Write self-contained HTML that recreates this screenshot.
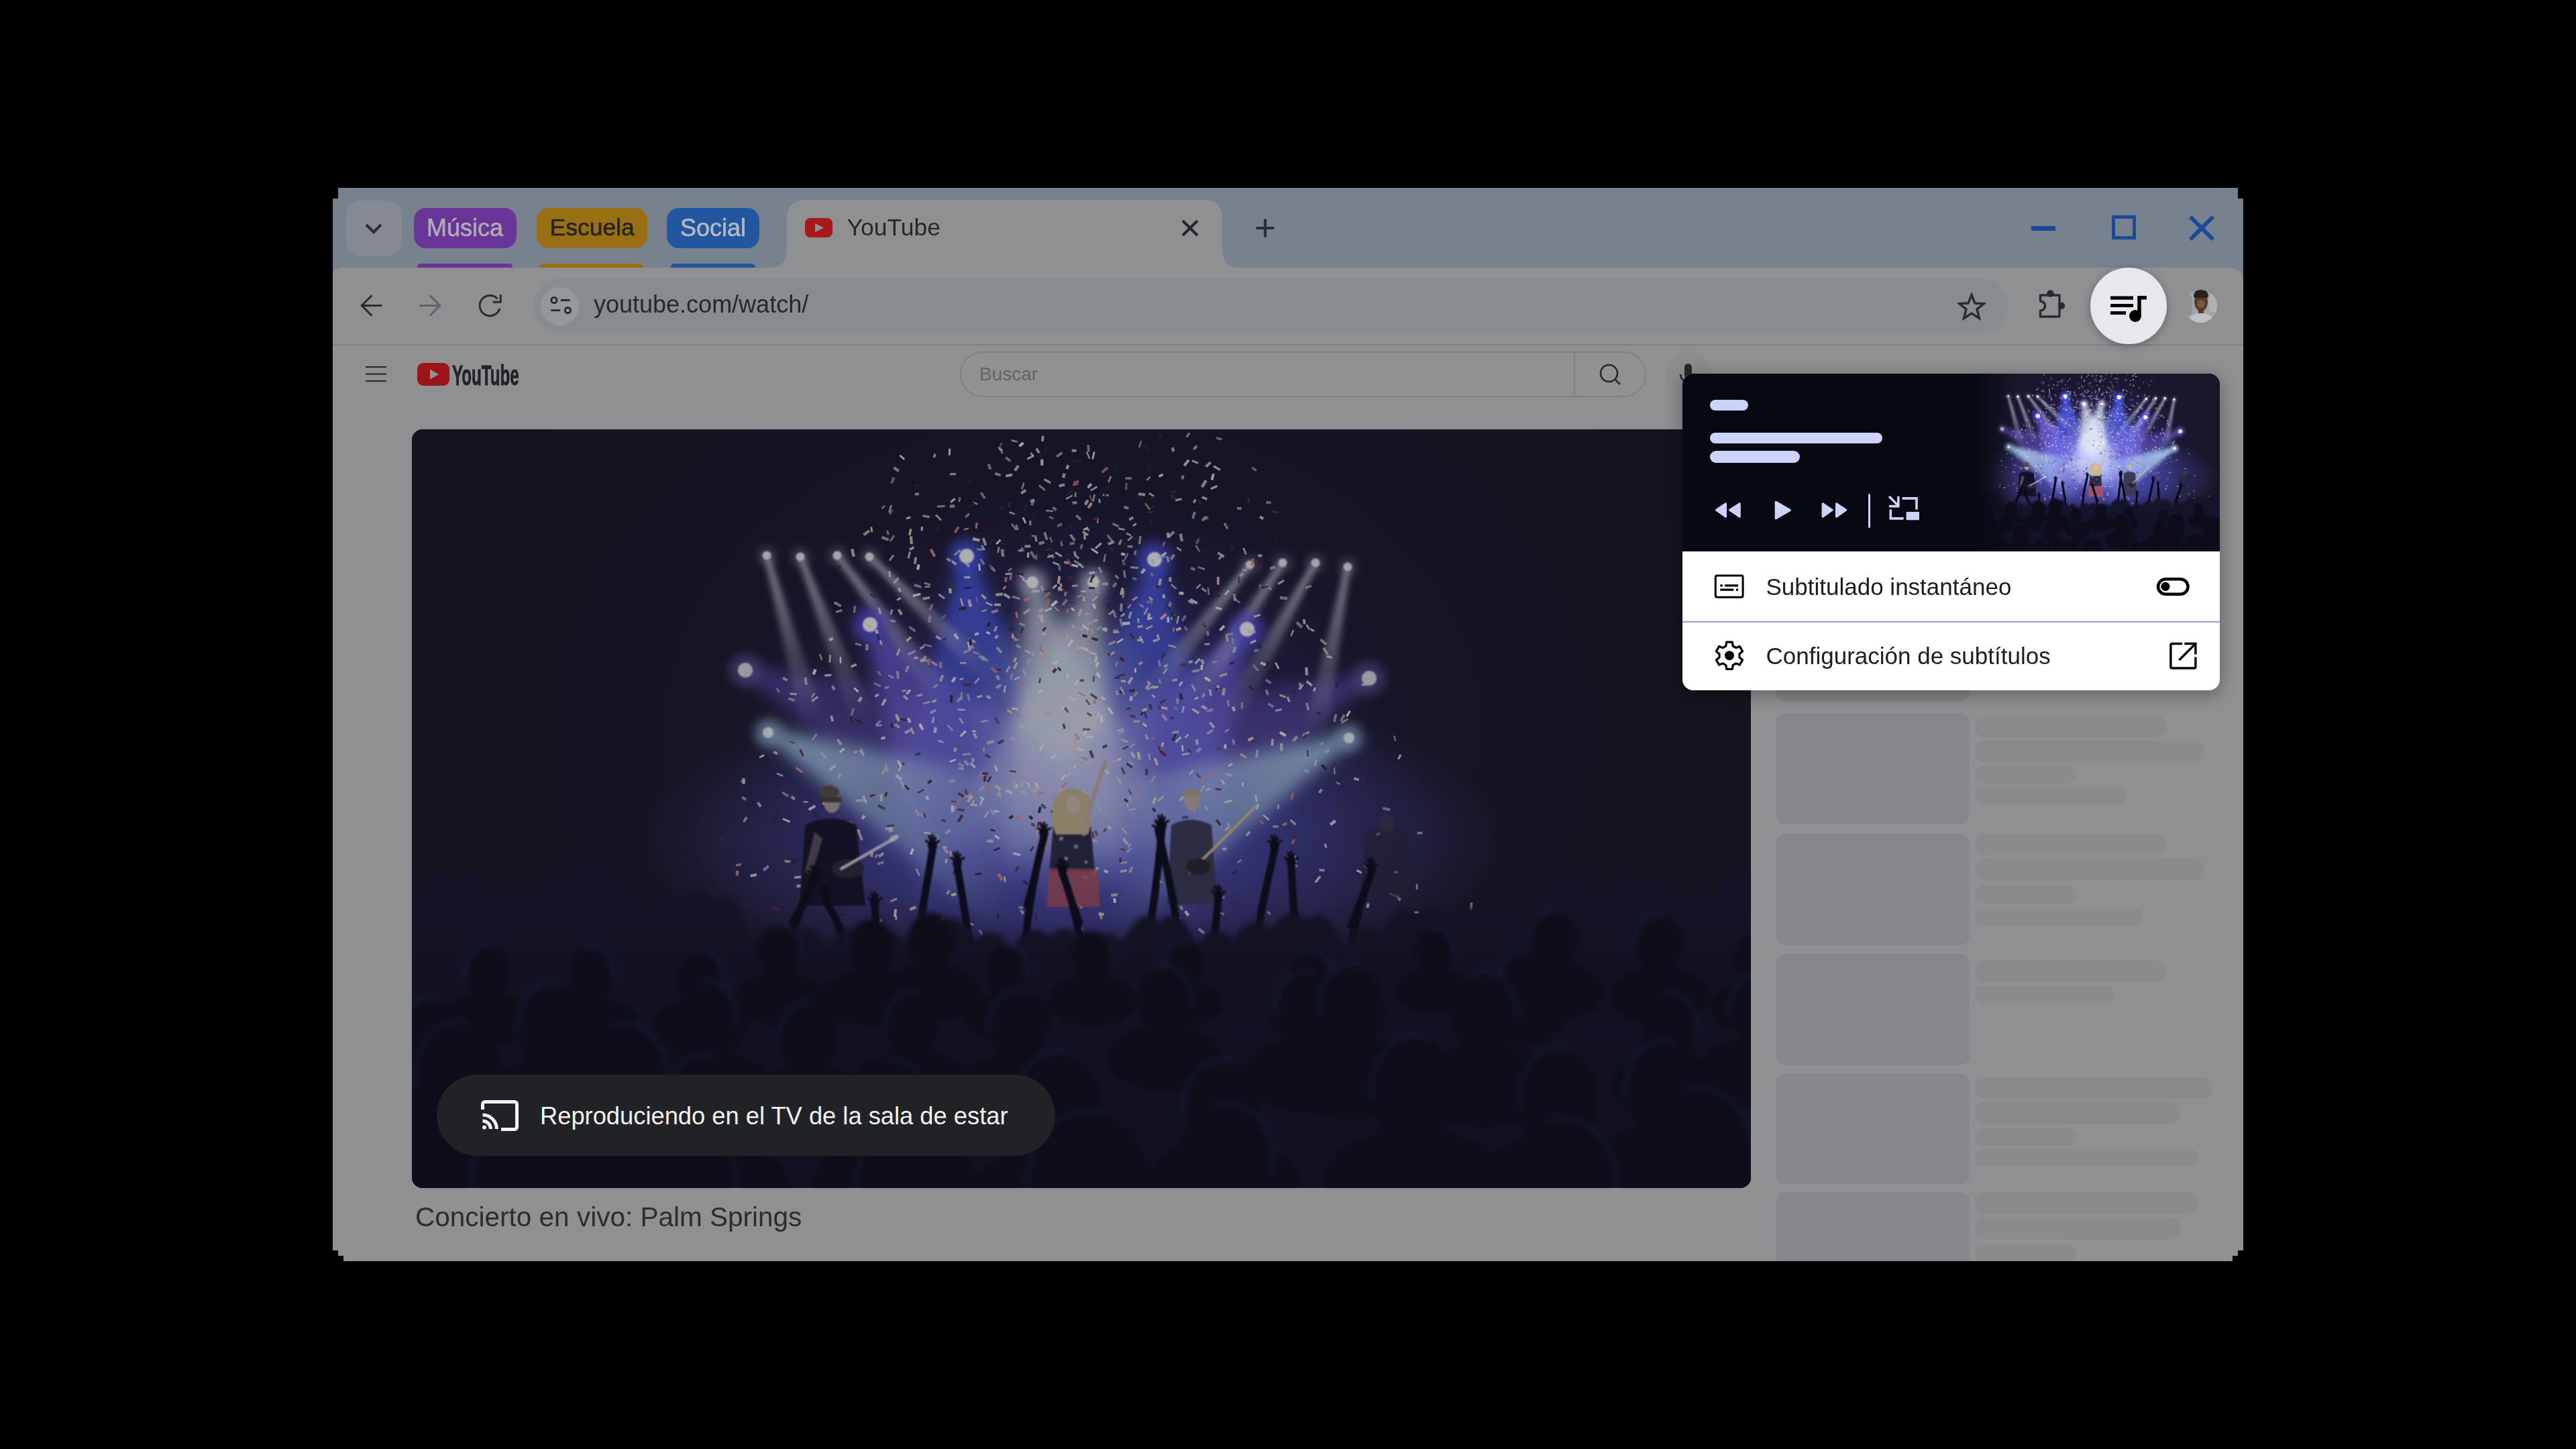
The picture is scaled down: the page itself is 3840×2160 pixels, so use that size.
<!DOCTYPE html>
<html><head><meta charset="utf-8">
<style>
html,body{margin:0;padding:0;}
body{width:3840px;height:2160px;background:#000;position:relative;overflow:hidden;font-family:"Liberation Sans",sans-serif;}
.a{position:absolute;}
.t{position:absolute;white-space:nowrap;line-height:1;}
#win{position:absolute;left:496px;top:280px;width:2848px;height:1600px;background:#8f9092;overflow:hidden;
clip-path:polygon(8px 0,2840px 0,2840px 16px,2848px 16px,2848px 1584px,2840px 1584px,2840px 1592px,2832px 1592px,2832px 1600px,16px 1600px,16px 1592px,8px 1592px,8px 1584px,0 1584px,0 16px,8px 16px);}
#win .a, #win .t{}
svg{display:block;}
</style></head><body>
<div id="win">
  <!-- tab strip -->
  <div class="a" style="left:0;top:0;width:2848px;height:170px;background:#78828e;"></div>
  <!-- dropdown btn -->
  <div class="a" style="left:20px;top:19px;width:83px;height:83px;border-radius:22px;background:#858991;"></div>
  <svg class="a" style="left:48px;top:52px" width="26" height="18" viewBox="0 0 26 18"><path d="M2 3 L13 14 L24 3" fill="none" stroke="#2b2d32" stroke-width="4.2"/></svg>
  <!-- groups -->
  <div class="a" style="left:121px;top:30px;width:153px;height:60px;border-radius:18px;background:#6a3598;"></div>
  <div class="t" style="left:140px;top:41.5px;font-size:36px;color:#adadb1;-webkit-text-stroke:0.6px #adadb1;">Música</div>
  <div class="a" style="left:126px;top:113px;width:142px;height:8px;border-radius:5px 5px 0 0;background:#6a3598;"></div>
  <div class="a" style="left:304px;top:30px;width:165px;height:60px;border-radius:18px;background:#986f12;"></div>
  <div class="t" style="left:323.5px;top:41.5px;font-size:35.5px;color:#25231f;-webkit-text-stroke:0.6px #25231f;">Escuela</div>
  <div class="a" style="left:309px;top:113px;width:154px;height:8px;border-radius:5px 5px 0 0;background:#986f12;"></div>
  <div class="a" style="left:498px;top:30px;width:138px;height:60px;border-radius:18px;background:#2356a0;"></div>
  <div class="t" style="left:518px;top:41.5px;font-size:36px;color:#b3b9c4;-webkit-text-stroke:0.6px #b3b9c4;">Social</div>
  <div class="a" style="left:504px;top:113px;width:126px;height:8px;border-radius:5px 5px 0 0;background:#2356a0;"></div>
  <!-- active tab -->
  <svg class="a" style="left:649px;top:18px" width="705" height="102" viewBox="0 0 705 102">
    <path d="M0 102 Q28 102 28 74 L28 28 Q28 0 56 0 L649 0 Q677 0 677 28 L677 74 Q677 102 705 102 Z" fill="#8e9091"/>
  </svg>
  <svg class="a" style="left:704px;top:45px" width="41" height="29" viewBox="0 0 41 29"><rect x="0" y="0" width="41" height="29" rx="8" fill="#a8191c"/><path d="M15 8 L28 14.5 L15 21 Z" fill="#8e9091"/></svg>
  <div class="t" style="left:766.5px;top:42px;font-size:35.5px;color:#27282a;">YouTube</div>
  <svg class="a" style="left:1264px;top:46px" width="28" height="28" viewBox="0 0 28 28"><path d="M3 3 L25 25 M25 3 L3 25" stroke="#26272a" stroke-width="4.2"/></svg>
  <svg class="a" style="left:1375px;top:45px" width="30" height="30" viewBox="0 0 30 30"><path d="M15 1.5 V28.5 M1.5 15 H28.5" stroke="#2a2d33" stroke-width="4.2"/></svg>
  <!-- window controls -->
  <div class="a" style="left:2532px;top:57px;width:36px;height:6.5px;background:#1c4a98;"></div>
  <div class="a" style="left:2652px;top:41px;width:26px;height:26px;border:5.5px solid #1c4a98;"></div>
  <svg class="a" style="left:2766px;top:40px" width="40" height="40" viewBox="0 0 40 40"><path d="M3 3 L37 37 M37 3 L3 37" stroke="#1c4a98" stroke-width="6"/></svg>

  <!-- toolbar -->
  <div class="a" style="left:0;top:119px;width:2848px;height:120px;background:#8e9091;border-radius:12px 20px 0 0;"></div>
  <div class="a" style="left:0;top:233px;width:2848px;height:2px;background:#7e8082;"></div>
  <!-- back fwd reload -->
  <svg class="a" style="left:40px;top:159px" width="36" height="34" viewBox="0 0 36 34"><path d="M33.2 16.4 H3.5 M18.5 1.2 L3.2 16.4 L18.5 31.8" fill="none" stroke="#2b2c2f" stroke-width="3"/></svg>
  <svg class="a" style="left:127px;top:159px" width="36" height="34" viewBox="0 0 36 34"><path d="M2.3 16.4 H32 M17.6 1.2 L32.8 16.4 L17.6 31.8" fill="none" stroke="#606266" stroke-width="3"/></svg>
  <svg class="a" style="left:215px;top:157px" width="40" height="40" viewBox="0 0 40 40"><path d="M33.9 23 A15.2 15.2 0 1 1 30.6 8.4" fill="none" stroke="#2b2c2f" stroke-width="3"/><path d="M35.3 1.9 V13.2 H23.8" fill="none" stroke="#2b2c2f" stroke-width="3"/></svg>
  <!-- omnibox -->
  <div class="a" style="left:299px;top:135px;width:2199px;height:82px;border-radius:41px;background:#888b90;"></div>
  <div class="a" style="left:310px;top:147.5px;width:57px;height:57px;border-radius:50%;background:#94979b;"></div>
  <svg class="a" style="left:322px;top:160px" width="36" height="32" viewBox="0 0 36 32"><circle cx="7.9" cy="7.5" r="4.1" fill="none" stroke="#27292c" stroke-width="2.9"/><path d="M17.9 7.5 H31.6 M3.4 22.6 H17.2" stroke="#27292c" stroke-width="2.9"/><circle cx="28.4" cy="22.6" r="4.1" fill="none" stroke="#27292c" stroke-width="2.9"/></svg>
  <div class="t" style="left:389px;top:156px;font-size:36px;color:#26282b;">youtube.com/watch/</div>
  <!-- star -->
  <svg class="a" style="left:2422px;top:156px" width="42" height="42" viewBox="0 0 42 42"><path d="M21 3.5 L26 16 L39.5 16.5 L29 25 L32.5 38.5 L21 31 L9.5 38.5 L13 25 L2.5 16.5 L16 16 Z" fill="none" stroke="#2a2c2f" stroke-width="3.4" stroke-linejoin="miter"/></svg>
  <!-- puzzle -->
  <svg class="a" style="left:2534px;top:148px" width="52" height="52" viewBox="0 0 52 52"><path d="M11.5 12 H40 V44 H11.5 V35 A7 7 0 0 0 11.5 21 Z" fill="none" stroke="#2a2c2f" stroke-width="3.4" stroke-linejoin="round"/><circle cx="26.5" cy="9.5" r="5.2" fill="#2a2c2f"/><circle cx="43" cy="27.7" r="5.2" fill="#2a2c2f"/></svg>
  <!-- avatar -->
  <div class="a" style="left:2759.5px;top:151.5px;width:49px;height:49px;border-radius:50%;background:#a3a4a5;overflow:hidden;">
    <div class="a" style="left:-2px;top:8px;width:14px;height:30px;border-radius:6px;background:#8e8f90;"></div>
    <div class="a" style="left:37px;top:6px;width:14px;height:28px;border-radius:6px;background:#b0b1b2;"></div>
    <div class="a" style="left:21px;top:28px;width:8px;height:9px;background:#5a3a2a;"></div>
    <div class="a" style="left:8px;top:35px;width:34px;height:22px;border-radius:45% 45% 0 0;background:#bfc0c1;"></div>
    <div class="a" style="left:15px;top:4px;width:20px;height:28px;border-radius:50%;background:#5a3c2c;"></div>
    <div class="a" style="left:19px;top:15px;width:12px;height:12px;border-radius:50%;background:#7a5644;"></div>
    <div class="a" style="left:14px;top:0px;width:22px;height:12px;border-radius:11px 11px 4px 4px;background:#262220;"></div>
  </div>

  <!-- youtube header -->
  <svg class="a" style="left:48px;top:265px" width="34" height="26" viewBox="0 0 34 26"><path d="M1 2 H32 M1 12.5 H32 M1 23 H32" stroke="#222326" stroke-width="2.2"/></svg>
  <svg class="a" style="left:126px;top:261px" width="154" height="36" viewBox="0 0 154 36"><rect x="0" y="0" width="48" height="34" rx="9" fill="#9c1519"/><path d="M19 9.5 L32 17 L19 24.5 Z" fill="#919191"/></svg>
  <div class="t" style="left:178px;top:259px;font-size:42px;font-weight:bold;color:#222326;transform:scaleX(0.575);transform-origin:0 0;-webkit-text-stroke:0.9px #222326;">YouTube</div>
  <!-- search -->
  <div class="a" style="left:935px;top:244px;width:1019px;height:64px;border-radius:34px;border:2px solid #808183;background:#919191;"></div>
  <div class="a" style="left:1850px;top:246px;width:2px;height:64px;background:#808183;"></div>
  <div class="t" style="left:964px;top:263.5px;font-size:28px;color:#626467;">Buscar</div>
  <svg class="a" style="left:1887px;top:261px" width="34" height="34" viewBox="0 0 34 34"><circle cx="15.5" cy="15.5" r="12.5" fill="none" stroke="#27282a" stroke-width="2.6"/><path d="M24.5 24.5 L32 32" stroke="#27282a" stroke-width="2.6"/></svg>
  <div class="a" style="left:1986px;top:243px;width:68px;height:68px;border-radius:50%;background:#8b8c8d;"></div>
  <svg class="a" style="left:2004px;top:260px" width="34" height="40" viewBox="0 0 34 40"><rect x="11" y="2" width="11" height="22" rx="5.5" fill="#27282a"/><path d="M5 18 A11.5 11.5 0 0 0 28 18 M16.5 30 V37" fill="none" stroke="#27282a" stroke-width="2.6"/></svg>

  <div class="a" style="left:118px;top:360px;width:1996px;height:1131px;border-radius:16px;overflow:hidden;background:#0e0c22;">
<svg width="1996" height="1131" viewBox="0 0 1996 1131"><defs>
<filter id="blurW" color-interpolation-filters="sRGB" x="-30%" y="-30%" width="160%" height="160%"><feGaussianBlur stdDeviation="12"/></filter>
<filter id="blurT" color-interpolation-filters="sRGB" x="-30%" y="-30%" width="160%" height="160%"><feGaussianBlur stdDeviation="5"/></filter>
<filter id="blur8" color-interpolation-filters="sRGB" x="-100%" y="-100%" width="300%" height="300%"><feGaussianBlur stdDeviation="8"/></filter>
<filter id="blur1" color-interpolation-filters="sRGB" x="-50%" y="-50%" width="200%" height="200%"><feGaussianBlur stdDeviation="1.2"/></filter>
<filter id="blur2" color-interpolation-filters="sRGB" x="-20%" y="-20%" width="140%" height="140%"><feGaussianBlur stdDeviation="2"/></filter>
<filter id="blur4" color-interpolation-filters="sRGB" x="-10%" y="-10%" width="120%" height="120%"><feGaussianBlur stdDeviation="4"/></filter>
<radialGradient id="rg1" cx="0" cy="0" r="1" gradientUnits="userSpaceOnUse" gradientTransform="translate(985 450) scale(1000 760)"><stop offset="0" stop-color="#241e52"/><stop offset="0.5" stop-color="#1a162e"/><stop offset="1" stop-color="#181622"/></radialGradient>
<linearGradient id="lgc" x1="0" y1="640" x2="0" y2="940" gradientUnits="userSpaceOnUse"><stop offset="0" stop-color="#18152e"/><stop offset="1" stop-color="#131228"/></linearGradient><linearGradient id="lg1" x1="0" y1="0" x2="0" y2="1"><stop offset="0" stop-color="#0a0a1c" stop-opacity="0"/><stop offset="0.35" stop-color="#12102a" stop-opacity="0.4"/><stop offset="1" stop-color="#100e22" stop-opacity="0.6"/></linearGradient>
<radialGradient id="eg1"><stop offset="0" stop-color="#4a50d8" stop-opacity="0.95"/><stop offset="0.5" stop-color="#4a50d8" stop-opacity="0.52"/><stop offset="1" stop-color="#4a50d8" stop-opacity="0"/></radialGradient><radialGradient id="eg2"><stop offset="0" stop-color="#4038b8" stop-opacity="0.35"/><stop offset="0.5" stop-color="#4038b8" stop-opacity="0.19"/><stop offset="1" stop-color="#4038b8" stop-opacity="0"/></radialGradient><radialGradient id="eg3"><stop offset="0" stop-color="#d0dcf8" stop-opacity="0.55"/><stop offset="0.5" stop-color="#d0dcf8" stop-opacity="0.30"/><stop offset="1" stop-color="#d0dcf8" stop-opacity="0"/></radialGradient><linearGradient id="bg4" gradientUnits="userSpaceOnUse" x1="827" y1="189" x2="859.1" y2="647.9"><stop offset="0" stop-color="#3048f0" stop-opacity="0.95"/><stop offset="0.5" stop-color="#3048f0" stop-opacity="0.57"/><stop offset="1" stop-color="#3048f0" stop-opacity="0"/></linearGradient><linearGradient id="bg5" gradientUnits="userSpaceOnUse" x1="1107" y1="194" x2="1074.9" y2="652.9"><stop offset="0" stop-color="#3048f0" stop-opacity="0.95"/><stop offset="0.5" stop-color="#3048f0" stop-opacity="0.57"/><stop offset="1" stop-color="#3048f0" stop-opacity="0"/></linearGradient><linearGradient id="bg6" gradientUnits="userSpaceOnUse" x1="925" y1="228" x2="1016.5" y2="658.4"><stop offset="0" stop-color="#d8e8ff" stop-opacity="0.8"/><stop offset="0.55" stop-color="#d8e8ff" stop-opacity="0.56"/><stop offset="1" stop-color="#d8e8ff" stop-opacity="0"/></linearGradient><linearGradient id="bg7" gradientUnits="userSpaceOnUse" x1="1016" y1="228" x2="924.5" y2="658.4"><stop offset="0" stop-color="#d8e8ff" stop-opacity="0.8"/><stop offset="0.55" stop-color="#d8e8ff" stop-opacity="0.56"/><stop offset="1" stop-color="#d8e8ff" stop-opacity="0"/></linearGradient><linearGradient id="bg8" gradientUnits="userSpaceOnUse" x1="683" y1="291" x2="916.2" y2="664.1"><stop offset="0" stop-color="#5c54f0" stop-opacity="0.85"/><stop offset="0.5" stop-color="#5c54f0" stop-opacity="0.47"/><stop offset="1" stop-color="#5c54f0" stop-opacity="0"/></linearGradient><linearGradient id="bg9" gradientUnits="userSpaceOnUse" x1="1245" y1="298" x2="1011.8" y2="671.1"><stop offset="0" stop-color="#5c54f0" stop-opacity="0.85"/><stop offset="0.5" stop-color="#5c54f0" stop-opacity="0.47"/><stop offset="1" stop-color="#5c54f0" stop-opacity="0"/></linearGradient><linearGradient id="bg10" gradientUnits="userSpaceOnUse" x1="497" y1="359" x2="844.1" y2="513.6"><stop offset="0" stop-color="#5a44c8" stop-opacity="0.7"/><stop offset="0.5" stop-color="#5a44c8" stop-opacity="0.35"/><stop offset="1" stop-color="#5a44c8" stop-opacity="0"/></linearGradient><linearGradient id="bg11" gradientUnits="userSpaceOnUse" x1="1427" y1="371" x2="1079.9" y2="525.6"><stop offset="0" stop-color="#5a44c8" stop-opacity="0.7"/><stop offset="0.5" stop-color="#5a44c8" stop-opacity="0.35"/><stop offset="1" stop-color="#5a44c8" stop-opacity="0"/></linearGradient><linearGradient id="bg12" gradientUnits="userSpaceOnUse" x1="531" y1="452" x2="926.5" y2="644.9"><stop offset="0" stop-color="#a8d8ff" stop-opacity="0.95"/><stop offset="0.45" stop-color="#a8d8ff" stop-opacity="0.57"/><stop offset="1" stop-color="#a8d8ff" stop-opacity="0"/></linearGradient><linearGradient id="bg13" gradientUnits="userSpaceOnUse" x1="1397" y1="460" x2="1001.5" y2="652.9"><stop offset="0" stop-color="#a8d8ff" stop-opacity="0.95"/><stop offset="0.45" stop-color="#a8d8ff" stop-opacity="0.57"/><stop offset="1" stop-color="#a8d8ff" stop-opacity="0"/></linearGradient><linearGradient id="bg14" gradientUnits="userSpaceOnUse" x1="529" y1="188" x2="598.5" y2="438.5"><stop offset="0" stop-color="#d8dcf0" stop-opacity="0.8"/><stop offset="0.5" stop-color="#d8dcf0" stop-opacity="0.40"/><stop offset="1" stop-color="#d8dcf0" stop-opacity="0"/></linearGradient><linearGradient id="bg15" gradientUnits="userSpaceOnUse" x1="579" y1="190" x2="672.2" y2="432.7"><stop offset="0" stop-color="#d8dcf0" stop-opacity="0.8"/><stop offset="0.5" stop-color="#d8dcf0" stop-opacity="0.40"/><stop offset="1" stop-color="#d8dcf0" stop-opacity="0"/></linearGradient><linearGradient id="bg16" gradientUnits="userSpaceOnUse" x1="634" y1="188" x2="790.5" y2="395.6"><stop offset="0" stop-color="#d8dcf0" stop-opacity="0.8"/><stop offset="0.5" stop-color="#d8dcf0" stop-opacity="0.40"/><stop offset="1" stop-color="#d8dcf0" stop-opacity="0"/></linearGradient><linearGradient id="bg17" gradientUnits="userSpaceOnUse" x1="682" y1="190" x2="867.4" y2="372.2"><stop offset="0" stop-color="#d8dcf0" stop-opacity="0.8"/><stop offset="0.5" stop-color="#d8dcf0" stop-opacity="0.40"/><stop offset="1" stop-color="#d8dcf0" stop-opacity="0"/></linearGradient><linearGradient id="bg18" gradientUnits="userSpaceOnUse" x1="1249" y1="202" x2="1088.9" y2="406.9"><stop offset="0" stop-color="#d8dcf0" stop-opacity="0.8"/><stop offset="0.5" stop-color="#d8dcf0" stop-opacity="0.40"/><stop offset="1" stop-color="#d8dcf0" stop-opacity="0"/></linearGradient><linearGradient id="bg19" gradientUnits="userSpaceOnUse" x1="1298" y1="199" x2="1156.4" y2="417.1"><stop offset="0" stop-color="#d8dcf0" stop-opacity="0.8"/><stop offset="0.5" stop-color="#d8dcf0" stop-opacity="0.40"/><stop offset="1" stop-color="#d8dcf0" stop-opacity="0"/></linearGradient><linearGradient id="bg20" gradientUnits="userSpaceOnUse" x1="1347" y1="199" x2="1220.9" y2="426.4"><stop offset="0" stop-color="#d8dcf0" stop-opacity="0.8"/><stop offset="0.5" stop-color="#d8dcf0" stop-opacity="0.40"/><stop offset="1" stop-color="#d8dcf0" stop-opacity="0"/></linearGradient><linearGradient id="bg21" gradientUnits="userSpaceOnUse" x1="1395" y1="205" x2="1345.4" y2="460.2"><stop offset="0" stop-color="#d8dcf0" stop-opacity="0.8"/><stop offset="0.5" stop-color="#d8dcf0" stop-opacity="0.40"/><stop offset="1" stop-color="#d8dcf0" stop-opacity="0"/></linearGradient>
</defs><g id="scene">
<rect x="0" y="0" width="1996" height="1131" fill="url(#rg1)"/>
<g style="mix-blend-mode:screen"><ellipse cx="985" cy="610" rx="640" ry="240" fill="url(#eg1)"/><ellipse cx="985" cy="450" rx="460" ry="330" fill="url(#eg2)"/><ellipse cx="975" cy="470" rx="150" ry="240" fill="url(#eg3)"/></g>
<g filter="url(#blurW)" style="mix-blend-mode:screen"><path d="M834 188.5 L1021.1 608.7 L693.2 631.7 L820 189.5 Z" fill="url(#bg4)"/><path d="M1114 194.5 L1240.8 636.7 L912.9 613.7 L1100 193.5 Z" fill="url(#bg5)"/><path d="M931.8 226.5 L1145.2 611.4 L879.8 667.8 L918.2 229.5 Z" fill="url(#bg6)"/><path d="M1022.8 229.5 L1061.2 667.8 L795.8 611.4 L1009.2 226.5 Z" fill="url(#bg7)"/><path d="M688.9 287.3 L1040.3 552.1 L761 726.6 L677.1 294.7 Z" fill="url(#bg8)"/><path d="M1250.9 301.7 L1167 733.6 L887.7 559.1 L1239.1 294.3 Z" fill="url(#bg9)"/><path d="M499.4 353.5 L875.7 406.4 L785.7 608.7 L494.6 364.5 Z" fill="url(#bg10)"/><path d="M1429.4 376.5 L1138.3 620.7 L1048.3 418.4 L1424.6 365.5 Z" fill="url(#bg11)"/><path d="M533.6 446.6 L964 538.1 L865.4 740.2 L528.4 457.4 Z" fill="url(#bg12)"/><path d="M1399.6 465.4 L1062.6 748.2 L964 546.1 L1394.4 454.6 Z" fill="url(#bg13)"/></g>
<g filter="url(#blurT)" style="mix-blend-mode:screen"><path d="M532.9 186.9 L615.4 433.5 L581.4 442.9 L525.1 189.1 Z" fill="url(#bg14)"/><path d="M582.7 188.6 L688.5 426.1 L655.6 438.7 L575.3 191.4 Z" fill="url(#bg15)"/><path d="M637.2 185.6 L804.3 384.8 L776.2 406 L630.8 190.4 Z" fill="url(#bg16)"/><path d="M684.8 187.1 L879.5 359.4 L854.8 384.5 L679.2 192.9 Z" fill="url(#bg17)"/><path d="M1252.2 204.5 L1103 417.4 L1075.3 395.8 L1245.8 199.5 Z" fill="url(#bg18)"/><path d="M1301.4 201.2 L1171.4 426.3 L1141.8 407.2 L1294.6 196.8 Z" fill="url(#bg19)"/><path d="M1350.5 200.9 L1236.5 434.6 L1205.7 417.6 L1343.5 197.1 Z" fill="url(#bg20)"/><path d="M1398.9 205.8 L1362.7 463.2 L1328.2 456.5 L1391.1 204.2 Z" fill="url(#bg21)"/></g>
<circle cx="529" cy="188" r="11.7" fill="#c0c0d8" opacity="0.45" filter="url(#blur8)"/><circle cx="529" cy="188" r="6.5" fill="#f0f0f4" filter="url(#blur1)"/><circle cx="579" cy="190" r="11.7" fill="#c0c0d8" opacity="0.45" filter="url(#blur8)"/><circle cx="579" cy="190" r="6.5" fill="#f0f0f4" filter="url(#blur1)"/><circle cx="634" cy="188" r="11.7" fill="#c0c0d8" opacity="0.45" filter="url(#blur8)"/><circle cx="634" cy="188" r="6.5" fill="#f0f0f4" filter="url(#blur1)"/><circle cx="682" cy="190" r="11.7" fill="#c0c0d8" opacity="0.45" filter="url(#blur8)"/><circle cx="682" cy="190" r="6.5" fill="#f0f0f4" filter="url(#blur1)"/><circle cx="1249" cy="202" r="11.7" fill="#c0c0d8" opacity="0.45" filter="url(#blur8)"/><circle cx="1249" cy="202" r="6.5" fill="#f0f0f4" filter="url(#blur1)"/><circle cx="1298" cy="199" r="11.7" fill="#c0c0d8" opacity="0.45" filter="url(#blur8)"/><circle cx="1298" cy="199" r="6.5" fill="#f0f0f4" filter="url(#blur1)"/><circle cx="1347" cy="199" r="11.7" fill="#c0c0d8" opacity="0.45" filter="url(#blur8)"/><circle cx="1347" cy="199" r="6.5" fill="#f0f0f4" filter="url(#blur1)"/><circle cx="1395" cy="205" r="11.7" fill="#c0c0d8" opacity="0.45" filter="url(#blur8)"/><circle cx="1395" cy="205" r="6.5" fill="#f0f0f4" filter="url(#blur1)"/><circle cx="827" cy="189" r="26.4" fill="#5060ff" opacity="0.7" filter="url(#blur8)"/><circle cx="827" cy="189" r="11" fill="#ffffff" filter="url(#blur1)"/><circle cx="1107" cy="194" r="26.4" fill="#5060ff" opacity="0.7" filter="url(#blur8)"/><circle cx="1107" cy="194" r="11" fill="#ffffff" filter="url(#blur1)"/><circle cx="925" cy="228" r="21.6" fill="#e0e8ff" opacity="0.6" filter="url(#blur8)"/><circle cx="925" cy="228" r="9" fill="#ffffff" filter="url(#blur1)"/><circle cx="1016" cy="228" r="21.6" fill="#e0e8ff" opacity="0.6" filter="url(#blur8)"/><circle cx="1016" cy="228" r="9" fill="#ffffff" filter="url(#blur1)"/><circle cx="683" cy="291" r="26.4" fill="#6058ff" opacity="0.7" filter="url(#blur8)"/><circle cx="683" cy="291" r="11" fill="#ffffff" filter="url(#blur1)"/><circle cx="1245" cy="298" r="26.4" fill="#6058ff" opacity="0.7" filter="url(#blur8)"/><circle cx="1245" cy="298" r="11" fill="#ffffff" filter="url(#blur1)"/><circle cx="497" cy="359" r="24.2" fill="#8070d0" opacity="0.5" filter="url(#blur8)"/><circle cx="497" cy="359" r="11" fill="#e0e0ec" filter="url(#blur1)"/><circle cx="1427" cy="371" r="24.2" fill="#8070d0" opacity="0.5" filter="url(#blur8)"/><circle cx="1427" cy="371" r="11" fill="#e0e0ec" filter="url(#blur1)"/><circle cx="531" cy="452" r="20.8" fill="#b0d8ff" opacity="0.6" filter="url(#blur8)"/><circle cx="531" cy="452" r="8" fill="#f0f8ff" filter="url(#blur1)"/><circle cx="1397" cy="460" r="20.8" fill="#b0d8ff" opacity="0.6" filter="url(#blur8)"/><circle cx="1397" cy="460" r="8" fill="#f0f8ff" filter="url(#blur1)"/>
<g><rect x="723.6" y="237.6" width="6.4" height="3.6" fill="#f0d0d8" opacity="0.9" transform="rotate(65 726.9 239.4)"/><rect x="1013.4" y="310.8" width="9.4" height="3.9" fill="#1a2a3a" opacity="0.8" transform="rotate(18 1018.1 312.7)"/><rect x="1043.7" y="229.8" width="7.8" height="4.1" fill="#f8e8c0" opacity="0.6" transform="rotate(125 1047.6 231.9)"/><rect x="977.1" y="219.3" width="8.7" height="3.7" fill="#6a2a38" opacity="0.7" transform="rotate(13 981.5 221.2)"/><rect x="763.4" y="662.4" width="9.5" height="3.4" fill="#e09090" opacity="0.7" transform="rotate(151 768.2 664.1)"/><rect x="1468.5" y="486.7" width="7.7" height="3.3" fill="#f0d0d8" opacity="0.9" transform="rotate(120 1472.3 488.3)"/><rect x="1066.1" y="262.2" width="7.3" height="3.1" fill="#f0c0d8" opacity="0.7" transform="rotate(132 1069.7 263.7)"/><rect x="1329.5" y="411.5" width="11.2" height="3.1" fill="#b8dcf8" opacity="0.8" transform="rotate(74 1335.1 413.1)"/><rect x="1190.5" y="84.9" width="10.4" height="3.4" fill="#ffffff" opacity="0.8" transform="rotate(156 1195.7 86.6)"/><rect x="886.7" y="419" width="8.9" height="3.3" fill="#f8e8c0" opacity="0.7" transform="rotate(34 891.2 420.6)"/><rect x="1014.1" y="425.1" width="9.7" height="2.6" fill="#f0c0d8" opacity="0.6" transform="rotate(37 1018.9 426.4)"/><rect x="875" y="182" width="11.1" height="4.5" fill="#e0e0e8" opacity="0.7" transform="rotate(83 880.6 184.2)"/><rect x="1130" y="99.2" width="10.2" height="3.5" fill="#6a2a38" opacity="0.7" transform="rotate(36 1135 101)"/><rect x="1404.1" y="519.5" width="7.8" height="3.8" fill="#ffffff" opacity="0.7" transform="rotate(16 1408 521.4)"/><rect x="723.2" y="270.3" width="9.2" height="4.1" fill="#f8e8c0" opacity="0.8" transform="rotate(59 727.8 272.4)"/><rect x="913.6" y="172.3" width="9" height="4" fill="#ffffff" opacity="0.7" transform="rotate(178 918 174.3)"/><rect x="1111.9" y="187.3" width="11.6" height="4.5" fill="#b8dcf8" opacity="0.6" transform="rotate(171 1117.8 189.6)"/><rect x="796" y="688.4" width="6.7" height="3.3" fill="#f8e8c0" opacity="0.7" transform="rotate(128 799.4 690.1)"/><rect x="1338.5" y="297.7" width="7" height="2.8" fill="#e0e0e8" opacity="0.9" transform="rotate(27 1342 299.1)"/><rect x="1177.7" y="100.8" width="8.1" height="3.6" fill="#f0d0d8" opacity="0.9" transform="rotate(23 1181.7 102.6)"/><rect x="564.8" y="547.1" width="6.8" height="4.5" fill="#ffffff" opacity="0.6" transform="rotate(35 568.2 549.3)"/><rect x="755" y="439.4" width="6.8" height="4.3" fill="#e0e0e8" opacity="0.8" transform="rotate(63 758.4 441.6)"/><rect x="1000.3" y="616.2" width="6.8" height="2.8" fill="#ffffff" opacity="0.7" transform="rotate(91 1003.7 617.6)"/><rect x="1173.5" y="352.8" width="8" height="3.5" fill="#ffffff" opacity="0.9" transform="rotate(99 1177.4 354.6)"/><rect x="837.1" y="142" width="9" height="3" fill="#e09090" opacity="0.9" transform="rotate(94 841.6 143.5)"/><rect x="892.7" y="309.1" width="10" height="3.4" fill="#e09090" opacity="0.9" transform="rotate(38 897.7 310.8)"/><rect x="573.6" y="678.6" width="6.9" height="4.3" fill="#f8e8c0" opacity="0.8" transform="rotate(174 577 680.7)"/><rect x="701.6" y="502.6" width="12" height="3.3" fill="#b8dcf8" opacity="0.7" transform="rotate(75 707.5 504.2)"/><rect x="990.9" y="468.4" width="11.9" height="4.1" fill="#c8f0dc" opacity="0.6" transform="rotate(174 996.9 470.4)"/><rect x="1321.9" y="570.3" width="11.7" height="3.3" fill="#6a2a38" opacity="0.8" transform="rotate(96 1327.8 571.9)"/><rect x="482.9" y="647.5" width="8" height="3.6" fill="#e09090" opacity="0.8" transform="rotate(166 486.9 649.3)"/><rect x="1090.9" y="21.8" width="7.6" height="2.9" fill="#2a2a40" opacity="0.7" transform="rotate(167 1094.6 23.3)"/><rect x="755.2" y="573.5" width="8.1" height="2.5" fill="#f0d0d8" opacity="0.6" transform="rotate(45 759.2 574.8)"/><rect x="944.1" y="177.4" width="9.9" height="3.6" fill="#6a2a38" opacity="0.7" transform="rotate(159 949 179.2)"/><rect x="849.2" y="269.1" width="7.9" height="2.6" fill="#f8e8c0" opacity="0.7" transform="rotate(158 853.2 270.4)"/><rect x="1037.3" y="167.3" width="9.9" height="3.9" fill="#f0c0d8" opacity="0.9" transform="rotate(158 1042.3 169.3)"/><rect x="974.1" y="543.5" width="9.7" height="2.8" fill="#f0e0c8" opacity="0.9" transform="rotate(148 978.9 544.9)"/><rect x="1209.1" y="471.3" width="6.8" height="3.5" fill="#ffffff" opacity="0.9" transform="rotate(90 1212.5 473)"/><rect x="617.4" y="340.5" width="11.4" height="2.7" fill="#f0e0c8" opacity="0.8" transform="rotate(94 623.1 341.9)"/><rect x="669.1" y="549.8" width="11.9" height="3.5" fill="#e0e0e8" opacity="0.9" transform="rotate(68 675 551.6)"/><rect x="1044" y="140.8" width="10.2" height="3.7" fill="#e0e0e8" opacity="0.6" transform="rotate(24 1049.1 142.7)"/><rect x="1101" y="195.2" width="7.7" height="3.5" fill="#e0e0e8" opacity="0.9" transform="rotate(83 1104.9 197)"/><rect x="1416.1" y="377.9" width="8.3" height="4.3" fill="#c8f0dc" opacity="0.8" transform="rotate(167 1420.3 380.1)"/><rect x="991.1" y="619.4" width="7.4" height="4.3" fill="#f0d0d8" opacity="0.6" transform="rotate(87 994.8 621.6)"/><rect x="1202.6" y="719.8" width="8.5" height="3.3" fill="#b8dcf8" opacity="0.6" transform="rotate(21 1206.8 721.5)"/><rect x="897.1" y="275" width="9.5" height="3.2" fill="#e09090" opacity="0.9" transform="rotate(77 901.8 276.6)"/><rect x="637" y="477.4" width="8.6" height="3.1" fill="#ffffff" opacity="0.9" transform="rotate(139 641.3 478.9)"/><rect x="1344.4" y="669.1" width="11.6" height="3.6" fill="#f0d0d8" opacity="0.9" transform="rotate(129 1350.3 670.9)"/><rect x="964.8" y="657.8" width="7" height="3.3" fill="#e09090" opacity="0.8" transform="rotate(50 968.3 659.5)"/><rect x="801.8" y="112.3" width="7.3" height="4.3" fill="#e0e0e8" opacity="0.7" transform="rotate(179 805.5 114.5)"/><rect x="813.7" y="416.6" width="10.9" height="2.9" fill="#ffffff" opacity="0.7" transform="rotate(3 819.1 418)"/><rect x="1000.5" y="307.4" width="8" height="2.6" fill="#b8dcf8" opacity="0.6" transform="rotate(49 1004.5 308.7)"/><rect x="1095.1" y="376.1" width="7.3" height="3" fill="#f0c0d8" opacity="0.8" transform="rotate(44 1098.8 377.6)"/><rect x="824.5" y="321.1" width="11.8" height="2.8" fill="#ffffff" opacity="0.9" transform="rotate(76 830.4 322.5)"/><rect x="1317.3" y="289.2" width="11.1" height="4.4" fill="#c8f0dc" opacity="0.6" transform="rotate(44 1322.8 291.5)"/><rect x="1208" y="623.5" width="6.5" height="4.1" fill="#ffffff" opacity="0.6" transform="rotate(0 1211.2 625.6)"/><rect x="1075" y="182.1" width="6.4" height="3.5" fill="#f0c0d8" opacity="0.7" transform="rotate(104 1078.2 183.9)"/><rect x="689.1" y="634.7" width="6.2" height="3.3" fill="#f0d0d8" opacity="0.6" transform="rotate(116 692.2 636.3)"/><rect x="1133.7" y="371.8" width="7.5" height="3.8" fill="#f8e8c0" opacity="0.7" transform="rotate(166 1137.4 373.7)"/><rect x="1204.8" y="524.5" width="8.4" height="2.5" fill="#ffffff" opacity="0.8" transform="rotate(52 1209 525.8)"/><rect x="760.9" y="574.1" width="7.1" height="2.9" fill="#2a2a40" opacity="0.6" transform="rotate(75 764.4 575.6)"/><rect x="949.8" y="130.4" width="6.7" height="2.7" fill="#f8e8c0" opacity="0.6" transform="rotate(29 953.2 131.8)"/><rect x="859.4" y="500.2" width="8" height="2.8" fill="#e09090" opacity="0.6" transform="rotate(0 863.4 501.6)"/><rect x="850.8" y="572.9" width="10.8" height="2.7" fill="#f8e8c0" opacity="0.7" transform="rotate(126 856.2 574.3)"/><rect x="964.2" y="168.6" width="8.3" height="3" fill="#e0e0e8" opacity="0.6" transform="rotate(77 968.4 170.1)"/><rect x="552.5" y="370.4" width="7.8" height="3.9" fill="#f8e8c0" opacity="0.7" transform="rotate(27 556.4 372.3)"/><rect x="880.1" y="234.6" width="6.5" height="2.9" fill="#f8e8c0" opacity="0.7" transform="rotate(135 883.3 236.1)"/><rect x="963.4" y="488.5" width="7" height="3.4" fill="#c8f0dc" opacity="0.7" transform="rotate(18 966.9 490.2)"/><rect x="925.8" y="534.7" width="8.5" height="3.7" fill="#f0e0c8" opacity="0.8" transform="rotate(121 930 536.5)"/><rect x="1263" y="584.4" width="7.7" height="3" fill="#e09090" opacity="0.6" transform="rotate(45 1266.9 585.9)"/><rect x="1252.3" y="354.3" width="11.5" height="2.6" fill="#c8f0dc" opacity="0.6" transform="rotate(52 1258 355.6)"/><rect x="986.6" y="45.9" width="10.6" height="3.8" fill="#2a2a40" opacity="0.8" transform="rotate(1 991.9 47.8)"/><rect x="763.7" y="229.1" width="9.3" height="2.6" fill="#f0c0d8" opacity="0.8" transform="rotate(18 768.4 230.4)"/><rect x="1001.9" y="106.8" width="7.6" height="4.5" fill="#f0c0d8" opacity="0.9" transform="rotate(120 1005.7 109)"/><rect x="1029.3" y="228.4" width="8.5" height="4.2" fill="#b8dcf8" opacity="0.8" transform="rotate(179 1033.6 230.5)"/><rect x="905.5" y="289.5" width="8.6" height="2.8" fill="#c8f0dc" opacity="0.7" transform="rotate(20 909.8 290.9)"/><rect x="1110.4" y="412.8" width="6.5" height="3.7" fill="#6a2a38" opacity="0.6" transform="rotate(66 1113.7 414.7)"/><rect x="916.6" y="40.1" width="10.8" height="3.1" fill="#f0d0d8" opacity="0.9" transform="rotate(150 922 41.7)"/><rect x="596" y="359.6" width="8.3" height="4.3" fill="#ffffff" opacity="0.9" transform="rotate(111 600.1 361.7)"/><rect x="1330.7" y="481.6" width="9.7" height="2.9" fill="#1a2a3a" opacity="0.6" transform="rotate(85 1335.5 483)"/><rect x="995.9" y="296.3" width="6.7" height="3" fill="#f8e8c0" opacity="0.6" transform="rotate(130 999.3 297.8)"/><rect x="1096.8" y="411.7" width="8.5" height="3.7" fill="#2a2a40" opacity="0.7" transform="rotate(76 1101.1 413.5)"/><rect x="1358.9" y="619" width="6.4" height="3.2" fill="#ffffff" opacity="0.7" transform="rotate(65 1362.1 620.6)"/><rect x="983.7" y="29.7" width="6.8" height="4.2" fill="#f0e0c8" opacity="0.8" transform="rotate(179 987.1 31.8)"/><rect x="1310.1" y="612.4" width="7.3" height="4.2" fill="#e09090" opacity="0.6" transform="rotate(109 1313.7 614.5)"/><rect x="985.6" y="191" width="7.1" height="2.8" fill="#2a2a40" opacity="0.7" transform="rotate(168 989.2 192.4)"/><rect x="492.4" y="579.8" width="8.7" height="3.5" fill="#c8f0dc" opacity="0.7" transform="rotate(123 496.8 581.6)"/><rect x="1302.7" y="400.9" width="8.2" height="3.3" fill="#ffffff" opacity="0.7" transform="rotate(66 1306.8 402.5)"/><rect x="919.6" y="576.7" width="6.3" height="4.1" fill="#2a2a40" opacity="0.9" transform="rotate(45 922.7 578.8)"/><rect x="1476.8" y="658.7" width="10.5" height="2.9" fill="#2a2a40" opacity="0.7" transform="rotate(52 1482.1 660.1)"/><rect x="769.3" y="263.6" width="9.5" height="2.9" fill="#e0e0e8" opacity="0.6" transform="rotate(112 774.1 265)"/><rect x="1075.8" y="434" width="9" height="2.8" fill="#f0d0d8" opacity="0.8" transform="rotate(0 1080.3 435.4)"/><rect x="986.2" y="456.8" width="10.9" height="2.8" fill="#e09090" opacity="0.8" transform="rotate(55 991.7 458.2)"/><rect x="932.4" y="277" width="6.5" height="3.8" fill="#c8f0dc" opacity="0.7" transform="rotate(31 935.7 278.9)"/><rect x="607.8" y="483.7" width="11.6" height="4.4" fill="#f0d0d8" opacity="0.7" transform="rotate(47 613.6 485.9)"/><rect x="921.8" y="414.9" width="9.1" height="3" fill="#f8e8c0" opacity="0.6" transform="rotate(115 926.4 416.4)"/><rect x="688.6" y="379.3" width="11.1" height="2.9" fill="#b8dcf8" opacity="0.6" transform="rotate(28 694.2 380.7)"/><rect x="1059.3" y="287.1" width="11.1" height="4.3" fill="#ffffff" opacity="0.9" transform="rotate(176 1064.9 289.3)"/><rect x="1268.7" y="349.8" width="11.1" height="3.4" fill="#1a2a3a" opacity="0.9" transform="rotate(130 1274.3 351.5)"/><rect x="862.5" y="596.4" width="7" height="2.6" fill="#1a2a3a" opacity="0.9" transform="rotate(20 866 597.7)"/><rect x="1080.4" y="20.8" width="10.4" height="2.6" fill="#b8dcf8" opacity="0.6" transform="rotate(106 1085.6 22.1)"/><rect x="1021.3" y="723.1" width="10.5" height="3.9" fill="#f8e8c0" opacity="0.6" transform="rotate(69 1026.5 725)"/><rect x="711.8" y="74.1" width="9.8" height="4.2" fill="#e09090" opacity="0.7" transform="rotate(113 716.7 76.2)"/><rect x="435" y="704.3" width="10.6" height="3.7" fill="#e09090" opacity="0.8" transform="rotate(85 440.3 706.2)"/><rect x="936.2" y="11.9" width="8.1" height="3.9" fill="#f8e8c0" opacity="0.8" transform="rotate(96 940.3 13.9)"/><rect x="1064.5" y="625.9" width="9.1" height="3.1" fill="#f0d0d8" opacity="0.6" transform="rotate(135 1069 627.4)"/><rect x="974.1" y="366.2" width="7.1" height="3.5" fill="#ffffff" opacity="0.8" transform="rotate(62 977.6 367.9)"/><rect x="660.2" y="433.6" width="11.6" height="3" fill="#2a2a40" opacity="0.9" transform="rotate(29 666 435.1)"/><rect x="854.3" y="485.5" width="8.6" height="3.6" fill="#2a2a40" opacity="0.6" transform="rotate(30 858.6 487.3)"/><rect x="1006.4" y="343" width="10.5" height="3.8" fill="#b8dcf8" opacity="0.8" transform="rotate(62 1011.7 344.9)"/><rect x="869.6" y="166.4" width="9" height="3" fill="#ffffff" opacity="0.9" transform="rotate(135 874.2 167.9)"/><rect x="997.5" y="240" width="8" height="2.9" fill="#f0e0c8" opacity="0.9" transform="rotate(175 1001.4 241.5)"/><rect x="1218.8" y="174.5" width="9.9" height="4.2" fill="#2a2a40" opacity="0.9" transform="rotate(120 1223.8 176.6)"/><rect x="1197.4" y="584.3" width="9.8" height="3.4" fill="#2a2a40" opacity="0.8" transform="rotate(56 1202.3 586)"/><rect x="623.7" y="537.5" width="8.9" height="2.5" fill="#6a2a38" opacity="0.8" transform="rotate(154 628.2 538.7)"/><rect x="598.5" y="704.5" width="8.3" height="3.5" fill="#f0d0d8" opacity="0.7" transform="rotate(175 602.7 706.3)"/><rect x="1123.2" y="155.7" width="8.1" height="4.2" fill="#f8e8c0" opacity="0.8" transform="rotate(82 1127.2 157.8)"/><rect x="1103.6" y="382.7" width="9.1" height="3.3" fill="#f8e8c0" opacity="0.9" transform="rotate(170 1108.2 384.4)"/><rect x="988.9" y="129.6" width="9.7" height="3.8" fill="#f0c0d8" opacity="0.7" transform="rotate(45 993.7 131.5)"/><rect x="737.9" y="151.5" width="9.8" height="3.4" fill="#f8e8c0" opacity="0.9" transform="rotate(101 742.8 153.2)"/><rect x="1080.8" y="100.4" width="8.5" height="4.5" fill="#2a2a40" opacity="0.6" transform="rotate(136 1085.1 102.6)"/><rect x="789.3" y="278.4" width="7.1" height="2.5" fill="#e09090" opacity="0.7" transform="rotate(129 792.9 279.6)"/><rect x="801.5" y="492.6" width="9.7" height="2.7" fill="#ffffff" opacity="0.9" transform="rotate(161 806.4 493.9)"/><rect x="471.2" y="646.5" width="10.7" height="2.8" fill="#2a2a40" opacity="0.8" transform="rotate(149 476.5 647.9)"/><rect x="1056.9" y="214.2" width="11.1" height="2.9" fill="#ffffff" opacity="0.6" transform="rotate(81 1062.4 215.6)"/><rect x="1106.8" y="674.1" width="11.4" height="4.1" fill="#f8e8c0" opacity="0.7" transform="rotate(150 1112.5 676.2)"/><rect x="706" y="152.7" width="6.7" height="2.7" fill="#ffffff" opacity="0.6" transform="rotate(75 709.4 154.1)"/><rect x="974.2" y="99.9" width="11.2" height="2.5" fill="#e0e0e8" opacity="0.8" transform="rotate(151 979.8 101.2)"/><rect x="803.3" y="370.9" width="8.6" height="4.5" fill="#ffffff" opacity="0.8" transform="rotate(121 807.6 373.2)"/><rect x="995.1" y="744" width="6.2" height="3.9" fill="#b8dcf8" opacity="0.6" transform="rotate(112 998.2 745.9)"/><rect x="822.1" y="495.3" width="9.3" height="4.3" fill="#b8dcf8" opacity="0.7" transform="rotate(51 826.7 497.4)"/><rect x="794.3" y="597.9" width="9.5" height="3.8" fill="#f0d0d8" opacity="0.7" transform="rotate(141 799 599.8)"/><rect x="894.7" y="415.4" width="8.4" height="2.7" fill="#ffffff" opacity="0.9" transform="rotate(8 898.8 416.8)"/><rect x="1130.8" y="456.8" width="11.5" height="3.7" fill="#2a2a40" opacity="0.8" transform="rotate(111 1136.5 458.7)"/><rect x="1270.4" y="390.1" width="8.5" height="3.9" fill="#c8f0dc" opacity="0.6" transform="rotate(72 1274.7 392.1)"/><rect x="1051.5" y="286.4" width="11.9" height="3.5" fill="#c8f0dc" opacity="0.6" transform="rotate(74 1057.5 288.1)"/><rect x="964.5" y="81.4" width="8.7" height="4" fill="#b8dcf8" opacity="0.9" transform="rotate(166 968.9 83.4)"/><rect x="1351.3" y="537.6" width="6.5" height="3.8" fill="#e0e0e8" opacity="0.8" transform="rotate(127 1354.5 539.4)"/><rect x="872.9" y="463.8" width="9.6" height="4.4" fill="#1a2a3a" opacity="0.6" transform="rotate(150 877.7 466)"/><rect x="1037.9" y="271.6" width="10.1" height="2.8" fill="#b8dcf8" opacity="0.9" transform="rotate(143 1042.9 273)"/><rect x="929.5" y="587.6" width="8" height="3.1" fill="#2a2a40" opacity="0.8" transform="rotate(111 933.5 589.1)"/><rect x="790.2" y="625.3" width="11" height="3.7" fill="#f0c0d8" opacity="0.9" transform="rotate(55 795.7 627.1)"/><rect x="904.8" y="177.8" width="7.4" height="3.4" fill="#b8dcf8" opacity="0.7" transform="rotate(123 908.5 179.5)"/><rect x="1050" y="314" width="11.3" height="2.6" fill="#ffffff" opacity="0.9" transform="rotate(149 1055.6 315.3)"/><rect x="1233" y="410.1" width="9.2" height="3.6" fill="#f0c0d8" opacity="0.6" transform="rotate(87 1237.6 411.8)"/><rect x="1151.5" y="455.8" width="7.2" height="3" fill="#ffffff" opacity="0.7" transform="rotate(135 1155.1 457.3)"/><rect x="1014.6" y="404.6" width="6.4" height="3.3" fill="#e09090" opacity="0.9" transform="rotate(93 1017.8 406.2)"/><rect x="960.6" y="390.4" width="7.1" height="2.9" fill="#f0e0c8" opacity="0.7" transform="rotate(32 964.1 391.8)"/><rect x="847.5" y="433.5" width="11.1" height="3" fill="#e0e0e8" opacity="0.7" transform="rotate(166 853.1 435)"/><rect x="834.6" y="448.6" width="6.1" height="2.6" fill="#ffffff" opacity="0.8" transform="rotate(178 837.7 449.9)"/><rect x="711.4" y="440.4" width="7.7" height="2.7" fill="#1a2a3a" opacity="0.9" transform="rotate(80 715.3 441.8)"/><rect x="1211.5" y="594.1" width="6.3" height="2.8" fill="#f8e8c0" opacity="0.8" transform="rotate(135 1214.6 595.5)"/><rect x="1047.5" y="218.5" width="6.6" height="3.1" fill="#c8f0dc" opacity="0.7" transform="rotate(46 1050.9 220.1)"/><rect x="933.4" y="280.2" width="11.5" height="4.3" fill="#f8e8c0" opacity="0.9" transform="rotate(84 939.1 282.3)"/><rect x="857" y="464.2" width="10.7" height="4.4" fill="#f0c0d8" opacity="0.9" transform="rotate(166 862.4 466.4)"/><rect x="933.1" y="472.1" width="10.9" height="3.5" fill="#ffffff" opacity="0.7" transform="rotate(113 938.6 473.8)"/><rect x="1095.2" y="383.6" width="11.6" height="3.6" fill="#c8f0dc" opacity="0.7" transform="rotate(150 1101 385.4)"/><rect x="891.7" y="143.9" width="11.6" height="2.7" fill="#ffffff" opacity="0.6" transform="rotate(52 897.4 145.2)"/><rect x="765.3" y="547.3" width="6.1" height="4.1" fill="#ffffff" opacity="0.7" transform="rotate(61 768.3 549.4)"/><rect x="755.9" y="201.7" width="9.1" height="3" fill="#1a2a3a" opacity="0.6" transform="rotate(31 760.5 203.2)"/><rect x="1053.2" y="147.2" width="9.5" height="2.9" fill="#f0e0c8" opacity="0.8" transform="rotate(11 1057.9 148.6)"/><rect x="813.8" y="256.3" width="11.7" height="2.7" fill="#ffffff" opacity="0.7" transform="rotate(73 819.6 257.7)"/><rect x="933.4" y="388.3" width="6.7" height="3.9" fill="#ffffff" opacity="0.9" transform="rotate(146 936.7 390.3)"/><rect x="1022.4" y="228" width="6.1" height="4.4" fill="#e09090" opacity="0.6" transform="rotate(132 1025.4 230.2)"/><rect x="1052.7" y="450.2" width="10.2" height="2.7" fill="#f0e0c8" opacity="0.6" transform="rotate(156 1057.8 451.5)"/><rect x="955.1" y="198.9" width="10.6" height="2.7" fill="#ffffff" opacity="0.8" transform="rotate(21 960.4 200.2)"/><rect x="799.3" y="162.9" width="8.4" height="4.4" fill="#2a2a40" opacity="0.7" transform="rotate(3 803.4 165.1)"/><rect x="1331.7" y="293.1" width="8" height="3" fill="#f0c0d8" opacity="0.9" transform="rotate(60 1335.7 294.6)"/><rect x="1030.3" y="296.5" width="6.9" height="3.9" fill="#ffffff" opacity="0.7" transform="rotate(63 1033.8 298.5)"/><rect x="849.3" y="475.5" width="6.4" height="3.4" fill="#f0d0d8" opacity="0.6" transform="rotate(90 852.5 477.2)"/><rect x="896.8" y="312.7" width="8.7" height="2.6" fill="#f0d0d8" opacity="0.6" transform="rotate(176 901.2 314)"/><rect x="750.7" y="482.2" width="7.6" height="3.6" fill="#1a2a3a" opacity="0.6" transform="rotate(166 754.5 484)"/><rect x="707.3" y="117.2" width="11.4" height="2.7" fill="#ffffff" opacity="0.7" transform="rotate(106 713 118.6)"/><rect x="1320.8" y="382.4" width="9.5" height="3" fill="#f0e0c8" opacity="0.8" transform="rotate(132 1325.5 384)"/><rect x="1106.4" y="634.6" width="7.2" height="3.9" fill="#6a2a38" opacity="0.7" transform="rotate(82 1110 636.6)"/><rect x="746.7" y="245.3" width="11.8" height="3.3" fill="#ffffff" opacity="0.9" transform="rotate(166 752.6 246.9)"/><rect x="1017.2" y="172.1" width="11.9" height="3.1" fill="#ffffff" opacity="0.8" transform="rotate(138 1023.2 173.7)"/><rect x="835" y="454.5" width="9.1" height="4.2" fill="#ffffff" opacity="0.6" transform="rotate(63 839.6 456.6)"/><rect x="1285.7" y="161.8" width="8" height="3.2" fill="#1a2a3a" opacity="0.8" transform="rotate(121 1289.7 163.4)"/><rect x="1109.7" y="474.3" width="8.5" height="2.7" fill="#6a2a38" opacity="0.8" transform="rotate(73 1113.9 475.6)"/><rect x="1210.5" y="310.2" width="9.6" height="3.3" fill="#e0e0e8" opacity="0.7" transform="rotate(81 1215.3 311.8)"/><rect x="868.2" y="259.6" width="9.6" height="3.8" fill="#f0e0c8" opacity="0.9" transform="rotate(1 873 261.5)"/><rect x="932.1" y="373.3" width="7.8" height="2.8" fill="#1a2a3a" opacity="0.6" transform="rotate(103 936 374.7)"/><rect x="790.5" y="621.1" width="7.5" height="3.2" fill="#f0d0d8" opacity="0.6" transform="rotate(174 794.2 622.7)"/><rect x="811.3" y="401" width="8.6" height="4.2" fill="#f0c0d8" opacity="0.7" transform="rotate(130 815.6 403.1)"/><rect x="1051.7" y="263.5" width="11.7" height="3.9" fill="#c8f0dc" opacity="0.7" transform="rotate(94 1057.5 265.4)"/><rect x="1111.6" y="374.3" width="6.9" height="2.9" fill="#f0c0d8" opacity="0.7" transform="rotate(75 1115.1 375.7)"/><rect x="1332.1" y="233.6" width="9.1" height="2.7" fill="#f0e0c8" opacity="0.7" transform="rotate(161 1336.6 234.9)"/><rect x="991.2" y="708.2" width="9.1" height="4.1" fill="#f8e8c0" opacity="0.7" transform="rotate(37 995.7 710.3)"/><rect x="1199.5" y="474.9" width="6.1" height="2.5" fill="#6a2a38" opacity="0.6" transform="rotate(127 1202.5 476.1)"/><rect x="1227.9" y="223" width="10" height="2.9" fill="#6a2a38" opacity="0.8" transform="rotate(89 1232.9 224.4)"/><rect x="990.2" y="387" width="6.5" height="4.4" fill="#e0e0e8" opacity="0.8" transform="rotate(88 993.4 389.2)"/><rect x="789.5" y="581.8" width="7" height="3" fill="#1a2a3a" opacity="0.6" transform="rotate(17 793.1 583.3)"/><rect x="1157.7" y="509.9" width="8.5" height="3.3" fill="#f0d0d8" opacity="0.9" transform="rotate(128 1161.9 511.5)"/><rect x="722.6" y="251.4" width="6.6" height="3" fill="#ffffff" opacity="0.8" transform="rotate(150 725.9 252.9)"/><rect x="1059.3" y="473.1" width="8.9" height="2.9" fill="#2a2a40" opacity="0.6" transform="rotate(154 1063.7 474.6)"/><rect x="732.9" y="532.4" width="9.5" height="3.2" fill="#1a2a3a" opacity="0.8" transform="rotate(44 737.6 534)"/><rect x="1183.2" y="535.8" width="7.4" height="2.9" fill="#c8f0dc" opacity="0.8" transform="rotate(160 1186.9 537.2)"/><rect x="982.1" y="266.8" width="6.4" height="3.1" fill="#ffffff" opacity="0.9" transform="rotate(40 985.3 268.3)"/><rect x="865.7" y="295.3" width="8.8" height="3.8" fill="#ffffff" opacity="0.6" transform="rotate(113 870.1 297.2)"/><rect x="831.3" y="499" width="10" height="3.9" fill="#ffffff" opacity="0.7" transform="rotate(44 836.3 501)"/><rect x="1056.9" y="196.7" width="8.4" height="3.7" fill="#ffffff" opacity="0.7" transform="rotate(77 1061.1 198.6)"/><rect x="665.9" y="479.5" width="9.4" height="3.9" fill="#f0c0d8" opacity="0.8" transform="rotate(45 670.6 481.5)"/><rect x="1147.8" y="576.1" width="9.5" height="3.9" fill="#2a2a40" opacity="0.6" transform="rotate(175 1152.6 578.1)"/><rect x="663.1" y="597.5" width="6.5" height="3.9" fill="#f0e0c8" opacity="0.8" transform="rotate(70 666.3 599.4)"/><rect x="998.7" y="158.4" width="8.7" height="3.2" fill="#f0e0c8" opacity="0.9" transform="rotate(90 1003 160)"/><rect x="905.6" y="526.3" width="11.6" height="2.8" fill="#f0d0d8" opacity="0.9" transform="rotate(137 911.4 527.7)"/><rect x="966.1" y="517.1" width="10.2" height="2.5" fill="#ffffff" opacity="0.9" transform="rotate(124 971.2 518.4)"/><rect x="829" y="258.8" width="6.9" height="3.6" fill="#ffffff" opacity="0.6" transform="rotate(60 832.4 260.6)"/><rect x="1273.4" y="107.2" width="7.2" height="3.9" fill="#e0e0e8" opacity="0.6" transform="rotate(2 1277 109.2)"/><rect x="927.5" y="528.5" width="7.9" height="3.4" fill="#ffffff" opacity="0.8" transform="rotate(65 931.4 530.3)"/><rect x="800.8" y="563.2" width="9.9" height="4.4" fill="#ffffff" opacity="0.8" transform="rotate(87 805.7 565.4)"/><rect x="1068.9" y="131" width="7" height="4.1" fill="#f0e0c8" opacity="0.8" transform="rotate(149 1072.4 133)"/><rect x="1096.5" y="280.7" width="7.4" height="2.8" fill="#ffffff" opacity="0.9" transform="rotate(165 1100.2 282.1)"/><rect x="1290.6" y="471.5" width="11.4" height="4.4" fill="#e0e0e8" opacity="0.8" transform="rotate(88 1296.3 473.7)"/><rect x="738.5" y="163.1" width="11.9" height="4.2" fill="#f8e8c0" opacity="0.8" transform="rotate(86 744.4 165.2)"/><rect x="1148.5" y="-9.4" width="8.6" height="3.1" fill="#6a2a38" opacity="0.8" transform="rotate(119 1152.7 -7.8)"/><rect x="1017.1" y="349.2" width="8.6" height="3.6" fill="#ffffff" opacity="0.9" transform="rotate(112 1021.4 351)"/><rect x="1090.6" y="508.7" width="9.4" height="4.4" fill="#2a2a40" opacity="0.6" transform="rotate(86 1095.3 510.9)"/><rect x="1016.5" y="654.3" width="7.3" height="4" fill="#ffffff" opacity="0.8" transform="rotate(124 1020.2 656.3)"/><rect x="1043.1" y="274.6" width="9.2" height="3.6" fill="#c8f0dc" opacity="0.6" transform="rotate(71 1047.7 276.4)"/><rect x="1014.5" y="340.6" width="10.4" height="4.3" fill="#ffffff" opacity="0.7" transform="rotate(102 1019.7 342.8)"/><rect x="848.5" y="152.2" width="11.3" height="3.7" fill="#1a2a3a" opacity="0.6" transform="rotate(156 854.1 154.1)"/><rect x="826.8" y="548.7" width="11" height="4.1" fill="#f0d0d8" opacity="0.9" transform="rotate(132 832.3 550.7)"/><rect x="905.6" y="83.2" width="10.3" height="2.6" fill="#c8f0dc" opacity="0.7" transform="rotate(108 910.8 84.5)"/><rect x="490.3" y="522.3" width="8.6" height="4.1" fill="#c8f0dc" opacity="0.9" transform="rotate(87 494.6 524.3)"/><rect x="1015.2" y="131.3" width="8.3" height="2.8" fill="#6a2a38" opacity="0.9" transform="rotate(157 1019.3 132.7)"/><rect x="1077.7" y="484.5" width="11.8" height="3.9" fill="#f8e8c0" opacity="0.9" transform="rotate(80 1083.6 486.4)"/><rect x="1046.4" y="348.9" width="8.1" height="2.5" fill="#b8dcf8" opacity="0.6" transform="rotate(104 1050.5 350.2)"/><rect x="1236.3" y="180.1" width="10.4" height="2.8" fill="#c8f0dc" opacity="0.8" transform="rotate(69 1241.4 181.5)"/><rect x="1026.7" y="190.5" width="12" height="2.6" fill="#ffffff" opacity="0.6" transform="rotate(100 1032.7 191.8)"/><rect x="786.1" y="729.4" width="7.5" height="4.2" fill="#b8dcf8" opacity="0.6" transform="rotate(128 789.8 731.5)"/><rect x="848" y="248" width="8.9" height="3.2" fill="#f8e8c0" opacity="0.9" transform="rotate(43 852.5 249.7)"/><rect x="802.2" y="104.5" width="8.4" height="3.3" fill="#ffffff" opacity="0.8" transform="rotate(139 806.4 106.1)"/><rect x="1129.6" y="428.9" width="6.4" height="2.9" fill="#1a2a3a" opacity="0.6" transform="rotate(166 1132.8 430.4)"/><rect x="740.4" y="295.8" width="11.2" height="3.8" fill="#f0e0c8" opacity="0.6" transform="rotate(35 746 297.7)"/><rect x="1246.2" y="459.7" width="8.4" height="4.4" fill="#f0d0d8" opacity="0.9" transform="rotate(157 1250.4 461.8)"/><rect x="537.1" y="578.9" width="9.2" height="3.7" fill="#2a2a40" opacity="0.9" transform="rotate(99 541.8 580.7)"/><rect x="727.7" y="431" width="10.9" height="3.5" fill="#2a2a40" opacity="0.7" transform="rotate(5 733.2 432.7)"/><rect x="998" y="203" width="6.8" height="2.5" fill="#2a2a40" opacity="0.9" transform="rotate(85 1001.4 204.3)"/><rect x="1006.5" y="82.3" width="7.6" height="3.7" fill="#ffffff" opacity="0.9" transform="rotate(132 1010.3 84.1)"/><rect x="920.8" y="534.3" width="7.3" height="4.3" fill="#f0c0d8" opacity="0.7" transform="rotate(162 924.4 536.4)"/><rect x="895.9" y="422.6" width="11.7" height="3.8" fill="#e09090" opacity="0.6" transform="rotate(40 901.7 424.4)"/><rect x="924.2" y="239.3" width="11.3" height="3.5" fill="#ffffff" opacity="0.6" transform="rotate(176 929.9 241.1)"/><rect x="970.7" y="243.3" width="7" height="3.9" fill="#e0e0e8" opacity="0.6" transform="rotate(107 974.2 245.3)"/><rect x="1131.5" y="28.1" width="6.3" height="4" fill="#f0c0d8" opacity="0.9" transform="rotate(79 1134.6 30.1)"/><rect x="1293.8" y="249.2" width="11.3" height="4.5" fill="#f8e8c0" opacity="0.6" transform="rotate(5 1299.5 251.4)"/><rect x="1050.8" y="447" width="10.4" height="2.6" fill="#c8f0dc" opacity="0.9" transform="rotate(160 1056 448.3)"/><rect x="981.7" y="556.7" width="8.1" height="3.5" fill="#b8dcf8" opacity="0.9" transform="rotate(165 985.8 558.4)"/><rect x="859.3" y="205.2" width="12" height="4" fill="#f0c0d8" opacity="0.7" transform="rotate(48 865.3 207.2)"/><rect x="800.4" y="523" width="9.3" height="3.1" fill="#f0d0d8" opacity="0.7" transform="rotate(174 805.1 524.5)"/><rect x="951.3" y="486.8" width="9.3" height="3.3" fill="#ffffff" opacity="0.8" transform="rotate(148 955.9 488.4)"/><rect x="1146.3" y="279.8" width="9.2" height="3.7" fill="#b8dcf8" opacity="0.6" transform="rotate(121 1150.9 281.7)"/><rect x="1162.5" y="601.8" width="7.6" height="4.2" fill="#b8dcf8" opacity="0.8" transform="rotate(154 1166.3 603.9)"/><rect x="934.7" y="620.7" width="11.4" height="4.2" fill="#f0c0d8" opacity="0.7" transform="rotate(7 940.4 622.9)"/><rect x="897.8" y="653.4" width="8.3" height="3.2" fill="#6a2a38" opacity="0.8" transform="rotate(119 901.9 655)"/><rect x="846.4" y="512.1" width="7.4" height="3.2" fill="#f0c0d8" opacity="0.7" transform="rotate(61 850.1 513.7)"/><rect x="796.5" y="443.2" width="11.5" height="3" fill="#e0e0e8" opacity="0.6" transform="rotate(47 802.2 444.8)"/><rect x="1219.4" y="314.5" width="8.2" height="2.6" fill="#b8dcf8" opacity="0.6" transform="rotate(79 1223.5 315.8)"/><rect x="555.5" y="642.4" width="11.1" height="3.7" fill="#f8e8c0" opacity="0.7" transform="rotate(11 561 644.3)"/><rect x="976.7" y="393.6" width="10.5" height="2.6" fill="#e0e0e8" opacity="0.9" transform="rotate(106 982 394.9)"/><rect x="915.7" y="528.4" width="7.1" height="2.6" fill="#ffffff" opacity="0.8" transform="rotate(71 919.2 529.7)"/><rect x="1173.6" y="623.1" width="6.2" height="3.9" fill="#ffffff" opacity="0.7" transform="rotate(99 1176.7 625)"/><rect x="634.2" y="342.9" width="9.4" height="2.5" fill="#ffffff" opacity="0.9" transform="rotate(89 639 344.1)"/><rect x="962.1" y="535.8" width="10.1" height="3.3" fill="#f0c0d8" opacity="0.9" transform="rotate(105 967.1 537.5)"/><rect x="542" y="387.5" width="7.6" height="3" fill="#e09090" opacity="0.8" transform="rotate(56 545.8 389)"/><rect x="904.2" y="218.5" width="10.1" height="3.1" fill="#f0c0d8" opacity="0.9" transform="rotate(44 909.2 220.1)"/><rect x="1052.2" y="365.1" width="10.8" height="2.9" fill="#6a2a38" opacity="0.8" transform="rotate(165 1057.6 366.5)"/><rect x="938.9" y="157.3" width="11.8" height="3.7" fill="#f0e0c8" opacity="0.7" transform="rotate(73 944.9 159.2)"/><rect x="538.8" y="480.4" width="6.4" height="3.7" fill="#f0e0c8" opacity="0.8" transform="rotate(32 542 482.2)"/><rect x="979.1" y="605.1" width="7.8" height="2.9" fill="#ffffff" opacity="0.9" transform="rotate(150 983 606.5)"/><rect x="998.3" y="539.5" width="7.2" height="2.7" fill="#f8e8c0" opacity="0.8" transform="rotate(9 1001.9 540.8)"/><rect x="1261.2" y="186.4" width="6.3" height="3.9" fill="#ffffff" opacity="0.7" transform="rotate(7 1264.4 188.3)"/><rect x="1382.2" y="572.2" width="10.3" height="3.1" fill="#6a2a38" opacity="0.9" transform="rotate(46 1387.4 573.8)"/><rect x="1163.6" y="105.3" width="6.2" height="3.3" fill="#f8e8c0" opacity="0.8" transform="rotate(115 1166.7 107)"/><rect x="1004.7" y="493.9" width="8.9" height="2.5" fill="#c8f0dc" opacity="0.6" transform="rotate(140 1009.2 495.2)"/><rect x="840.7" y="204.1" width="10.5" height="2.9" fill="#ffffff" opacity="0.9" transform="rotate(84 846 205.6)"/><rect x="942.2" y="245.1" width="10.5" height="2.9" fill="#e09090" opacity="0.9" transform="rotate(141 947.4 246.5)"/><rect x="934.5" y="545.8" width="6.7" height="2.8" fill="#f0d0d8" opacity="0.6" transform="rotate(70 937.9 547.2)"/><rect x="625" y="383.5" width="6.8" height="3.7" fill="#b8dcf8" opacity="0.8" transform="rotate(63 628.4 385.3)"/><rect x="833.4" y="554.1" width="6.5" height="2.5" fill="#ffffff" opacity="0.7" transform="rotate(116 836.7 555.4)"/><rect x="1012" y="370.6" width="8.8" height="2.8" fill="#6a2a38" opacity="0.7" transform="rotate(96 1016.4 372)"/><rect x="714.9" y="719.1" width="11.5" height="4" fill="#f8e8c0" opacity="0.9" transform="rotate(96 720.6 721)"/><rect x="1057.1" y="597.7" width="10.5" height="2.8" fill="#f0d0d8" opacity="0.7" transform="rotate(47 1062.4 599.1)"/><rect x="1165.8" y="176.2" width="10.9" height="2.6" fill="#c8f0dc" opacity="0.6" transform="rotate(60 1171.3 177.5)"/><rect x="1166.3" y="464" width="8.1" height="4.1" fill="#ffffff" opacity="0.6" transform="rotate(83 1170.3 466.1)"/><rect x="1139.6" y="177.1" width="8.1" height="2.8" fill="#f8e8c0" opacity="0.8" transform="rotate(35 1143.6 178.5)"/><rect x="910.7" y="269.7" width="11.8" height="3.7" fill="#e0e0e8" opacity="0.8" transform="rotate(144 916.6 271.5)"/><rect x="590.8" y="562.1" width="11.4" height="4" fill="#ffffff" opacity="0.8" transform="rotate(149 596.5 564.1)"/><rect x="910" y="114.8" width="9.1" height="4" fill="#2a2a40" opacity="0.9" transform="rotate(106 914.6 116.8)"/><rect x="757.4" y="340.7" width="11.4" height="3.9" fill="#f0c0d8" opacity="0.8" transform="rotate(127 763.1 342.6)"/><rect x="1081.6" y="292.4" width="8.1" height="3.3" fill="#f8e8c0" opacity="0.8" transform="rotate(170 1085.6 294)"/><rect x="797.7" y="632.7" width="10.8" height="2.5" fill="#f0d0d8" opacity="0.9" transform="rotate(88 803.1 633.9)"/><rect x="1007.9" y="101" width="8.8" height="2.6" fill="#e09090" opacity="0.6" transform="rotate(60 1012.3 102.3)"/><rect x="1064.3" y="155" width="8.3" height="3.2" fill="#ffffff" opacity="0.6" transform="rotate(27 1068.5 156.6)"/><rect x="995.3" y="652" width="11.4" height="3.8" fill="#1a2a3a" opacity="0.7" transform="rotate(13 1001 653.9)"/><rect x="1172.6" y="534.8" width="10.9" height="2.6" fill="#e0e0e8" opacity="0.7" transform="rotate(117 1178 536.1)"/><rect x="931.3" y="417.2" width="11.3" height="4" fill="#f0d0d8" opacity="0.9" transform="rotate(134 937 419.2)"/><rect x="556.5" y="360.1" width="7.6" height="2.9" fill="#6a2a38" opacity="0.6" transform="rotate(165 560.3 361.5)"/><rect x="1177.1" y="290" width="7.7" height="4" fill="#6a2a38" opacity="0.6" transform="rotate(52 1180.9 292)"/><rect x="1151.2" y="719.4" width="8.2" height="4.3" fill="#ffffff" opacity="0.8" transform="rotate(58 1155.3 721.5)"/><rect x="871.6" y="29.8" width="11.8" height="2.9" fill="#e0e0e8" opacity="0.6" transform="rotate(55 877.5 31.2)"/><rect x="935.7" y="235.4" width="7.6" height="3.3" fill="#e0e0e8" opacity="0.7" transform="rotate(69 939.5 237.1)"/><rect x="1137.1" y="632.6" width="6.9" height="4" fill="#6a2a38" opacity="0.9" transform="rotate(84 1140.6 634.6)"/><rect x="870.6" y="541" width="11.1" height="2.7" fill="#f0d0d8" opacity="0.6" transform="rotate(80 876.1 542.3)"/><rect x="1056.1" y="625" width="7.6" height="3" fill="#6a2a38" opacity="0.6" transform="rotate(12 1059.9 626.5)"/><rect x="1293.1" y="451.9" width="10.3" height="4.4" fill="#ffffff" opacity="0.9" transform="rotate(29 1298.3 454.1)"/><rect x="1168.6" y="475.9" width="8.4" height="4.4" fill="#b8dcf8" opacity="0.7" transform="rotate(133 1172.8 478.1)"/><rect x="837.1" y="373.5" width="10.3" height="2.8" fill="#f0c0d8" opacity="0.8" transform="rotate(132 842.3 374.9)"/><rect x="933.1" y="39" width="10" height="3.7" fill="#1a2a3a" opacity="0.8" transform="rotate(72 938.1 40.8)"/><rect x="1085.7" y="209.2" width="8.3" height="4.3" fill="#ffffff" opacity="0.8" transform="rotate(128 1089.9 211.4)"/><rect x="710.6" y="160.8" width="10.8" height="3.2" fill="#c8f0dc" opacity="0.6" transform="rotate(125 716 162.4)"/><rect x="635.8" y="722.8" width="8.7" height="3.5" fill="#1a2a3a" opacity="0.8" transform="rotate(175 640.2 724.5)"/><rect x="1066.1" y="161.4" width="9.4" height="2.9" fill="#f8e8c0" opacity="0.7" transform="rotate(142 1070.8 162.8)"/><rect x="870.4" y="723.4" width="6.3" height="3.2" fill="#2a2a40" opacity="0.9" transform="rotate(95 873.6 725)"/><rect x="1192.6" y="514.2" width="8.1" height="2.9" fill="#e09090" opacity="0.9" transform="rotate(72 1196.7 515.7)"/><rect x="1297.4" y="586.6" width="7.2" height="4" fill="#e09090" opacity="0.8" transform="rotate(150 1301 588.6)"/><rect x="1494.2" y="718.7" width="6.4" height="2.9" fill="#ffffff" opacity="0.8" transform="rotate(2 1497.4 720.2)"/><rect x="1020.5" y="563.9" width="9.4" height="3.1" fill="#c8f0dc" opacity="0.6" transform="rotate(63 1025.2 565.5)"/><rect x="890.2" y="123.5" width="8.7" height="2.7" fill="#ffffff" opacity="0.7" transform="rotate(19 894.6 124.9)"/><rect x="1271.6" y="233.5" width="11.1" height="3.6" fill="#f0c0d8" opacity="0.6" transform="rotate(45 1277.1 235.3)"/><rect x="651.7" y="181.8" width="11.7" height="4.5" fill="#f0e0c8" opacity="0.8" transform="rotate(78 657.5 184)"/><rect x="750" y="94.4" width="6.2" height="4.1" fill="#c8f0dc" opacity="0.7" transform="rotate(175 753 96.5)"/><rect x="884.3" y="42.8" width="8.9" height="3.8" fill="#f8e8c0" opacity="0.6" transform="rotate(37 888.8 44.7)"/><rect x="1370.5" y="428.5" width="11.5" height="4" fill="#f0e0c8" opacity="0.6" transform="rotate(102 1376.2 430.5)"/><rect x="894.8" y="350.9" width="10.3" height="3" fill="#f0e0c8" opacity="0.9" transform="rotate(116 899.9 352.4)"/><rect x="1135.9" y="282.6" width="11.3" height="2.5" fill="#f0e0c8" opacity="0.9" transform="rotate(101 1141.6 283.9)"/><rect x="1146" y="69.4" width="6" height="4.2" fill="#ffffff" opacity="0.6" transform="rotate(100 1149 71.5)"/><rect x="1084.4" y="420.5" width="9.2" height="3.9" fill="#1a2a3a" opacity="0.7" transform="rotate(119 1089.1 422.5)"/><rect x="660.7" y="318.8" width="9.3" height="3.2" fill="#f0e0c8" opacity="0.6" transform="rotate(16 665.4 320.4)"/><rect x="1047.8" y="369.2" width="7.2" height="2.7" fill="#2a2a40" opacity="0.8" transform="rotate(7 1051.4 370.5)"/><rect x="999.9" y="449.2" width="8.4" height="3.7" fill="#ffffff" opacity="0.8" transform="rotate(116 1004.1 451)"/><rect x="1437.4" y="601.4" width="6.2" height="3.9" fill="#f0c0d8" opacity="0.9" transform="rotate(152 1440.5 603.3)"/><rect x="1012.6" y="251.1" width="10.9" height="2.5" fill="#f8e8c0" opacity="0.9" transform="rotate(138 1018.1 252.3)"/><rect x="1016.3" y="600" width="7.9" height="3.8" fill="#6a2a38" opacity="0.6" transform="rotate(66 1020.3 601.8)"/><rect x="723.9" y="499.1" width="11.6" height="3.5" fill="#2a2a40" opacity="0.6" transform="rotate(139 729.7 500.9)"/><rect x="1129.7" y="188.4" width="8.6" height="3.9" fill="#f0e0c8" opacity="0.7" transform="rotate(124 1134 190.3)"/><rect x="856.5" y="288.9" width="6.6" height="4.2" fill="#1a2a3a" opacity="0.9" transform="rotate(115 859.8 291)"/><rect x="1070" y="483.4" width="9.6" height="3.9" fill="#c8f0dc" opacity="0.8" transform="rotate(54 1074.8 485.3)"/><rect x="1184.9" y="417" width="9.1" height="4.3" fill="#e0e0e8" opacity="0.6" transform="rotate(165 1189.5 419.1)"/><rect x="869" y="65.1" width="8.7" height="4" fill="#e0e0e8" opacity="0.7" transform="rotate(17 873.4 67.1)"/><rect x="1068.2" y="496.2" width="7.1" height="2.8" fill="#f0d0d8" opacity="0.7" transform="rotate(17 1071.8 497.6)"/><rect x="1050.9" y="491" width="6.4" height="2.5" fill="#ffffff" opacity="0.9" transform="rotate(153 1054.1 492.2)"/><rect x="1013.1" y="261.6" width="8.2" height="4" fill="#ffffff" opacity="0.8" transform="rotate(66 1017.2 263.6)"/><rect x="1088.5" y="270" width="11.2" height="2.6" fill="#ffffff" opacity="0.7" transform="rotate(119 1094.1 271.3)"/><rect x="962.3" y="205.2" width="6.7" height="3.6" fill="#f0c0d8" opacity="0.6" transform="rotate(88 965.6 207)"/><rect x="956.7" y="266.8" width="9.3" height="2.6" fill="#f0e0c8" opacity="0.6" transform="rotate(40 961.3 268.1)"/><rect x="1461.1" y="459.3" width="8.3" height="2.6" fill="#f0d0d8" opacity="0.6" transform="rotate(77 1465.2 460.6)"/><rect x="764.4" y="233.4" width="8.2" height="2.7" fill="#e0e0e8" opacity="0.7" transform="rotate(177 768.5 234.7)"/><rect x="1091.8" y="380.4" width="11.4" height="3.8" fill="#f0d0d8" opacity="0.8" transform="rotate(123 1097.5 382.3)"/><rect x="980.9" y="168.2" width="6.9" height="4.1" fill="#f0e0c8" opacity="0.6" transform="rotate(170 984.3 170.2)"/><rect x="1161.9" y="648.6" width="6.1" height="3.4" fill="#e0e0e8" opacity="0.6" transform="rotate(130 1165 650.3)"/><rect x="1068.8" y="565.4" width="10.1" height="2.5" fill="#f8e8c0" opacity="0.6" transform="rotate(170 1073.9 566.7)"/><rect x="1254.7" y="276.3" width="10" height="2.9" fill="#f8e8c0" opacity="0.9" transform="rotate(163 1259.8 277.8)"/><rect x="855.9" y="301.8" width="6.1" height="3.2" fill="#ffffff" opacity="0.9" transform="rotate(29 859 303.4)"/><rect x="1170.3" y="107.6" width="9.3" height="3.3" fill="#6a2a38" opacity="0.6" transform="rotate(46 1174.9 109.2)"/><rect x="1054.5" y="390.6" width="6.3" height="3" fill="#1a2a3a" opacity="0.9" transform="rotate(30 1057.6 392.1)"/><rect x="710.5" y="596.3" width="6.9" height="4" fill="#f0e0c8" opacity="0.7" transform="rotate(174 713.9 598.3)"/><rect x="1293.1" y="395.9" width="9.9" height="3.5" fill="#f8e8c0" opacity="0.7" transform="rotate(20 1298.1 397.6)"/><rect x="1142" y="396.6" width="9.1" height="3.6" fill="#1a2a3a" opacity="0.9" transform="rotate(78 1146.6 398.4)"/><rect x="685.3" y="427.7" width="7.5" height="3" fill="#6a2a38" opacity="0.7" transform="rotate(65 689.1 429.1)"/><rect x="913.1" y="696.4" width="11.7" height="4.3" fill="#b8dcf8" opacity="0.9" transform="rotate(83 919 698.5)"/><rect x="934.3" y="167.1" width="8.5" height="4.4" fill="#f8e8c0" opacity="0.7" transform="rotate(162 938.6 169.3)"/><rect x="856.8" y="533.1" width="8.2" height="4.5" fill="#e09090" opacity="0.6" transform="rotate(115 860.9 535.3)"/><rect x="1319.5" y="380.9" width="9.9" height="3.4" fill="#b8dcf8" opacity="0.8" transform="rotate(81 1324.4 382.6)"/><rect x="1137.6" y="262.1" width="7.1" height="3.5" fill="#2a2a40" opacity="0.9" transform="rotate(3 1141.2 263.9)"/><rect x="677.4" y="291.6" width="7.8" height="3.6" fill="#f8e8c0" opacity="0.8" transform="rotate(36 681.2 293.4)"/><rect x="1200.3" y="185.1" width="11.3" height="3.7" fill="#f0d0d8" opacity="0.8" transform="rotate(35 1205.9 186.9)"/><rect x="961.8" y="140.7" width="7.8" height="4" fill="#b8dcf8" opacity="0.6" transform="rotate(157 965.6 142.7)"/><rect x="709.6" y="367.4" width="9.4" height="2.6" fill="#f0e0c8" opacity="0.7" transform="rotate(27 714.3 368.7)"/><rect x="927.4" y="599.2" width="9.7" height="4.1" fill="#f0c0d8" opacity="0.6" transform="rotate(84 932.3 601.3)"/><rect x="1009" y="314.1" width="6.2" height="3.9" fill="#e09090" opacity="0.6" transform="rotate(39 1012.1 316.1)"/><rect x="933.7" y="540.5" width="7.1" height="4.5" fill="#e09090" opacity="0.6" transform="rotate(179 937.3 542.8)"/><rect x="960" y="35.8" width="10.1" height="3.9" fill="#f0c0d8" opacity="0.7" transform="rotate(144 965.1 37.8)"/><rect x="1243.2" y="105.1" width="7.2" height="2.7" fill="#6a2a38" opacity="0.9" transform="rotate(91 1246.8 106.5)"/><rect x="957.8" y="516.1" width="6.4" height="3.8" fill="#f0c0d8" opacity="0.7" transform="rotate(112 961 518)"/><rect x="962.7" y="233.4" width="10.6" height="3.2" fill="#f0e0c8" opacity="0.9" transform="rotate(80 968 235)"/><rect x="1083.1" y="346.7" width="6.4" height="4" fill="#f0c0d8" opacity="0.8" transform="rotate(138 1086.3 348.7)"/><rect x="1100.7" y="99.4" width="6.2" height="4.3" fill="#6a2a38" opacity="0.6" transform="rotate(120 1103.8 101.5)"/><rect x="901.2" y="576.8" width="7.5" height="4.4" fill="#e09090" opacity="0.9" transform="rotate(21 904.9 579)"/><rect x="1178" y="130.4" width="7.2" height="4.1" fill="#e0e0e8" opacity="0.6" transform="rotate(134 1181.6 132.4)"/><rect x="958.3" y="184.9" width="11.1" height="3.1" fill="#f0e0c8" opacity="0.9" transform="rotate(31 963.9 186.5)"/><rect x="1261.1" y="232.8" width="7.8" height="3.7" fill="#e09090" opacity="0.6" transform="rotate(70 1265 234.7)"/><rect x="1360.6" y="477.4" width="7.5" height="4.3" fill="#f0e0c8" opacity="0.6" transform="rotate(144 1364.4 479.6)"/><rect x="1368.4" y="584.1" width="9.3" height="4.3" fill="#ffffff" opacity="0.8" transform="rotate(142 1373 586.3)"/><rect x="844.5" y="338.8" width="10.7" height="4.2" fill="#b8dcf8" opacity="0.7" transform="rotate(38 849.9 340.9)"/><rect x="776.1" y="37.7" width="6.2" height="3.2" fill="#e0e0e8" opacity="0.8" transform="rotate(110 779.2 39.3)"/><rect x="954.8" y="141.2" width="11.7" height="3.1" fill="#1a2a3a" opacity="0.7" transform="rotate(113 960.6 142.8)"/><rect x="907.9" y="361.2" width="10" height="2.9" fill="#b8dcf8" opacity="0.9" transform="rotate(65 912.9 362.7)"/><rect x="1342.5" y="495.6" width="9.4" height="3.4" fill="#f0d0d8" opacity="0.8" transform="rotate(102 1347.2 497.3)"/><rect x="1141.2" y="159" width="11.3" height="4.5" fill="#f0c0d8" opacity="0.8" transform="rotate(78 1146.9 161.2)"/><rect x="934.8" y="47.1" width="9.1" height="4.4" fill="#ffffff" opacity="0.8" transform="rotate(88 939.3 49.3)"/><rect x="620.6" y="502.9" width="12" height="3.6" fill="#ffffff" opacity="0.6" transform="rotate(143 626.6 504.7)"/><rect x="1332.6" y="376.8" width="10.3" height="3.9" fill="#e0e0e8" opacity="0.9" transform="rotate(38 1337.7 378.8)"/><rect x="651.4" y="419.5" width="10.8" height="3.3" fill="#e09090" opacity="0.8" transform="rotate(108 656.8 421.2)"/><rect x="1308.3" y="584" width="10.7" height="3.6" fill="#ffffff" opacity="0.6" transform="rotate(41 1313.7 585.8)"/><rect x="1187.6" y="438.9" width="10.3" height="3.9" fill="#ffffff" opacity="0.7" transform="rotate(49 1192.7 440.8)"/><rect x="1408" y="657.8" width="8.5" height="3.1" fill="#f8e8c0" opacity="0.9" transform="rotate(30 1412.3 659.3)"/><rect x="983.9" y="231.5" width="8.9" height="3.4" fill="#e0e0e8" opacity="0.7" transform="rotate(175 988.3 233.2)"/><rect x="993.5" y="201.6" width="9.1" height="3.5" fill="#b8dcf8" opacity="0.8" transform="rotate(41 998 203.4)"/><rect x="1126.7" y="258.9" width="6.9" height="4.2" fill="#f0d0d8" opacity="0.6" transform="rotate(103 1130.1 261)"/><rect x="954.6" y="591.8" width="10.1" height="4.4" fill="#ffffff" opacity="0.8" transform="rotate(111 959.6 594)"/><rect x="1216.7" y="498.7" width="6.9" height="3.2" fill="#ffffff" opacity="0.7" transform="rotate(153 1220.1 500.3)"/><rect x="720.8" y="428.2" width="6.9" height="3.6" fill="#e09090" opacity="0.6" transform="rotate(117 724.3 430)"/><rect x="965.9" y="236.7" width="8.2" height="4.3" fill="#6a2a38" opacity="0.9" transform="rotate(62 969.9 238.9)"/><rect x="1057.2" y="184" width="6.1" height="4.1" fill="#ffffff" opacity="0.9" transform="rotate(12 1060.3 186)"/><rect x="1211.3" y="552.9" width="11.7" height="3.6" fill="#c8f0dc" opacity="0.9" transform="rotate(165 1217.2 554.7)"/><rect x="1181.1" y="370.6" width="9.8" height="3.9" fill="#ffffff" opacity="0.9" transform="rotate(32 1186 372.6)"/><rect x="782.9" y="113.2" width="11.8" height="3.2" fill="#f0c0d8" opacity="0.7" transform="rotate(176 788.8 114.8)"/><rect x="938.6" y="303" width="6.1" height="3.8" fill="#ffffff" opacity="0.6" transform="rotate(162 941.7 304.9)"/><rect x="1221.7" y="326.3" width="8.7" height="4.3" fill="#b8dcf8" opacity="0.8" transform="rotate(108 1226 328.5)"/><rect x="999.7" y="593.7" width="6.9" height="3.8" fill="#ffffff" opacity="0.8" transform="rotate(90 1003.1 595.6)"/><rect x="814" y="498" width="9.5" height="4.5" fill="#f0c0d8" opacity="0.6" transform="rotate(29 818.7 500.3)"/><rect x="1022.3" y="429.4" width="11.2" height="4.5" fill="#ffffff" opacity="0.9" transform="rotate(88 1027.9 431.7)"/><rect x="1138.1" y="103.1" width="9.5" height="3.4" fill="#c8f0dc" opacity="0.8" transform="rotate(168 1142.9 104.8)"/><rect x="907.4" y="90.7" width="8.6" height="4.3" fill="#c8f0dc" opacity="0.8" transform="rotate(145 911.7 92.9)"/><rect x="682.6" y="544.2" width="7.7" height="3.2" fill="#6a2a38" opacity="0.9" transform="rotate(165 686.4 545.8)"/><rect x="1038.5" y="316.9" width="10.6" height="3.4" fill="#f0c0d8" opacity="0.8" transform="rotate(155 1043.7 318.6)"/><rect x="1327.2" y="451.9" width="11.6" height="3.2" fill="#ffffff" opacity="0.6" transform="rotate(153 1333 453.5)"/><rect x="953.6" y="346.1" width="10.4" height="3.2" fill="#ffffff" opacity="0.9" transform="rotate(167 958.7 347.7)"/><rect x="1233.9" y="485.3" width="11" height="3" fill="#f8e8c0" opacity="0.7" transform="rotate(29 1239.4 486.8)"/><rect x="705.7" y="593.2" width="11.4" height="3.7" fill="#ffffff" opacity="0.6" transform="rotate(174 711.4 595.1)"/><rect x="1079.2" y="283.3" width="7.3" height="3.3" fill="#b8dcf8" opacity="0.8" transform="rotate(84 1082.8 285)"/><rect x="694.1" y="561.3" width="11.8" height="4.3" fill="#2a2a40" opacity="0.6" transform="rotate(28 700 563.4)"/><rect x="1265.6" y="233.3" width="11.4" height="3.4" fill="#1a2a3a" opacity="0.7" transform="rotate(167 1271.3 235.1)"/><rect x="1221.6" y="414.5" width="7" height="4.3" fill="#c8f0dc" opacity="0.9" transform="rotate(66 1225 416.6)"/><rect x="1029.6" y="96.5" width="9.3" height="3.1" fill="#f8e8c0" opacity="0.7" transform="rotate(5 1034.2 98.1)"/><rect x="924.3" y="724.8" width="11.6" height="3.9" fill="#2a2a40" opacity="0.6" transform="rotate(86 930.1 726.7)"/><rect x="1197.7" y="535.1" width="8.5" height="2.9" fill="#6a2a38" opacity="0.8" transform="rotate(12 1201.9 536.5)"/><rect x="1174.9" y="78.7" width="11.6" height="4.5" fill="#f0e0c8" opacity="0.8" transform="rotate(122 1180.7 81)"/><rect x="1259.5" y="204.4" width="9.1" height="3.2" fill="#6a2a38" opacity="0.9" transform="rotate(127 1264 206)"/><rect x="999" y="666" width="8.4" height="3.9" fill="#ffffff" opacity="0.8" transform="rotate(12 1003.2 668)"/><rect x="1249.7" y="315.2" width="9.1" height="3.4" fill="#f0d0d8" opacity="0.9" transform="rotate(156 1254.2 316.8)"/><rect x="643.8" y="491.5" width="9.3" height="3.2" fill="#e09090" opacity="0.8" transform="rotate(162 648.4 493.1)"/><rect x="1193" y="345.4" width="7.4" height="2.8" fill="#f0d0d8" opacity="0.6" transform="rotate(166 1196.7 346.8)"/><rect x="883.2" y="356.2" width="10.6" height="2.9" fill="#ffffff" opacity="0.6" transform="rotate(120 888.5 357.6)"/><rect x="922.8" y="587.6" width="8.6" height="4.4" fill="#6a2a38" opacity="0.7" transform="rotate(19 927.1 589.8)"/><rect x="682.4" y="246.5" width="10.3" height="3.5" fill="#2a2a40" opacity="0.6" transform="rotate(30 687.6 248.2)"/><rect x="948.1" y="187.5" width="10.2" height="3.8" fill="#f0c0d8" opacity="0.6" transform="rotate(18 953.2 189.4)"/><rect x="1132" y="297.3" width="6.9" height="2.6" fill="#e09090" opacity="0.9" transform="rotate(97 1135.5 298.6)"/><rect x="976.7" y="503.6" width="7.8" height="4.4" fill="#e0e0e8" opacity="0.6" transform="rotate(146 980.6 505.8)"/><rect x="916.3" y="406.9" width="11.4" height="3.8" fill="#c8f0dc" opacity="0.6" transform="rotate(46 922 408.8)"/><rect x="904.6" y="20.4" width="7.9" height="4.3" fill="#ffffff" opacity="0.9" transform="rotate(141 908.5 22.6)"/><rect x="1356.5" y="328.6" width="11" height="3.6" fill="#f8e8c0" opacity="0.7" transform="rotate(56 1362 330.3)"/><rect x="885.5" y="248.3" width="9.5" height="2.9" fill="#6a2a38" opacity="0.6" transform="rotate(49 890.3 249.8)"/><rect x="707.9" y="214.1" width="8.7" height="3.2" fill="#f0e0c8" opacity="0.9" transform="rotate(85 712.2 215.7)"/><rect x="870.5" y="381.4" width="8.4" height="3.9" fill="#e0e0e8" opacity="0.7" transform="rotate(147 874.7 383.3)"/><rect x="1212.6" y="513.2" width="10.3" height="3.4" fill="#b8dcf8" opacity="0.8" transform="rotate(15 1217.7 514.9)"/><rect x="807" y="147.8" width="10.1" height="3.8" fill="#e09090" opacity="0.8" transform="rotate(124 812.1 149.7)"/><rect x="912.1" y="251" width="9.7" height="4.3" fill="#e09090" opacity="0.9" transform="rotate(156 916.9 253.2)"/><rect x="1242.6" y="600.9" width="7.6" height="3.5" fill="#b8dcf8" opacity="0.9" transform="rotate(128 1246.4 602.7)"/><rect x="1279.1" y="204.2" width="8" height="4.2" fill="#f0c0d8" opacity="0.7" transform="rotate(160 1283.1 206.3)"/><rect x="986.4" y="197.5" width="11.9" height="3.3" fill="#ffffff" opacity="0.6" transform="rotate(33 992.3 199.1)"/><rect x="1209.1" y="142.3" width="9.5" height="3.6" fill="#f0d0d8" opacity="0.8" transform="rotate(57 1213.9 144.1)"/><rect x="757.3" y="342.2" width="12" height="4.3" fill="#f8e8c0" opacity="0.6" transform="rotate(2 763.2 344.4)"/><rect x="766.6" y="280.8" width="10.7" height="4.2" fill="#f0c0d8" opacity="0.6" transform="rotate(98 771.9 282.8)"/><rect x="1447.2" y="564" width="11.2" height="3.9" fill="#c8f0dc" opacity="0.6" transform="rotate(12 1452.8 565.9)"/><rect x="936.7" y="-7.9" width="8.1" height="3.2" fill="#c8f0dc" opacity="0.8" transform="rotate(128 940.7 -6.3)"/><rect x="869.8" y="368" width="7.3" height="4.3" fill="#b8dcf8" opacity="0.8" transform="rotate(64 873.5 370.2)"/><rect x="772.1" y="418.7" width="9.7" height="3.9" fill="#b8dcf8" opacity="0.8" transform="rotate(151 776.9 420.6)"/><rect x="824.3" y="398.1" width="11.1" height="3.2" fill="#b8dcf8" opacity="0.6" transform="rotate(75 829.9 399.6)"/><rect x="856.2" y="397.3" width="7" height="3.9" fill="#b8dcf8" opacity="0.9" transform="rotate(29 859.7 399.3)"/><rect x="1176.8" y="131.5" width="10.6" height="3.8" fill="#e09090" opacity="0.8" transform="rotate(156 1182.2 133.4)"/><rect x="1110.1" y="225.6" width="9.7" height="4.1" fill="#f8e8c0" opacity="0.8" transform="rotate(102 1115 227.7)"/><rect x="1069.7" y="469.6" width="9.1" height="2.8" fill="#c8f0dc" opacity="0.6" transform="rotate(145 1074.3 471)"/><rect x="909.9" y="673.4" width="9.2" height="4.2" fill="#2a2a40" opacity="0.7" transform="rotate(36 914.5 675.5)"/><rect x="1466.5" y="696.4" width="8.6" height="4.1" fill="#f0d0d8" opacity="0.9" transform="rotate(50 1470.8 698.5)"/><rect x="1044.3" y="700.4" width="6.9" height="3.9" fill="#ffffff" opacity="0.9" transform="rotate(83 1047.7 702.3)"/><rect x="968.1" y="255.9" width="10.6" height="4.1" fill="#f0c0d8" opacity="0.6" transform="rotate(127 973.4 257.9)"/><rect x="1156.7" y="255.7" width="8.4" height="3.5" fill="#ffffff" opacity="0.7" transform="rotate(27 1160.9 257.5)"/><rect x="828.2" y="544.8" width="6.6" height="3.1" fill="#e0e0e8" opacity="0.7" transform="rotate(114 831.5 546.3)"/><rect x="1348.5" y="421.8" width="7" height="3.8" fill="#2a2a40" opacity="0.7" transform="rotate(17 1352 423.7)"/><rect x="1264.8" y="347.5" width="8.6" height="4.2" fill="#ffffff" opacity="0.8" transform="rotate(28 1269.2 349.6)"/><rect x="812.9" y="103.4" width="6.9" height="2.9" fill="#f8e8c0" opacity="0.6" transform="rotate(103 816.4 104.8)"/><rect x="691.6" y="440.2" width="8.9" height="2.7" fill="#ffffff" opacity="0.6" transform="rotate(176 696.1 441.5)"/><rect x="694.8" y="548.1" width="9.9" height="3.2" fill="#c8f0dc" opacity="0.9" transform="rotate(86 699.7 549.7)"/><rect x="823" y="147.2" width="7.1" height="2.5" fill="#f8e8c0" opacity="0.7" transform="rotate(165 826.5 148.5)"/><rect x="1094.4" y="72" width="7.3" height="2.6" fill="#f0c0d8" opacity="0.8" transform="rotate(136 1098 73.3)"/><rect x="1277.7" y="464.6" width="10.1" height="3.7" fill="#ffffff" opacity="0.7" transform="rotate(95 1282.7 466.4)"/><rect x="921.3" y="125.4" width="10" height="3.6" fill="#1a2a3a" opacity="0.9" transform="rotate(83 926.2 127.2)"/><rect x="971.4" y="187.2" width="10.9" height="4.2" fill="#2a2a40" opacity="0.8" transform="rotate(78 976.9 189.3)"/><rect x="1074.3" y="145.8" width="6.1" height="3.4" fill="#1a2a3a" opacity="0.6" transform="rotate(58 1077.3 147.5)"/><rect x="874.4" y="21.8" width="7" height="2.7" fill="#e09090" opacity="0.6" transform="rotate(115 877.9 23.2)"/><rect x="982.7" y="292.3" width="6.7" height="3.5" fill="#e0e0e8" opacity="0.7" transform="rotate(54 986.1 294.1)"/><rect x="756.6" y="323.3" width="7.9" height="3.8" fill="#f0c0d8" opacity="0.8" transform="rotate(149 760.6 325.2)"/><rect x="1286.8" y="416.7" width="9.9" height="3" fill="#ffffff" opacity="0.7" transform="rotate(166 1291.8 418.3)"/><rect x="912.9" y="388.3" width="11.4" height="3" fill="#f0c0d8" opacity="0.6" transform="rotate(100 918.6 389.8)"/><rect x="1136.6" y="461" width="11.5" height="3.4" fill="#c8f0dc" opacity="0.9" transform="rotate(137 1142.4 462.7)"/><rect x="658.1" y="387.1" width="8.5" height="3" fill="#ffffff" opacity="0.9" transform="rotate(43 662.4 388.6)"/><rect x="1017.8" y="239.2" width="9.1" height="2.7" fill="#b8dcf8" opacity="0.6" transform="rotate(92 1022.4 240.5)"/><rect x="986" y="76.8" width="8.2" height="3.3" fill="#e09090" opacity="0.8" transform="rotate(160 990.1 78.5)"/><rect x="734.4" y="448.5" width="8.8" height="4.4" fill="#ffffff" opacity="0.6" transform="rotate(154 738.8 450.7)"/><rect x="1060" y="188.2" width="10.3" height="2.7" fill="#c8f0dc" opacity="0.6" transform="rotate(118 1065.1 189.5)"/><rect x="1007.5" y="482.1" width="11.4" height="4.4" fill="#2a2a40" opacity="0.7" transform="rotate(70 1013.2 484.3)"/><rect x="1132.8" y="276.8" width="9.9" height="3.3" fill="#6a2a38" opacity="0.7" transform="rotate(102 1137.7 278.4)"/><rect x="1054.9" y="244.5" width="11.3" height="2.9" fill="#ffffff" opacity="0.6" transform="rotate(98 1060.6 246)"/><rect x="823.6" y="734.9" width="6.7" height="4.2" fill="#f0e0c8" opacity="0.8" transform="rotate(3 827 737)"/><rect x="1251.6" y="57.6" width="8" height="3.4" fill="#e09090" opacity="0.8" transform="rotate(34 1255.6 59.3)"/><rect x="885.3" y="66.7" width="9.9" height="3.8" fill="#ffffff" opacity="0.8" transform="rotate(168 890.2 68.6)"/><rect x="951.7" y="334.2" width="11.5" height="3.9" fill="#c8f0dc" opacity="0.6" transform="rotate(31 957.5 336.1)"/><rect x="974.9" y="92.8" width="12" height="3.4" fill="#2a2a40" opacity="0.9" transform="rotate(142 980.8 94.5)"/><rect x="726.3" y="40.5" width="9" height="2.7" fill="#ffffff" opacity="0.9" transform="rotate(41 730.8 41.8)"/><rect x="889.4" y="366.9" width="9" height="3.1" fill="#f0c0d8" opacity="0.6" transform="rotate(109 893.9 368.4)"/><rect x="938" y="30.6" width="11.8" height="4.2" fill="#1a2a3a" opacity="0.7" transform="rotate(105 943.9 32.7)"/><rect x="1137.8" y="726.4" width="9" height="3.6" fill="#c8f0dc" opacity="0.7" transform="rotate(18 1142.3 728.2)"/><rect x="1113.3" y="66.8" width="6.7" height="3.7" fill="#ffffff" opacity="0.9" transform="rotate(156 1116.6 68.7)"/><rect x="866.6" y="432.4" width="10.6" height="3.7" fill="#6a2a38" opacity="0.6" transform="rotate(59 871.8 434.3)"/><rect x="866.9" y="624.2" width="10" height="3.4" fill="#2a2a40" opacity="0.8" transform="rotate(158 871.9 625.9)"/><rect x="1166.6" y="399.1" width="6.1" height="3.1" fill="#f0d0d8" opacity="0.9" transform="rotate(157 1169.6 400.7)"/><rect x="1140.9" y="189.9" width="10.3" height="4.5" fill="#1a2a3a" opacity="0.8" transform="rotate(138 1146.1 192.1)"/><rect x="878.2" y="385.9" width="10.8" height="2.8" fill="#ffffff" opacity="0.7" transform="rotate(100 883.6 387.3)"/><rect x="1003.5" y="274.1" width="6.3" height="2.7" fill="#f0d0d8" opacity="0.7" transform="rotate(150 1006.6 275.4)"/><rect x="1126.9" y="221.7" width="6.7" height="4.1" fill="#ffffff" opacity="0.7" transform="rotate(91 1130.3 223.8)"/><rect x="997" y="325.1" width="11.9" height="4.5" fill="#ffffff" opacity="0.7" transform="rotate(23 1002.9 327.3)"/><rect x="1167.7" y="514.8" width="9.4" height="3.1" fill="#6a2a38" opacity="0.6" transform="rotate(45 1172.4 516.3)"/><rect x="489.8" y="523.3" width="7.2" height="3.1" fill="#b8dcf8" opacity="0.6" transform="rotate(1 493.4 524.9)"/><rect x="1171.6" y="205.6" width="10.9" height="2.8" fill="#b8dcf8" opacity="0.7" transform="rotate(19 1177 207)"/><rect x="604.7" y="338" width="9.8" height="2.7" fill="#f8e8c0" opacity="0.6" transform="rotate(71 609.6 339.4)"/><rect x="1215" y="595.9" width="10.2" height="2.8" fill="#e09090" opacity="0.7" transform="rotate(69 1220.1 597.3)"/><rect x="719.7" y="330.6" width="10.8" height="3.1" fill="#c8f0dc" opacity="0.9" transform="rotate(112 725.1 332.1)"/><rect x="1037.1" y="334.7" width="7.5" height="3" fill="#6a2a38" opacity="0.8" transform="rotate(18 1040.9 336.2)"/><rect x="993" y="481.5" width="6" height="4.3" fill="#b8dcf8" opacity="0.7" transform="rotate(150 996 483.6)"/><rect x="1059.9" y="83.5" width="10" height="3.1" fill="#e09090" opacity="0.7" transform="rotate(92 1064.9 85.1)"/><rect x="740.5" y="627.6" width="9.5" height="3.7" fill="#ffffff" opacity="0.9" transform="rotate(111 745.3 629.5)"/><rect x="385.7" y="750.9" width="8.2" height="4.2" fill="#ffffff" opacity="0.6" transform="rotate(38 389.8 753)"/><rect x="897.7" y="144.5" width="8.7" height="3.4" fill="#f8e8c0" opacity="0.6" transform="rotate(70 902 146.1)"/><rect x="1053.1" y="387.9" width="11.9" height="3.3" fill="#f0c0d8" opacity="0.8" transform="rotate(63 1059 389.5)"/><rect x="1066.6" y="173.1" width="8" height="3.3" fill="#f0e0c8" opacity="0.7" transform="rotate(179 1070.6 174.7)"/><rect x="886.8" y="110.5" width="7.4" height="4.1" fill="#6a2a38" opacity="0.7" transform="rotate(79 890.6 112.6)"/><rect x="846.1" y="548" width="7.6" height="3.4" fill="#ffffff" opacity="0.7" transform="rotate(28 849.9 549.7)"/><rect x="821.5" y="539" width="9.6" height="3.8" fill="#6a2a38" opacity="0.6" transform="rotate(70 826.3 540.9)"/><rect x="881.8" y="221.8" width="7.4" height="4.1" fill="#f0c0d8" opacity="0.6" transform="rotate(99 885.5 223.8)"/><rect x="823.3" y="544.7" width="9.4" height="4.1" fill="#f0c0d8" opacity="0.6" transform="rotate(177 828 546.8)"/><rect x="1067" y="654.5" width="10.2" height="3.8" fill="#e0e0e8" opacity="0.6" transform="rotate(116 1072.1 656.4)"/><rect x="1036.9" y="591.7" width="6.2" height="4" fill="#e0e0e8" opacity="0.9" transform="rotate(39 1040 593.7)"/><rect x="768.5" y="523.3" width="6.8" height="4" fill="#1a2a3a" opacity="0.8" transform="rotate(144 771.9 525.3)"/><rect x="1004.2" y="147.1" width="7.2" height="3.1" fill="#c8f0dc" opacity="0.7" transform="rotate(61 1007.8 148.6)"/><rect x="806.7" y="306.5" width="9.5" height="4.4" fill="#ffffff" opacity="0.8" transform="rotate(54 811.5 308.7)"/><rect x="1247.8" y="196" width="10.5" height="3.9" fill="#e09090" opacity="0.8" transform="rotate(101 1253.1 197.9)"/><rect x="1167.3" y="164.7" width="8.1" height="4" fill="#e09090" opacity="0.6" transform="rotate(116 1171.3 166.7)"/><rect x="824" y="126.6" width="7.8" height="3.6" fill="#f0e0c8" opacity="0.6" transform="rotate(139 828 128.4)"/><rect x="1081.6" y="312.2" width="7.1" height="3.5" fill="#f8e8c0" opacity="0.9" transform="rotate(164 1085.1 314)"/><rect x="594.7" y="457.1" width="11.3" height="2.6" fill="#f8e8c0" opacity="0.6" transform="rotate(126 600.3 458.4)"/><rect x="975" y="512.9" width="8.2" height="2.6" fill="#f8e8c0" opacity="0.7" transform="rotate(119 979.1 514.2)"/><rect x="689.8" y="394.9" width="6.6" height="3.7" fill="#ffffff" opacity="0.7" transform="rotate(154 693.1 396.7)"/><rect x="718.4" y="364.1" width="11.8" height="3.9" fill="#f0e0c8" opacity="0.6" transform="rotate(82 724.3 366)"/><rect x="1019.1" y="135.3" width="6.5" height="2.7" fill="#e09090" opacity="0.9" transform="rotate(97 1022.4 136.6)"/><rect x="615.2" y="365.1" width="10.1" height="3.4" fill="#c8f0dc" opacity="0.9" transform="rotate(175 620.3 366.7)"/><rect x="1094.9" y="51.3" width="6.1" height="4.3" fill="#1a2a3a" opacity="0.8" transform="rotate(78 1098 53.5)"/><rect x="1006.7" y="424.1" width="8.8" height="2.9" fill="#f8e8c0" opacity="0.6" transform="rotate(155 1011.1 425.5)"/><rect x="621.7" y="310.5" width="6.6" height="4.4" fill="#f0e0c8" opacity="0.9" transform="rotate(151 625 312.7)"/><rect x="689.6" y="300" width="7" height="4.1" fill="#ffffff" opacity="0.8" transform="rotate(72 693.1 302)"/><rect x="1183.1" y="302.2" width="6.9" height="3.9" fill="#e0e0e8" opacity="0.6" transform="rotate(83 1186.5 304.1)"/><rect x="1223.9" y="253.6" width="11.9" height="2.7" fill="#c8f0dc" opacity="0.6" transform="rotate(37 1229.8 254.9)"/><rect x="803.7" y="564.3" width="9.5" height="2.8" fill="#f0d0d8" opacity="0.8" transform="rotate(123 808.4 565.7)"/><rect x="974.5" y="442" width="9.4" height="2.8" fill="#f0c0d8" opacity="0.6" transform="rotate(76 979.3 443.4)"/><rect x="994.3" y="173.4" width="7.6" height="3.1" fill="#e0e0e8" opacity="0.6" transform="rotate(109 998.1 174.9)"/><rect x="870.7" y="543.9" width="9.6" height="3.2" fill="#f0d0d8" opacity="0.6" transform="rotate(43 875.4 545.5)"/><rect x="1090.3" y="27.4" width="11.5" height="4.3" fill="#2a2a40" opacity="0.6" transform="rotate(42 1096.1 29.5)"/><rect x="1116.8" y="184.7" width="8.3" height="3" fill="#ffffff" opacity="0.9" transform="rotate(143 1121 186.2)"/><rect x="863.8" y="269.3" width="10.2" height="4.1" fill="#f0d0d8" opacity="0.7" transform="rotate(164 868.9 271.4)"/><rect x="1127" y="153.9" width="10.7" height="4.4" fill="#ffffff" opacity="0.6" transform="rotate(137 1132.3 156.1)"/><rect x="904.6" y="441.2" width="11.6" height="4" fill="#f8e8c0" opacity="0.7" transform="rotate(21 910.4 443.2)"/><rect x="1312.1" y="459" width="9.1" height="4.4" fill="#c8f0dc" opacity="0.7" transform="rotate(130 1316.7 461.2)"/><rect x="1115.9" y="468.6" width="6.2" height="2.7" fill="#ffffff" opacity="0.9" transform="rotate(100 1119 469.9)"/><rect x="664.3" y="400.4" width="7.6" height="4.3" fill="#e0e0e8" opacity="0.9" transform="rotate(123 668.1 402.6)"/><rect x="836.3" y="108.7" width="7" height="2.9" fill="#f8e8c0" opacity="0.8" transform="rotate(23 839.8 110.1)"/><rect x="631.8" y="269.7" width="9.9" height="2.9" fill="#b8dcf8" opacity="0.8" transform="rotate(164 636.8 271.1)"/><rect x="1117.9" y="247" width="6" height="3.9" fill="#c8f0dc" opacity="0.9" transform="rotate(77 1120.9 248.9)"/><rect x="1065.4" y="372.5" width="10.9" height="4.1" fill="#f0e0c8" opacity="0.9" transform="rotate(121 1070.9 374.5)"/><rect x="1377.2" y="526.3" width="6.7" height="2.6" fill="#e09090" opacity="0.9" transform="rotate(29 1380.5 527.5)"/><rect x="1019" y="364.3" width="8.7" height="4.2" fill="#ffffff" opacity="0.9" transform="rotate(54 1023.4 366.4)"/><rect x="1203.1" y="294.2" width="9.3" height="3.9" fill="#ffffff" opacity="0.9" transform="rotate(134 1207.7 296.2)"/><rect x="1056.8" y="199.7" width="10.7" height="2.7" fill="#1a2a3a" opacity="0.6" transform="rotate(68 1062.2 201.1)"/><rect x="1061.3" y="114.6" width="7.1" height="4.2" fill="#ffffff" opacity="0.6" transform="rotate(19 1064.8 116.7)"/><rect x="990.1" y="271.5" width="11.7" height="3.3" fill="#ffffff" opacity="0.6" transform="rotate(104 995.9 273.2)"/><rect x="1233.3" y="214.7" width="6.7" height="3.9" fill="#f0c0d8" opacity="0.8" transform="rotate(142 1236.6 216.7)"/><rect x="935.4" y="334.4" width="7.8" height="2.8" fill="#f8e8c0" opacity="0.7" transform="rotate(58 939.3 335.8)"/><rect x="1420.7" y="706.6" width="9.2" height="4.1" fill="#c8f0dc" opacity="0.8" transform="rotate(103 1425.3 708.7)"/><rect x="1095.3" y="255.6" width="8.7" height="3.8" fill="#e09090" opacity="0.7" transform="rotate(7 1099.7 257.5)"/><rect x="1198.3" y="383.3" width="8.1" height="3.9" fill="#ffffff" opacity="0.7" transform="rotate(72 1202.4 385.2)"/><rect x="1064.8" y="415.2" width="6.8" height="2.6" fill="#2a2a40" opacity="0.6" transform="rotate(156 1068.2 416.5)"/><rect x="1013" y="611.9" width="8.5" height="3.6" fill="#f8e8c0" opacity="0.6" transform="rotate(16 1017.2 613.7)"/><rect x="1082.9" y="94.7" width="10.2" height="4.4" fill="#f0d0d8" opacity="0.8" transform="rotate(9 1088 96.8)"/><rect x="570.1" y="665.9" width="10.6" height="3.7" fill="#ffffff" opacity="0.7" transform="rotate(174 575.4 667.7)"/><rect x="967" y="551.4" width="8.2" height="4.3" fill="#e0e0e8" opacity="0.6" transform="rotate(123 971 553.5)"/><rect x="1133.4" y="449.7" width="9.9" height="3.9" fill="#f0e0c8" opacity="0.7" transform="rotate(174 1138.3 451.6)"/><rect x="805.5" y="235.7" width="6.5" height="4.3" fill="#6a2a38" opacity="0.9" transform="rotate(150 808.7 237.9)"/><rect x="1008.9" y="434.5" width="8.9" height="4.2" fill="#f8e8c0" opacity="0.9" transform="rotate(177 1013.4 436.6)"/><rect x="933.6" y="85.7" width="11.8" height="2.9" fill="#f0d0d8" opacity="0.7" transform="rotate(39 939.5 87.1)"/><rect x="1253.6" y="548.8" width="9.8" height="2.8" fill="#ffffff" opacity="0.7" transform="rotate(81 1258.5 550.2)"/><rect x="1417.2" y="650.8" width="8.9" height="2.9" fill="#f0e0c8" opacity="0.8" transform="rotate(48 1421.7 652.2)"/><rect x="815.9" y="452.1" width="11.5" height="3.3" fill="#ffffff" opacity="0.9" transform="rotate(135 821.7 453.7)"/><rect x="1143.5" y="242.3" width="6.9" height="4.1" fill="#ffffff" opacity="0.9" transform="rotate(4 1146.9 244.3)"/><rect x="1002.3" y="37.2" width="11.6" height="2.7" fill="#f0c0d8" opacity="0.8" transform="rotate(67 1008.1 38.5)"/><rect x="1384.9" y="433.2" width="11.3" height="3" fill="#f0d0d8" opacity="0.7" transform="rotate(147 1390.5 434.7)"/><rect x="943.9" y="395.6" width="8" height="3.6" fill="#c8f0dc" opacity="0.6" transform="rotate(45 947.9 397.4)"/><rect x="1498.8" y="600.1" width="7.6" height="3.5" fill="#f0e0c8" opacity="0.7" transform="rotate(176 1502.6 601.8)"/><rect x="707.8" y="589.5" width="10.9" height="2.7" fill="#6a2a38" opacity="0.8" transform="rotate(176 713.2 590.8)"/><rect x="650.8" y="431.2" width="8.6" height="2.9" fill="#1a2a3a" opacity="0.7" transform="rotate(74 655.1 432.6)"/><rect x="1097.9" y="136.6" width="6.8" height="3.4" fill="#2a2a40" opacity="0.9" transform="rotate(106 1101.3 138.3)"/><rect x="762.9" y="320.8" width="11.9" height="2.9" fill="#f0e0c8" opacity="0.6" transform="rotate(13 768.9 322.3)"/><rect x="942" y="75.4" width="10.8" height="3.4" fill="#f0c0d8" opacity="0.9" transform="rotate(28 947.4 77.1)"/><rect x="1161" y="562.6" width="9.7" height="4" fill="#e0e0e8" opacity="0.7" transform="rotate(85 1165.8 564.6)"/><rect x="1055.9" y="275.1" width="7.4" height="3.4" fill="#ffffff" opacity="0.7" transform="rotate(147 1059.6 276.8)"/><rect x="904.5" y="711.3" width="7.2" height="3.2" fill="#c8f0dc" opacity="0.6" transform="rotate(177 908.1 712.9)"/><rect x="1045.2" y="298.2" width="7.1" height="4.5" fill="#ffffff" opacity="0.6" transform="rotate(169 1048.8 300.5)"/><rect x="1020.2" y="466.1" width="10.7" height="2.5" fill="#b8dcf8" opacity="0.8" transform="rotate(44 1025.5 467.4)"/><rect x="1564.1" y="728.3" width="8.1" height="4.2" fill="#2a2a40" opacity="0.8" transform="rotate(2 1568.2 730.3)"/><rect x="1176.7" y="627.6" width="7.6" height="4.3" fill="#f0d0d8" opacity="0.7" transform="rotate(95 1180.5 629.8)"/><rect x="1314" y="647.6" width="6.5" height="4.3" fill="#f0c0d8" opacity="0.6" transform="rotate(48 1317.3 649.8)"/><rect x="612.1" y="238.2" width="8.5" height="4" fill="#1a2a3a" opacity="0.6" transform="rotate(144 616.3 240.2)"/><rect x="1102.3" y="396.3" width="6" height="2.9" fill="#ffffff" opacity="0.7" transform="rotate(41 1105.3 397.7)"/><rect x="673.7" y="322.9" width="9" height="3.9" fill="#ffffff" opacity="0.6" transform="rotate(93 678.2 324.9)"/><rect x="895" y="249.3" width="11.6" height="3.3" fill="#c8f0dc" opacity="0.7" transform="rotate(16 900.8 250.9)"/><rect x="1101.8" y="551.1" width="10.3" height="4.2" fill="#f8e8c0" opacity="0.8" transform="rotate(111 1106.9 553.2)"/><rect x="821" y="482.6" width="12" height="3.4" fill="#e0e0e8" opacity="0.6" transform="rotate(173 827 484.3)"/><rect x="1008.2" y="220.9" width="11.5" height="3.7" fill="#1a2a3a" opacity="0.9" transform="rotate(114 1014 222.7)"/><rect x="1117.3" y="413.5" width="9.3" height="4" fill="#f8e8c0" opacity="0.8" transform="rotate(13 1121.9 415.5)"/><rect x="1006.4" y="111.4" width="8.9" height="4.1" fill="#ffffff" opacity="0.7" transform="rotate(123 1010.9 113.4)"/><rect x="868.6" y="307.1" width="6.1" height="4.2" fill="#e0e0e8" opacity="0.8" transform="rotate(132 871.6 309.2)"/><rect x="698.3" y="405" width="10.9" height="3.6" fill="#f8e8c0" opacity="0.9" transform="rotate(118 703.7 406.7)"/><rect x="1212.8" y="142" width="8.3" height="4.4" fill="#1a2a3a" opacity="0.6" transform="rotate(46 1216.9 144.2)"/><rect x="780.6" y="308.9" width="8.5" height="3.6" fill="#ffffff" opacity="0.7" transform="rotate(29 784.8 310.6)"/><rect x="1114.3" y="481" width="11.1" height="4" fill="#6a2a38" opacity="0.9" transform="rotate(37 1119.8 483)"/><rect x="1145.4" y="348.9" width="10" height="4.5" fill="#6a2a38" opacity="0.6" transform="rotate(11 1150.4 351.1)"/><rect x="1055" y="507.7" width="10.5" height="2.7" fill="#1a2a3a" opacity="0.7" transform="rotate(66 1060.2 509)"/><rect x="1090.9" y="113.6" width="11.6" height="2.6" fill="#f8e8c0" opacity="0.6" transform="rotate(53 1096.6 114.9)"/><rect x="923.5" y="426.3" width="10.7" height="2.9" fill="#e0e0e8" opacity="0.9" transform="rotate(127 928.9 427.7)"/><rect x="982" y="371" width="7" height="4.2" fill="#e0e0e8" opacity="0.7" transform="rotate(53 985.4 373.1)"/><rect x="980.9" y="256.7" width="8.3" height="2.8" fill="#6a2a38" opacity="0.6" transform="rotate(3 985.1 258.1)"/><rect x="710.9" y="270.7" width="7.9" height="3.3" fill="#ffffff" opacity="0.6" transform="rotate(108 714.9 272.3)"/><rect x="889.3" y="295.7" width="8.6" height="3.7" fill="#2a2a40" opacity="0.8" transform="rotate(173 893.6 297.6)"/><rect x="682.1" y="631.5" width="6.9" height="4.5" fill="#f0e0c8" opacity="0.7" transform="rotate(101 685.5 633.8)"/><rect x="972.4" y="309.2" width="9" height="2.9" fill="#f8e8c0" opacity="0.6" transform="rotate(92 976.9 310.7)"/><rect x="972.2" y="196.6" width="7.3" height="4.1" fill="#f0c0d8" opacity="0.8" transform="rotate(13 975.9 198.6)"/><rect x="700" y="160.6" width="11.1" height="4.3" fill="#ffffff" opacity="0.6" transform="rotate(22 705.6 162.8)"/><rect x="954.2" y="357.7" width="7.6" height="4.3" fill="#6a2a38" opacity="0.9" transform="rotate(130 958 359.8)"/><rect x="693.6" y="644.7" width="9.9" height="3.7" fill="#e0e0e8" opacity="0.6" transform="rotate(164 698.6 646.6)"/><rect x="954.7" y="233" width="7.5" height="2.8" fill="#ffffff" opacity="0.9" transform="rotate(140 958.4 234.4)"/><rect x="984.3" y="95.4" width="8.7" height="2.7" fill="#6a2a38" opacity="0.7" transform="rotate(82 988.7 96.7)"/><rect x="761.3" y="128" width="10.6" height="3.5" fill="#c8f0dc" opacity="0.7" transform="rotate(11 766.6 129.8)"/><rect x="836.1" y="332.1" width="10.1" height="2.7" fill="#f0d0d8" opacity="0.6" transform="rotate(19 841.2 333.5)"/><rect x="870.2" y="244" width="10.8" height="4.1" fill="#f8e8c0" opacity="0.8" transform="rotate(172 875.6 246.1)"/><rect x="1101.2" y="458.8" width="6.1" height="2.5" fill="#e09090" opacity="0.8" transform="rotate(175 1104.2 460.1)"/><rect x="784.1" y="247.5" width="11" height="2.9" fill="#f0c0d8" opacity="0.9" transform="rotate(35 789.6 249)"/><rect x="1181.6" y="181.3" width="11.8" height="3.7" fill="#1a2a3a" opacity="0.7" transform="rotate(42 1187.5 183.2)"/><rect x="977.8" y="399.6" width="11.5" height="2.7" fill="#ffffff" opacity="0.8" transform="rotate(20 983.6 401)"/><rect x="731.5" y="398.4" width="9" height="3.2" fill="#ffffff" opacity="0.7" transform="rotate(45 736 400)"/><rect x="849.8" y="511.3" width="9.5" height="3.7" fill="#2a2a40" opacity="0.7" transform="rotate(4 854.6 513.2)"/><rect x="969" y="486.1" width="10.2" height="3.3" fill="#b8dcf8" opacity="0.7" transform="rotate(3 974.1 487.8)"/><rect x="988.2" y="468.1" width="11.6" height="4" fill="#f0d0d8" opacity="0.7" transform="rotate(15 993.9 470.1)"/><rect x="645" y="585" width="11.5" height="4.4" fill="#e09090" opacity="0.7" transform="rotate(175 650.7 587.2)"/><rect x="1010.2" y="37.6" width="11.3" height="2.7" fill="#ffffff" opacity="0.9" transform="rotate(103 1015.9 39)"/><rect x="1455.8" y="692" width="11.1" height="2.9" fill="#c8f0dc" opacity="0.6" transform="rotate(25 1461.3 693.5)"/><rect x="1031.5" y="657.1" width="6.5" height="3.9" fill="#ffffff" opacity="0.8" transform="rotate(31 1034.8 659)"/><rect x="971.1" y="683" width="10.3" height="3.4" fill="#f0c0d8" opacity="0.7" transform="rotate(49 976.2 684.7)"/><rect x="887.3" y="268.5" width="8.9" height="2.6" fill="#2a2a40" opacity="0.7" transform="rotate(157 891.8 269.8)"/><rect x="974.2" y="54.1" width="6.3" height="3.9" fill="#e0e0e8" opacity="0.9" transform="rotate(111 977.3 56.1)"/><rect x="1120.7" y="350.6" width="6.7" height="4.1" fill="#e0e0e8" opacity="0.7" transform="rotate(150 1124 352.6)"/><rect x="628.9" y="258.8" width="11.4" height="3.8" fill="#ffffff" opacity="0.6" transform="rotate(28 634.7 260.7)"/><rect x="1171.5" y="745.8" width="11" height="4.2" fill="#f0d0d8" opacity="0.7" transform="rotate(40 1177 747.9)"/><rect x="654.9" y="266.7" width="10.1" height="3.5" fill="#e0e0e8" opacity="0.6" transform="rotate(98 660 268.4)"/><rect x="1123.2" y="264" width="9" height="3" fill="#2a2a40" opacity="0.6" transform="rotate(40 1127.7 265.5)"/><rect x="1009.4" y="212.3" width="8.8" height="3" fill="#ffffff" opacity="0.9" transform="rotate(171 1013.8 213.8)"/><rect x="1005.1" y="457" width="11.4" height="3.2" fill="#ffffff" opacity="0.8" transform="rotate(1 1010.8 458.5)"/><rect x="1066.8" y="549.1" width="7.1" height="3.9" fill="#f0d0d8" opacity="0.6" transform="rotate(90 1070.3 551.1)"/><rect x="616.4" y="556.8" width="11.8" height="4.2" fill="#b8dcf8" opacity="0.8" transform="rotate(142 622.3 558.9)"/><rect x="1275.8" y="409.7" width="9.8" height="3.8" fill="#b8dcf8" opacity="0.6" transform="rotate(32 1280.7 411.6)"/><rect x="1175" y="344.2" width="7.1" height="4.5" fill="#c8f0dc" opacity="0.8" transform="rotate(65 1178.5 346.5)"/><rect x="920.5" y="473.9" width="11.7" height="3.1" fill="#e0e0e8" opacity="0.9" transform="rotate(94 926.4 475.5)"/><rect x="1001.1" y="146.8" width="6.3" height="3.3" fill="#ffffff" opacity="0.9" transform="rotate(163 1004.2 148.5)"/><rect x="926.6" y="188.8" width="8.5" height="3.3" fill="#e09090" opacity="0.6" transform="rotate(93 930.8 190.5)"/><rect x="1159.6" y="384" width="11.5" height="2.9" fill="#b8dcf8" opacity="0.8" transform="rotate(62 1165.4 385.4)"/><rect x="830.9" y="321.4" width="7.7" height="3.8" fill="#f0e0c8" opacity="0.7" transform="rotate(74 834.7 323.4)"/><rect x="1034.6" y="160.6" width="11.8" height="3.3" fill="#e0e0e8" opacity="0.6" transform="rotate(53 1040.5 162.2)"/><rect x="779.3" y="130.1" width="11.4" height="3" fill="#ffffff" opacity="0.7" transform="rotate(44 785.1 131.6)"/><rect x="1235.2" y="528.2" width="6.5" height="2.6" fill="#ffffff" opacity="0.8" transform="rotate(88 1238.5 529.5)"/><rect x="575.2" y="480.3" width="11.2" height="3.2" fill="#6a2a38" opacity="0.9" transform="rotate(66 580.8 482)"/><rect x="1029.7" y="94.6" width="7.2" height="3.1" fill="#1a2a3a" opacity="0.9" transform="rotate(77 1033.3 96.1)"/><rect x="1034.5" y="214.9" width="11" height="2.9" fill="#6a2a38" opacity="0.9" transform="rotate(116 1040 216.4)"/><rect x="796.5" y="32" width="9.9" height="3.3" fill="#f8e8c0" opacity="0.9" transform="rotate(92 801.4 33.7)"/><rect x="908.7" y="416.8" width="6.3" height="4.3" fill="#b8dcf8" opacity="0.6" transform="rotate(104 911.8 418.9)"/><rect x="1310.3" y="712.4" width="11.6" height="2.6" fill="#6a2a38" opacity="0.6" transform="rotate(120 1316 713.7)"/><rect x="625.7" y="555" width="6.1" height="2.5" fill="#2a2a40" opacity="0.9" transform="rotate(29 628.7 556.2)"/><rect x="1212.6" y="304" width="11.9" height="2.9" fill="#c8f0dc" opacity="0.6" transform="rotate(170 1218.5 305.4)"/><rect x="1099.2" y="519.6" width="11.7" height="3.1" fill="#f0c0d8" opacity="0.7" transform="rotate(122 1105 521.2)"/><rect x="1057.1" y="373.6" width="7.4" height="3.5" fill="#c8f0dc" opacity="0.9" transform="rotate(11 1060.8 375.3)"/><rect x="1221.1" y="248.4" width="11" height="4.1" fill="#f0c0d8" opacity="0.7" transform="rotate(81 1226.6 250.4)"/><rect x="1260" y="320.6" width="7.3" height="4.5" fill="#1a2a3a" opacity="0.6" transform="rotate(43 1263.7 322.8)"/><rect x="1130.7" y="91.4" width="9.6" height="3.6" fill="#6a2a38" opacity="0.6" transform="rotate(170 1135.5 93.2)"/><rect x="1065.4" y="274.9" width="10.5" height="3.9" fill="#b8dcf8" opacity="0.8" transform="rotate(108 1070.7 276.8)"/><rect x="991.3" y="246.8" width="8.7" height="3.1" fill="#f0c0d8" opacity="0.6" transform="rotate(156 995.6 248.4)"/><rect x="1284.4" y="350.8" width="10.6" height="2.9" fill="#ffffff" opacity="0.8" transform="rotate(62 1289.7 352.3)"/><rect x="756.9" y="146.6" width="6.3" height="3" fill="#ffffff" opacity="0.8" transform="rotate(91 760.1 148.2)"/><rect x="594.3" y="395.3" width="7.6" height="2.7" fill="#ffffff" opacity="0.6" transform="rotate(127 598.1 396.6)"/><rect x="1159.6" y="254.4" width="11.8" height="4.2" fill="#c8f0dc" opacity="0.9" transform="rotate(30 1165.5 256.5)"/><rect x="1005.9" y="423.6" width="7.9" height="2.9" fill="#1a2a3a" opacity="0.6" transform="rotate(35 1009.9 425)"/><rect x="815" y="265.1" width="11.9" height="4.3" fill="#1a2a3a" opacity="0.8" transform="rotate(169 821 267.3)"/><rect x="961.9" y="355.5" width="6.4" height="3.5" fill="#1a2a3a" opacity="0.8" transform="rotate(46 965.1 357.3)"/><rect x="691.7" y="732.6" width="10.4" height="4.2" fill="#e0e0e8" opacity="0.7" transform="rotate(126 696.9 734.7)"/><rect x="990.3" y="574.6" width="7" height="3.5" fill="#e09090" opacity="0.8" transform="rotate(23 993.8 576.3)"/><rect x="695.1" y="632.2" width="8.8" height="4.3" fill="#b8dcf8" opacity="0.8" transform="rotate(144 699.5 634.4)"/><rect x="1160.5" y="554.1" width="9" height="3.5" fill="#e09090" opacity="0.7" transform="rotate(38 1165 555.9)"/><rect x="665.9" y="479.9" width="11.5" height="3.1" fill="#b8dcf8" opacity="0.7" transform="rotate(78 671.6 481.4)"/><rect x="1308.5" y="603.5" width="11.6" height="3.2" fill="#6a2a38" opacity="0.7" transform="rotate(81 1314.3 605.1)"/><rect x="1149.2" y="48.1" width="10.7" height="4" fill="#ffffff" opacity="0.8" transform="rotate(128 1154.6 50.1)"/><rect x="1162.5" y="46.9" width="10.1" height="3.2" fill="#b8dcf8" opacity="0.9" transform="rotate(22 1167.5 48.5)"/><rect x="813" y="565.5" width="10.5" height="3.7" fill="#6a2a38" opacity="0.7" transform="rotate(9 818.2 567.3)"/><rect x="829.2" y="312.6" width="11.3" height="3.9" fill="#f0e0c8" opacity="0.8" transform="rotate(32 834.8 314.6)"/><rect x="552.5" y="581.3" width="11.7" height="3.2" fill="#ffffff" opacity="0.8" transform="rotate(23 558.3 582.9)"/><rect x="736.7" y="130.4" width="6.8" height="3.2" fill="#ffffff" opacity="0.8" transform="rotate(162 740.1 132)"/><rect x="823.3" y="234.9" width="11.1" height="2.9" fill="#1a2a3a" opacity="0.7" transform="rotate(177 828.8 236.3)"/><rect x="750.1" y="82.1" width="6.3" height="4.1" fill="#2a2a40" opacity="0.8" transform="rotate(151 753.2 84.1)"/><rect x="692.1" y="268.8" width="10.2" height="3.7" fill="#ffffff" opacity="0.6" transform="rotate(76 697.2 270.7)"/><rect x="733.3" y="355" width="9.8" height="3.9" fill="#f0d0d8" opacity="0.7" transform="rotate(111 738.2 357)"/><rect x="1211.2" y="447.5" width="7.6" height="2.9" fill="#e0e0e8" opacity="0.6" transform="rotate(144 1215 449)"/><rect x="1311.5" y="389.3" width="7.3" height="3.5" fill="#1a2a3a" opacity="0.6" transform="rotate(105 1315.1 391)"/><rect x="1181.4" y="318.6" width="7.7" height="2.9" fill="#e0e0e8" opacity="0.9" transform="rotate(172 1185.3 320.1)"/><rect x="843.3" y="553.8" width="11.5" height="2.8" fill="#ffffff" opacity="0.7" transform="rotate(113 849.1 555.2)"/><rect x="951.8" y="257.5" width="11.4" height="4.3" fill="#ffffff" opacity="0.9" transform="rotate(137 957.5 259.7)"/><rect x="1177.4" y="692.6" width="9.9" height="3" fill="#f0d0d8" opacity="0.7" transform="rotate(57 1182.4 694.1)"/><rect x="1153.1" y="6.9" width="7.8" height="3" fill="#ffffff" opacity="0.6" transform="rotate(125 1157 8.4)"/><rect x="1182.2" y="50.6" width="9.7" height="3.8" fill="#f8e8c0" opacity="0.8" transform="rotate(138 1187.1 52.5)"/><rect x="1030.2" y="596.1" width="6.3" height="2.7" fill="#6a2a38" opacity="0.8" transform="rotate(130 1033.4 597.4)"/><rect x="827.4" y="735.5" width="10.2" height="2.7" fill="#ffffff" opacity="0.6" transform="rotate(22 832.6 736.9)"/><rect x="773.6" y="347.2" width="10.3" height="3.9" fill="#f0d0d8" opacity="0.7" transform="rotate(35 778.8 349.2)"/><rect x="943.5" y="266.8" width="10.8" height="3.6" fill="#ffffff" opacity="0.8" transform="rotate(158 948.9 268.6)"/><rect x="1160.5" y="701.5" width="8.9" height="2.6" fill="#f0c0d8" opacity="0.6" transform="rotate(98 1165 702.8)"/><rect x="458.3" y="609.6" width="7.3" height="3.9" fill="#6a2a38" opacity="0.6" transform="rotate(40 461.9 611.5)"/><rect x="1197.7" y="385.7" width="8.3" height="2.8" fill="#1a2a3a" opacity="0.7" transform="rotate(172 1201.9 387.1)"/><rect x="1011.1" y="101" width="10.9" height="2.8" fill="#ffffff" opacity="0.6" transform="rotate(102 1016.6 102.4)"/><rect x="1096.2" y="58.4" width="7.5" height="3.5" fill="#2a2a40" opacity="0.7" transform="rotate(138 1100 60.2)"/><rect x="542.7" y="544.8" width="11.4" height="3.7" fill="#2a2a40" opacity="0.9" transform="rotate(163 548.4 546.7)"/><rect x="872.3" y="357.1" width="6.3" height="2.9" fill="#6a2a38" opacity="0.8" transform="rotate(13 875.5 358.5)"/><rect x="1066.6" y="618.8" width="6.1" height="2.6" fill="#f8e8c0" opacity="0.8" transform="rotate(131 1069.6 620.1)"/><rect x="504.6" y="662.7" width="9.7" height="4.2" fill="#e0e0e8" opacity="0.9" transform="rotate(169 509.4 664.8)"/><rect x="998.4" y="293.7" width="11.9" height="3.2" fill="#ffffff" opacity="0.9" transform="rotate(38 1004.3 295.3)"/><rect x="750.7" y="203.3" width="8.2" height="4.3" fill="#ffffff" opacity="0.9" transform="rotate(101 754.8 205.4)"/><rect x="926.8" y="536.1" width="9.4" height="3.1" fill="#f0d0d8" opacity="0.7" transform="rotate(149 931.5 537.7)"/><rect x="1013.2" y="659.5" width="6.9" height="4.2" fill="#ffffff" opacity="0.9" transform="rotate(64 1016.6 661.6)"/><rect x="1171.4" y="246.3" width="8" height="2.6" fill="#1a2a3a" opacity="0.7" transform="rotate(38 1175.4 247.6)"/><rect x="1066.1" y="539.3" width="8.5" height="2.5" fill="#6a2a38" opacity="0.7" transform="rotate(63 1070.4 540.6)"/><rect x="859.6" y="165" width="11.4" height="3.3" fill="#2a2a40" opacity="0.7" transform="rotate(147 865.3 166.7)"/><rect x="1363.2" y="337.4" width="8.4" height="3.5" fill="#ffffff" opacity="0.7" transform="rotate(18 1367.4 339.1)"/><rect x="1091" y="457.2" width="8.6" height="3" fill="#ffffff" opacity="0.6" transform="rotate(66 1095.3 458.7)"/><rect x="1369.8" y="507.6" width="10.8" height="2.6" fill="#f8e8c0" opacity="0.6" transform="rotate(86 1375.2 508.9)"/><rect x="913.3" y="330.2" width="9.5" height="2.7" fill="#f0e0c8" opacity="0.9" transform="rotate(24 918 331.5)"/><rect x="951.8" y="569.2" width="7.2" height="3" fill="#2a2a40" opacity="0.7" transform="rotate(34 955.4 570.7)"/><rect x="770.5" y="182" width="12" height="4.3" fill="#e09090" opacity="0.9" transform="rotate(62 776.5 184.1)"/><rect x="1207.3" y="37.2" width="11.7" height="3.7" fill="#1a2a3a" opacity="0.7" transform="rotate(134 1213.2 39)"/><rect x="1022" y="105.5" width="6.1" height="2.7" fill="#b8dcf8" opacity="0.9" transform="rotate(81 1025.1 106.8)"/><rect x="1220.5" y="464.4" width="8.6" height="3.4" fill="#b8dcf8" opacity="0.7" transform="rotate(77 1224.8 466.1)"/><rect x="920.9" y="36.2" width="7.2" height="2.8" fill="#ffffff" opacity="0.7" transform="rotate(49 924.5 37.6)"/><rect x="1006.2" y="395.1" width="6.4" height="3.8" fill="#f0e0c8" opacity="0.6" transform="rotate(129 1009.4 397)"/><rect x="920.4" y="671.1" width="7.5" height="3" fill="#6a2a38" opacity="0.7" transform="rotate(30 924.1 672.6)"/><rect x="967.7" y="363.6" width="10.7" height="3.3" fill="#b8dcf8" opacity="0.8" transform="rotate(99 973.1 365.2)"/><rect x="1139.9" y="635.9" width="11.5" height="2.7" fill="#b8dcf8" opacity="0.7" transform="rotate(148 1145.6 637.2)"/><rect x="806.9" y="475.5" width="6.2" height="4.2" fill="#f0e0c8" opacity="0.8" transform="rotate(102 810 477.6)"/><rect x="1123.3" y="282.1" width="8.2" height="3.6" fill="#ffffff" opacity="0.9" transform="rotate(87 1127.4 283.8)"/><rect x="868.1" y="567.7" width="8.1" height="3" fill="#ffffff" opacity="0.7" transform="rotate(16 872.1 569.2)"/><rect x="869.9" y="178.3" width="8.9" height="3" fill="#f0e0c8" opacity="0.7" transform="rotate(101 874.4 179.8)"/><rect x="846.2" y="96.8" width="10.2" height="3.6" fill="#f0c0d8" opacity="0.7" transform="rotate(55 851.3 98.5)"/><rect x="920.2" y="623.7" width="8.2" height="3" fill="#2a2a40" opacity="0.7" transform="rotate(124 924.3 625.2)"/><rect x="902.5" y="214.7" width="8.8" height="2.6" fill="#1a2a3a" opacity="0.9" transform="rotate(8 906.9 216)"/><rect x="945" y="120.3" width="11.3" height="2.6" fill="#c8f0dc" opacity="0.7" transform="rotate(4 950.6 121.7)"/><rect x="1157.6" y="344.6" width="6.4" height="3.9" fill="#e0e0e8" opacity="0.8" transform="rotate(168 1160.8 346.6)"/><rect x="1230.1" y="116" width="6.4" height="3.7" fill="#f0e0c8" opacity="0.7" transform="rotate(4 1233.3 117.9)"/><rect x="719.3" y="440.2" width="8.4" height="4.1" fill="#f0e0c8" opacity="0.7" transform="rotate(35 723.5 442.3)"/><rect x="821.9" y="328.9" width="11.9" height="3.4" fill="#f0c0d8" opacity="0.7" transform="rotate(153 827.8 330.6)"/><rect x="838.4" y="252.4" width="6.9" height="2.6" fill="#e09090" opacity="0.6" transform="rotate(82 841.8 253.7)"/><rect x="1197.6" y="265.3" width="10" height="3.5" fill="#ffffff" opacity="0.8" transform="rotate(16 1202.6 267.1)"/><rect x="827.8" y="314.6" width="10.1" height="4.3" fill="#1a2a3a" opacity="0.9" transform="rotate(86 832.8 316.7)"/><rect x="1114.6" y="277" width="11.4" height="4.4" fill="#f0c0d8" opacity="0.9" transform="rotate(139 1120.3 279.2)"/><rect x="747.9" y="570.4" width="10.8" height="2.9" fill="#f0c0d8" opacity="0.8" transform="rotate(65 753.3 571.8)"/><rect x="993.2" y="372.8" width="8.9" height="3.4" fill="#2a2a40" opacity="0.6" transform="rotate(176 997.7 374.5)"/><rect x="1052.7" y="239.5" width="11" height="4.2" fill="#f0e0c8" opacity="0.9" transform="rotate(105 1058.3 241.6)"/><rect x="630.9" y="203.9" width="9.1" height="3.8" fill="#2a2a40" opacity="0.7" transform="rotate(149 635.5 205.8)"/><rect x="844" y="748.5" width="8.2" height="3.3" fill="#b8dcf8" opacity="0.6" transform="rotate(65 848.1 750.2)"/><rect x="536.3" y="712.1" width="10.7" height="4" fill="#6a2a38" opacity="0.8" transform="rotate(22 541.7 714.1)"/><rect x="832.2" y="558.2" width="10.5" height="3.3" fill="#ffffff" opacity="0.6" transform="rotate(5 837.5 559.8)"/><rect x="892.3" y="525.1" width="10" height="3.3" fill="#f0c0d8" opacity="0.8" transform="rotate(94 897.3 526.8)"/><rect x="1307.5" y="302.4" width="9.6" height="2.5" fill="#f0c0d8" opacity="0.9" transform="rotate(112 1312.3 303.6)"/><rect x="763" y="600.1" width="10.1" height="3.4" fill="#c8f0dc" opacity="0.8" transform="rotate(11 768.1 601.8)"/><rect x="1267.1" y="259.1" width="10.5" height="3.8" fill="#6a2a38" opacity="0.8" transform="rotate(105 1272.3 260.9)"/><rect x="1573.4" y="709.3" width="11.4" height="3.6" fill="#b8dcf8" opacity="0.7" transform="rotate(96 1579.1 711.1)"/><rect x="900.2" y="321.5" width="8.1" height="4.1" fill="#e0e0e8" opacity="0.6" transform="rotate(33 904.3 323.5)"/><rect x="1035.3" y="72.9" width="9.9" height="3" fill="#ffffff" opacity="0.6" transform="rotate(114 1040.2 74.4)"/><rect x="847.9" y="165.5" width="11.2" height="4.1" fill="#e0e0e8" opacity="0.8" transform="rotate(70 853.6 167.5)"/><rect x="1111.2" y="548.6" width="10.7" height="3.6" fill="#f0e0c8" opacity="0.7" transform="rotate(137 1116.5 550.4)"/><rect x="1246.3" y="384.3" width="10.5" height="3" fill="#1a2a3a" opacity="0.8" transform="rotate(45 1251.5 385.8)"/><rect x="1463.4" y="658.3" width="6.4" height="3.7" fill="#e0e0e8" opacity="0.9" transform="rotate(173 1466.6 660.2)"/><rect x="699.2" y="458" width="6.5" height="4.2" fill="#c8f0dc" opacity="0.9" transform="rotate(167 702.5 460.2)"/><rect x="985.3" y="182.7" width="6.1" height="4.1" fill="#ffffff" opacity="0.6" transform="rotate(80 988.3 184.7)"/><rect x="1204.9" y="695.7" width="6.6" height="4.2" fill="#b8dcf8" opacity="0.7" transform="rotate(175 1208.2 697.8)"/><rect x="921.4" y="104.2" width="7" height="4" fill="#b8dcf8" opacity="0.8" transform="rotate(157 924.9 106.2)"/><rect x="1181" y="632.4" width="9.6" height="3.6" fill="#b8dcf8" opacity="0.9" transform="rotate(20 1185.8 634.2)"/><rect x="990.6" y="324.5" width="8.3" height="3" fill="#f8e8c0" opacity="0.8" transform="rotate(5 994.7 326)"/><rect x="597.2" y="571.7" width="9.6" height="3.8" fill="#2a2a40" opacity="0.9" transform="rotate(53 602 573.6)"/><rect x="775.7" y="446.2" width="8.6" height="4.5" fill="#c8f0dc" opacity="0.9" transform="rotate(100 780 448.4)"/><rect x="1129.3" y="278.4" width="9.9" height="2.5" fill="#ffffff" opacity="0.6" transform="rotate(123 1134.2 279.7)"/><rect x="868.4" y="606.3" width="7.9" height="3.3" fill="#ffffff" opacity="0.8" transform="rotate(38 872.4 607.9)"/><rect x="1327.1" y="456.2" width="7.9" height="2.5" fill="#2a2a40" opacity="0.6" transform="rotate(119 1331 457.5)"/><rect x="712.9" y="700" width="10.8" height="3.1" fill="#c8f0dc" opacity="0.7" transform="rotate(155 718.3 701.6)"/><rect x="742.2" y="711.7" width="9.4" height="4.4" fill="#f0e0c8" opacity="0.8" transform="rotate(159 746.9 713.9)"/><rect x="695.7" y="316.6" width="7" height="2.5" fill="#ffffff" opacity="0.8" transform="rotate(71 699.2 317.8)"/><rect x="1009.3" y="332" width="11.6" height="3.7" fill="#ffffff" opacity="0.6" transform="rotate(14 1015.1 333.9)"/><rect x="954.6" y="116.3" width="6.6" height="4" fill="#f0e0c8" opacity="0.6" transform="rotate(38 957.9 118.3)"/><rect x="1029.3" y="471.2" width="7.1" height="3.5" fill="#1a2a3a" opacity="0.8" transform="rotate(150 1032.9 472.9)"/><rect x="857.3" y="611.5" width="9.2" height="4.3" fill="#c8f0dc" opacity="0.8" transform="rotate(178 861.9 613.7)"/><rect x="1213.3" y="588.6" width="8.5" height="4.3" fill="#b8dcf8" opacity="0.6" transform="rotate(71 1217.6 590.8)"/><rect x="1204.7" y="389" width="11.1" height="4.5" fill="#f0d0d8" opacity="0.8" transform="rotate(102 1210.2 391.2)"/><rect x="967.2" y="528.1" width="10.5" height="3.7" fill="#e09090" opacity="0.7" transform="rotate(136 972.4 530)"/><rect x="881.5" y="246.4" width="10.7" height="3.9" fill="#e0e0e8" opacity="0.9" transform="rotate(32 886.8 248.4)"/><rect x="736.1" y="185.6" width="10.2" height="3.2" fill="#c8f0dc" opacity="0.8" transform="rotate(105 741.2 187.3)"/><rect x="1168.2" y="232.6" width="8.5" height="2.8" fill="#f0e0c8" opacity="0.8" transform="rotate(137 1172.5 234.1)"/><rect x="610.6" y="552.9" width="10.4" height="4" fill="#ffffff" opacity="0.8" transform="rotate(121 615.8 554.9)"/><rect x="1054.2" y="340.7" width="8.5" height="4.3" fill="#6a2a38" opacity="0.9" transform="rotate(39 1058.5 342.8)"/><rect x="1147.8" y="482.3" width="11.2" height="3.4" fill="#ffffff" opacity="0.6" transform="rotate(169 1153.4 484)"/><rect x="562.9" y="642.2" width="10" height="4.2" fill="#1a2a3a" opacity="0.9" transform="rotate(149 567.9 644.4)"/><rect x="858.6" y="202.7" width="11.1" height="2.7" fill="#2a2a40" opacity="0.6" transform="rotate(160 864.1 204)"/><rect x="1067.2" y="-3.6" width="8.7" height="2.7" fill="#1a2a3a" opacity="0.6" transform="rotate(148 1071.6 -2.3)"/><rect x="914.7" y="185.9" width="7.7" height="3.2" fill="#f8e8c0" opacity="0.9" transform="rotate(90 918.6 187.5)"/><rect x="796.8" y="192.5" width="7.2" height="4.1" fill="#f0e0c8" opacity="0.7" transform="rotate(36 800.4 194.6)"/><rect x="861.9" y="568.5" width="9.4" height="4.3" fill="#b8dcf8" opacity="0.8" transform="rotate(28 866.6 570.6)"/><rect x="1143.6" y="547.9" width="8.7" height="4.2" fill="#e0e0e8" opacity="0.8" transform="rotate(132 1148 550)"/><rect x="1203.1" y="545.8" width="8.5" height="2.6" fill="#e09090" opacity="0.8" transform="rotate(145 1207.3 547.1)"/><rect x="932.2" y="326.1" width="11.6" height="2.5" fill="#e09090" opacity="0.9" transform="rotate(72 938 327.4)"/><rect x="1006.2" y="297.3" width="11.2" height="2.8" fill="#e09090" opacity="0.8" transform="rotate(104 1011.8 298.7)"/><rect x="1255.7" y="328" width="6.1" height="3.3" fill="#f0d0d8" opacity="0.7" transform="rotate(169 1258.7 329.7)"/><rect x="974.2" y="268.8" width="6.6" height="3.6" fill="#e09090" opacity="0.8" transform="rotate(112 977.5 270.6)"/><rect x="1160.9" y="205.8" width="6.6" height="4.2" fill="#f0e0c8" opacity="0.6" transform="rotate(22 1164.2 207.9)"/><rect x="842.3" y="396.6" width="8.3" height="3.2" fill="#f0e0c8" opacity="0.9" transform="rotate(166 846.4 398.2)"/><rect x="1185.4" y="390.9" width="9.9" height="3.4" fill="#ffffff" opacity="0.7" transform="rotate(80 1190.4 392.6)"/><rect x="632.2" y="464.3" width="9.8" height="3.8" fill="#ffffff" opacity="0.6" transform="rotate(54 637.1 466.2)"/><rect x="843.7" y="533.8" width="11.5" height="2.7" fill="#f0d0d8" opacity="0.7" transform="rotate(139 849.5 535.2)"/><rect x="581.7" y="373.6" width="11" height="3.7" fill="#ffffff" opacity="0.6" transform="rotate(83 587.2 375.5)"/><rect x="784.4" y="464.1" width="8.4" height="2.5" fill="#e0e0e8" opacity="0.9" transform="rotate(22 788.6 465.4)"/><rect x="961.6" y="235.9" width="7.3" height="3.8" fill="#f0c0d8" opacity="0.6" transform="rotate(115 965.2 237.8)"/><rect x="672.5" y="152.1" width="10.5" height="4.1" fill="#f0d0d8" opacity="0.8" transform="rotate(143 677.7 154.2)"/><rect x="1181.8" y="240.1" width="11.4" height="2.7" fill="#f0d0d8" opacity="0.6" transform="rotate(84 1187.5 241.4)"/><rect x="1142.2" y="377.9" width="8" height="2.5" fill="#ffffff" opacity="0.9" transform="rotate(126 1146.1 379.2)"/><rect x="893.4" y="16" width="9.3" height="2.8" fill="#f8e8c0" opacity="0.7" transform="rotate(16 898.1 17.4)"/><rect x="906.2" y="717.5" width="6.9" height="4.3" fill="#f8e8c0" opacity="0.6" transform="rotate(59 909.7 719.6)"/><rect x="1034.4" y="83.4" width="7.2" height="3.9" fill="#2a2a40" opacity="0.6" transform="rotate(132 1038 85.4)"/><rect x="1326.5" y="285" width="7.5" height="3.6" fill="#ffffff" opacity="0.8" transform="rotate(81 1330.2 286.8)"/><rect x="990.9" y="475.4" width="11.5" height="3.3" fill="#ffffff" opacity="0.8" transform="rotate(25 996.6 477)"/><rect x="1012.8" y="220.9" width="9.9" height="2.8" fill="#ffffff" opacity="0.7" transform="rotate(143 1017.8 222.3)"/><rect x="1081.8" y="311.7" width="11.6" height="3.5" fill="#f8e8c0" opacity="0.7" transform="rotate(64 1087.6 313.5)"/><rect x="849.8" y="518.6" width="8.6" height="3.8" fill="#6a2a38" opacity="0.9" transform="rotate(94 854.1 520.5)"/><rect x="752.3" y="394.8" width="9.2" height="3" fill="#f0c0d8" opacity="0.9" transform="rotate(166 756.9 396.3)"/><rect x="748.3" y="231.6" width="11.4" height="3.8" fill="#f0c0d8" opacity="0.7" transform="rotate(19 754 233.5)"/><rect x="984.6" y="107.2" width="6.8" height="4.4" fill="#c8f0dc" opacity="0.7" transform="rotate(176 988 109.4)"/><rect x="1114.5" y="403.8" width="9.8" height="3.3" fill="#6a2a38" opacity="0.7" transform="rotate(149 1119.4 405.5)"/><rect x="1062.8" y="558.1" width="7.2" height="3.1" fill="#f0e0c8" opacity="0.6" transform="rotate(80 1066.3 559.6)"/><rect x="1008.6" y="580.9" width="6.4" height="2.8" fill="#f0d0d8" opacity="0.8" transform="rotate(129 1011.8 582.2)"/><rect x="922.1" y="332.7" width="7.1" height="3.3" fill="#b8dcf8" opacity="0.9" transform="rotate(95 925.6 334.4)"/><rect x="1165.9" y="343.8" width="10.5" height="3.5" fill="#e0e0e8" opacity="0.9" transform="rotate(133 1171.1 345.6)"/><rect x="950.3" y="166.3" width="9.9" height="3.5" fill="#2a2a40" opacity="0.9" transform="rotate(130 955.2 168.1)"/><rect x="753.2" y="538.3" width="10.7" height="2.6" fill="#6a2a38" opacity="0.8" transform="rotate(151 758.5 539.6)"/><rect x="901.2" y="378.4" width="11" height="3.2" fill="#e09090" opacity="0.8" transform="rotate(15 906.8 380)"/><rect x="1049.4" y="271.3" width="9.7" height="3.8" fill="#2a2a40" opacity="0.6" transform="rotate(42 1054.3 273.2)"/><rect x="522.9" y="652.2" width="10" height="3.9" fill="#b8dcf8" opacity="0.7" transform="rotate(141 527.9 654.2)"/><rect x="892.7" y="459.5" width="7.6" height="3.5" fill="#f0d0d8" opacity="0.6" transform="rotate(38 896.5 461.2)"/><rect x="1176.4" y="237.5" width="8.6" height="3.3" fill="#c8f0dc" opacity="0.7" transform="rotate(39 1180.6 239.1)"/><rect x="1359" y="662.7" width="7.4" height="2.6" fill="#2a2a40" opacity="0.8" transform="rotate(23 1362.7 664)"/><rect x="657.8" y="479.3" width="7" height="3.6" fill="#f0d0d8" opacity="0.6" transform="rotate(165 661.3 481.1)"/><rect x="1098.2" y="95.8" width="8.2" height="3" fill="#ffffff" opacity="0.7" transform="rotate(29 1102.3 97.3)"/><rect x="517.7" y="485.8" width="8.1" height="3" fill="#e0e0e8" opacity="0.9" transform="rotate(152 521.7 487.3)"/><rect x="1199.1" y="12.2" width="8.5" height="3.4" fill="#e09090" opacity="0.8" transform="rotate(16 1203.3 13.9)"/><rect x="1155.2" y="476.9" width="7.1" height="4" fill="#6a2a38" opacity="0.6" transform="rotate(48 1158.7 478.9)"/><rect x="1026.3" y="398.9" width="7.6" height="3.8" fill="#ffffff" opacity="0.7" transform="rotate(31 1030.1 400.8)"/><rect x="1194.8" y="245.4" width="10.2" height="3.9" fill="#2a2a40" opacity="0.8" transform="rotate(15 1199.9 247.3)"/><rect x="804.3" y="197.2" width="8.1" height="3.7" fill="#e0e0e8" opacity="0.9" transform="rotate(39 808.3 199)"/><rect x="1229.7" y="642.3" width="7.7" height="3.1" fill="#f0c0d8" opacity="0.6" transform="rotate(143 1233.5 643.9)"/><rect x="1162.8" y="358.3" width="11.4" height="3.5" fill="#b8dcf8" opacity="0.8" transform="rotate(170 1168.5 360)"/><rect x="1088.3" y="423.9" width="10.9" height="3.5" fill="#1a2a3a" opacity="0.6" transform="rotate(77 1093.7 425.6)"/><rect x="1055.4" y="644.4" width="10.6" height="2.9" fill="#f0d0d8" opacity="0.7" transform="rotate(172 1060.7 645.9)"/><rect x="1160.1" y="126.3" width="10.7" height="3.8" fill="#b8dcf8" opacity="0.7" transform="rotate(106 1165.5 128.2)"/><rect x="1048.3" y="521.4" width="11.5" height="3" fill="#f8e8c0" opacity="0.7" transform="rotate(54 1054 522.9)"/><rect x="983.5" y="201.5" width="9.8" height="3.4" fill="#ffffff" opacity="0.9" transform="rotate(12 988.4 203.3)"/><rect x="803.8" y="691.5" width="7.6" height="4" fill="#f8e8c0" opacity="0.9" transform="rotate(165 807.6 693.5)"/><rect x="1009.2" y="234.9" width="8.7" height="3.1" fill="#1a2a3a" opacity="0.9" transform="rotate(3 1013.5 236.4)"/><rect x="870" y="327.1" width="10.9" height="3.9" fill="#c8f0dc" opacity="0.7" transform="rotate(51 875.4 329)"/><rect x="699.5" y="114.4" width="6.5" height="2.9" fill="#c8f0dc" opacity="0.6" transform="rotate(136 702.7 115.9)"/><rect x="948.5" y="163.1" width="8" height="2.5" fill="#f0e0c8" opacity="0.6" transform="rotate(69 952.5 164.4)"/><rect x="1069.6" y="387.5" width="8" height="3.7" fill="#1a2a3a" opacity="0.7" transform="rotate(171 1073.6 389.4)"/><rect x="780.4" y="606.2" width="7.1" height="2.6" fill="#b8dcf8" opacity="0.6" transform="rotate(76 784 607.5)"/><rect x="887" y="217.3" width="11.8" height="3.6" fill="#f0c0d8" opacity="0.6" transform="rotate(98 892.9 219.1)"/><rect x="1118" y="359.2" width="9.6" height="2.7" fill="#ffffff" opacity="0.6" transform="rotate(125 1122.8 360.6)"/><rect x="621.8" y="429.3" width="8.7" height="3.7" fill="#ffffff" opacity="0.7" transform="rotate(77 626.2 431.2)"/><rect x="1353" y="467" width="6.8" height="3.3" fill="#b8dcf8" opacity="0.6" transform="rotate(162 1356.4 468.6)"/><rect x="1127.5" y="321.7" width="11.8" height="3.1" fill="#f8e8c0" opacity="0.7" transform="rotate(15 1133.4 323.3)"/><rect x="1306.9" y="545.1" width="10.8" height="3.7" fill="#e09090" opacity="0.7" transform="rotate(109 1312.3 546.9)"/><rect x="1068.8" y="306.7" width="10.1" height="3.4" fill="#2a2a40" opacity="0.7" transform="rotate(60 1073.8 308.3)"/><rect x="862.1" y="357" width="11.1" height="4.1" fill="#e09090" opacity="0.7" transform="rotate(42 867.7 359.1)"/><rect x="734" y="714.8" width="7" height="2.8" fill="#6a2a38" opacity="0.8" transform="rotate(142 737.5 716.2)"/><rect x="891.1" y="508.5" width="9.6" height="2.6" fill="#6a2a38" opacity="0.8" transform="rotate(9 895.9 509.8)"/><rect x="1034.9" y="260" width="8" height="3.6" fill="#1a2a3a" opacity="0.7" transform="rotate(124 1038.9 261.7)"/><rect x="856.9" y="53.6" width="8.4" height="4.3" fill="#f0d0d8" opacity="0.6" transform="rotate(70 861.1 55.7)"/><rect x="1005.7" y="287.5" width="8.4" height="4.1" fill="#b8dcf8" opacity="0.6" transform="rotate(160 1010 289.5)"/><rect x="1381.9" y="427.7" width="11.2" height="4.2" fill="#f0d0d8" opacity="0.6" transform="rotate(119 1387.5 429.8)"/><rect x="1117.7" y="169.1" width="7" height="3.2" fill="#e09090" opacity="0.7" transform="rotate(116 1121.2 170.6)"/><rect x="821.9" y="378.6" width="11.7" height="4.4" fill="#6a2a38" opacity="0.7" transform="rotate(178 827.8 380.8)"/><rect x="1180.7" y="563" width="6.8" height="3" fill="#b8dcf8" opacity="0.9" transform="rotate(61 1184.1 564.5)"/><rect x="730.3" y="388.4" width="6.7" height="2.6" fill="#f0e0c8" opacity="0.8" transform="rotate(175 733.6 389.7)"/><rect x="1040.2" y="333" width="8.1" height="2.7" fill="#ffffff" opacity="0.7" transform="rotate(133 1044.3 334.3)"/><rect x="781.4" y="233.9" width="7.2" height="4.1" fill="#1a2a3a" opacity="0.8" transform="rotate(168 785 235.9)"/><rect x="811.3" y="551.4" width="7.6" height="4.1" fill="#e09090" opacity="0.7" transform="rotate(115 815.2 553.4)"/><rect x="823.2" y="218.8" width="9.1" height="3.4" fill="#ffffff" opacity="0.7" transform="rotate(177 827.8 220.5)"/><rect x="1196" y="223.9" width="11.8" height="3.9" fill="#f0c0d8" opacity="0.9" transform="rotate(90 1201.9 225.8)"/><rect x="1071.3" y="204.4" width="11.5" height="3.2" fill="#ffffff" opacity="0.6" transform="rotate(4 1077 206)"/><rect x="1256.3" y="560.5" width="7.5" height="3.8" fill="#ffffff" opacity="0.8" transform="rotate(105 1260.1 562.4)"/><rect x="663.7" y="605.6" width="10.8" height="3.7" fill="#f0c0d8" opacity="0.8" transform="rotate(70 669.1 607.5)"/><rect x="1051.8" y="166.3" width="8.4" height="3.7" fill="#f0c0d8" opacity="0.8" transform="rotate(118 1056 168.2)"/><rect x="895.6" y="341.5" width="6.9" height="3.4" fill="#c8f0dc" opacity="0.9" transform="rotate(115 899 343.3)"/><rect x="1044.8" y="54.8" width="8.7" height="4.4" fill="#2a2a40" opacity="0.6" transform="rotate(61 1049.1 56.9)"/><rect x="1137.1" y="403.2" width="8.2" height="3.9" fill="#f0c0d8" opacity="0.7" transform="rotate(87 1141.2 405.1)"/><rect x="1252" y="462.1" width="7.4" height="3.9" fill="#6a2a38" opacity="0.7" transform="rotate(173 1255.7 464.1)"/><rect x="942.5" y="422.9" width="10.4" height="3.6" fill="#f0c0d8" opacity="0.9" transform="rotate(178 947.7 424.7)"/><rect x="710" y="190.2" width="10.1" height="2.9" fill="#f0d0d8" opacity="0.8" transform="rotate(126 715.1 191.6)"/><rect x="1288.1" y="561.6" width="6.7" height="2.7" fill="#ffffff" opacity="0.6" transform="rotate(93 1291.5 563)"/><rect x="839.2" y="661.4" width="10.1" height="2.8" fill="#1a2a3a" opacity="0.9" transform="rotate(171 844.3 662.8)"/><rect x="1227.6" y="242.1" width="6.2" height="3.3" fill="#6a2a38" opacity="0.8" transform="rotate(125 1230.7 243.7)"/><rect x="854.7" y="258.9" width="11.2" height="2.8" fill="#e0e0e8" opacity="0.8" transform="rotate(22 860.4 260.3)"/><rect x="703.4" y="542.8" width="6.8" height="3.1" fill="#2a2a40" opacity="0.9" transform="rotate(109 706.8 544.3)"/><rect x="1037.1" y="208.4" width="7.7" height="3.5" fill="#1a2a3a" opacity="0.7" transform="rotate(59 1041 210.1)"/><rect x="1494" y="680.3" width="8.3" height="3" fill="#f0d0d8" opacity="0.7" transform="rotate(93 1498.2 681.8)"/><rect x="1253.8" y="481.8" width="11.8" height="3.4" fill="#b8dcf8" opacity="0.8" transform="rotate(98 1259.7 483.5)"/><rect x="879.7" y="669.2" width="8.3" height="2.8" fill="#f0e0c8" opacity="0.8" transform="rotate(80 883.8 670.6)"/><rect x="816.4" y="370.7" width="6" height="2.7" fill="#c8f0dc" opacity="0.9" transform="rotate(163 819.4 372.1)"/><rect x="813.7" y="543.2" width="9.6" height="3.4" fill="#6a2a38" opacity="0.9" transform="rotate(30 818.5 544.8)"/><rect x="1130.5" y="233" width="10.3" height="2.8" fill="#ffffff" opacity="0.6" transform="rotate(41 1135.6 234.5)"/><rect x="745.4" y="193.8" width="10.4" height="3.7" fill="#ffffff" opacity="0.7" transform="rotate(101 750.5 195.6)"/><rect x="1144.6" y="416.2" width="10" height="2.8" fill="#ffffff" opacity="0.7" transform="rotate(103 1149.6 417.6)"/><rect x="696" y="543.7" width="6.4" height="4.3" fill="#f0d0d8" opacity="0.6" transform="rotate(155 699.2 545.8)"/><rect x="1098.2" y="250.9" width="6.8" height="3.4" fill="#f8e8c0" opacity="0.8" transform="rotate(44 1101.6 252.6)"/><rect x="690" y="307.9" width="10.3" height="3" fill="#2a2a40" opacity="0.7" transform="rotate(76 695.2 309.4)"/><rect x="999.3" y="153.5" width="9.6" height="3.1" fill="#f0e0c8" opacity="0.9" transform="rotate(33 1004.1 155)"/><rect x="1203.8" y="364.2" width="11.9" height="3.6" fill="#ffffff" opacity="0.6" transform="rotate(162 1209.7 366)"/><rect x="936.8" y="559.9" width="9.2" height="4.1" fill="#2a2a40" opacity="0.6" transform="rotate(42 941.5 562)"/><rect x="889.9" y="576" width="6.8" height="4.2" fill="#2a2a40" opacity="0.9" transform="rotate(143 893.3 578.1)"/><rect x="725.5" y="527.8" width="12" height="3.7" fill="#e0e0e8" opacity="0.7" transform="rotate(65 731.4 529.6)"/><rect x="562.5" y="465.2" width="8.6" height="2.8" fill="#6a2a38" opacity="0.6" transform="rotate(18 566.8 466.6)"/><rect x="817" y="346.8" width="9.5" height="2.9" fill="#f0c0d8" opacity="0.9" transform="rotate(0 821.8 348.3)"/><rect x="631.6" y="442.8" width="6.5" height="2.8" fill="#6a2a38" opacity="0.7" transform="rotate(1 634.9 444.2)"/><rect x="1084.2" y="261.5" width="7.2" height="2.9" fill="#e0e0e8" opacity="0.6" transform="rotate(29 1087.8 263)"/><rect x="542" y="563" width="7.9" height="4" fill="#2a2a40" opacity="0.8" transform="rotate(93 546 565)"/><rect x="1042.2" y="691.9" width="9.8" height="4.4" fill="#f0e0c8" opacity="0.7" transform="rotate(171 1047.1 694.1)"/><rect x="661.4" y="551.5" width="11.7" height="3.5" fill="#f0e0c8" opacity="0.7" transform="rotate(176 667.3 553.3)"/><rect x="784.6" y="369.2" width="9.9" height="3.8" fill="#f0d0d8" opacity="0.8" transform="rotate(111 789.6 371.1)"/><rect x="940.6" y="329.3" width="6.7" height="3.2" fill="#f0c0d8" opacity="0.6" transform="rotate(105 944 330.9)"/><rect x="1454.7" y="660.5" width="9.4" height="3.5" fill="#1a2a3a" opacity="0.9" transform="rotate(128 1459.4 662.3)"/><rect x="628" y="649.4" width="9" height="3.2" fill="#ffffff" opacity="0.9" transform="rotate(167 632.5 650.9)"/><rect x="1368.8" y="498.9" width="10.2" height="4.2" fill="#6a2a38" opacity="0.9" transform="rotate(114 1373.9 501)"/><rect x="1138.9" y="295.7" width="8" height="4" fill="#f8e8c0" opacity="0.9" transform="rotate(159 1142.9 297.7)"/><rect x="1143.9" y="711.4" width="6.4" height="4" fill="#f8e8c0" opacity="0.6" transform="rotate(68 1147.1 713.4)"/><rect x="1071" y="425.9" width="7.4" height="4" fill="#6a2a38" opacity="0.7" transform="rotate(7 1074.7 427.9)"/><rect x="563.4" y="393" width="10.7" height="3.1" fill="#f0c0d8" opacity="0.9" transform="rotate(5 568.7 394.5)"/><rect x="669.9" y="576" width="6.2" height="4.5" fill="#ffffff" opacity="0.7" transform="rotate(125 673 578.2)"/><rect x="884.3" y="538.3" width="11.5" height="3.8" fill="#ffffff" opacity="0.6" transform="rotate(23 890.1 540.2)"/><rect x="926.2" y="592.5" width="11.8" height="2.9" fill="#ffffff" opacity="0.6" transform="rotate(65 932.1 594)"/><rect x="1189" y="68.9" width="9.5" height="3.7" fill="#ffffff" opacity="0.9" transform="rotate(105 1193.7 70.8)"/><rect x="1056.4" y="259.7" width="10.8" height="2.9" fill="#2a2a40" opacity="0.6" transform="rotate(79 1061.8 261.2)"/><rect x="1057.2" y="462.8" width="10.7" height="2.8" fill="#c8f0dc" opacity="0.8" transform="rotate(21 1062.5 464.2)"/><rect x="1171.5" y="652.7" width="9.6" height="3.6" fill="#f8e8c0" opacity="0.8" transform="rotate(29 1176.3 654.4)"/><rect x="1035.4" y="417.9" width="11.9" height="3.4" fill="#ffffff" opacity="0.9" transform="rotate(55 1041.4 419.6)"/><rect x="744.2" y="-5.5" width="11.2" height="2.6" fill="#ffffff" opacity="0.6" transform="rotate(4 749.8 -4.2)"/><rect x="943.8" y="239.6" width="10.2" height="2.9" fill="#6a2a38" opacity="0.8" transform="rotate(176 948.9 241.1)"/><rect x="1058.2" y="611.9" width="10.7" height="4.5" fill="#e0e0e8" opacity="0.8" transform="rotate(53 1063.5 614.2)"/><rect x="814" y="396.4" width="11.1" height="2.9" fill="#e0e0e8" opacity="0.6" transform="rotate(90 819.5 397.8)"/><rect x="735.9" y="389.7" width="8.5" height="3.3" fill="#ffffff" opacity="0.9" transform="rotate(133 740.1 391.4)"/><rect x="583.5" y="554" width="7" height="2.7" fill="#ffffff" opacity="0.6" transform="rotate(0 587.1 555.3)"/><rect x="1272" y="374.2" width="9.5" height="3.8" fill="#f0d0d8" opacity="0.6" transform="rotate(30 1276.8 376.1)"/><rect x="798.6" y="238.7" width="7.6" height="4.2" fill="#ffffff" opacity="0.8" transform="rotate(84 802.4 240.8)"/><rect x="939.1" y="296.4" width="7" height="2.7" fill="#2a2a40" opacity="0.9" transform="rotate(130 942.6 297.8)"/><rect x="1043.4" y="492.9" width="6.7" height="4.5" fill="#f0c0d8" opacity="0.7" transform="rotate(165 1046.8 495.1)"/><rect x="1093.7" y="293.8" width="11.2" height="2.8" fill="#f0c0d8" opacity="0.9" transform="rotate(153 1099.2 295.2)"/><rect x="1061.4" y="551.6" width="6.5" height="3.3" fill="#2a2a40" opacity="0.9" transform="rotate(43 1064.7 553.2)"/><rect x="826.1" y="256.9" width="11" height="4.3" fill="#f0c0d8" opacity="0.9" transform="rotate(78 831.6 259.1)"/><rect x="919.8" y="185" width="11.7" height="4.1" fill="#c8f0dc" opacity="0.6" transform="rotate(57 925.6 187.1)"/><rect x="1327.9" y="358.6" width="11.7" height="4.2" fill="#f0d0d8" opacity="0.9" transform="rotate(88 1333.7 360.7)"/><rect x="843.3" y="513" width="7.7" height="3.4" fill="#e09090" opacity="0.7" transform="rotate(122 847.1 514.7)"/><rect x="1011" y="87" width="11.4" height="2.7" fill="#b8dcf8" opacity="0.9" transform="rotate(149 1016.7 88.3)"/><rect x="1352.6" y="655.2" width="7.9" height="3.8" fill="#b8dcf8" opacity="0.8" transform="rotate(4 1356.5 657.1)"/><rect x="926.5" y="162.2" width="7.4" height="3" fill="#ffffff" opacity="0.7" transform="rotate(75 930.2 163.7)"/><rect x="962.7" y="236.4" width="7.5" height="3.1" fill="#ffffff" opacity="0.8" transform="rotate(35 966.4 237.9)"/><rect x="910" y="224.5" width="7.9" height="2.6" fill="#ffffff" opacity="0.8" transform="rotate(28 914 225.8)"/><rect x="892.3" y="306.7" width="7" height="2.7" fill="#ffffff" opacity="0.7" transform="rotate(86 895.8 308.1)"/><rect x="1353" y="315.1" width="11.6" height="3.9" fill="#f0d0d8" opacity="0.7" transform="rotate(40 1358.8 317)"/><rect x="1172" y="601.3" width="9.6" height="3" fill="#b8dcf8" opacity="0.9" transform="rotate(133 1176.8 602.8)"/><rect x="1212.3" y="407.2" width="9.3" height="2.9" fill="#f0e0c8" opacity="0.6" transform="rotate(82 1217 408.6)"/><rect x="1176.3" y="518.7" width="9.1" height="4.1" fill="#e09090" opacity="0.7" transform="rotate(158 1180.8 520.8)"/><rect x="1032.6" y="508.9" width="7.4" height="3.4" fill="#ffffff" opacity="0.7" transform="rotate(46 1036.3 510.6)"/><rect x="762.2" y="406" width="10.9" height="3" fill="#f8e8c0" opacity="0.6" transform="rotate(164 767.6 407.5)"/><rect x="1088.8" y="439.2" width="7.6" height="3.2" fill="#ffffff" opacity="0.8" transform="rotate(41 1092.6 440.8)"/><rect x="1028.7" y="295.7" width="7.8" height="4.5" fill="#e0e0e8" opacity="0.9" transform="rotate(1 1032.6 298)"/><rect x="908.1" y="134.3" width="9.5" height="2.8" fill="#ffffff" opacity="0.9" transform="rotate(67 912.9 135.7)"/><rect x="1329.6" y="506.9" width="8.3" height="4.4" fill="#b8dcf8" opacity="0.6" transform="rotate(18 1333.7 509.1)"/><rect x="1104.6" y="313" width="7.7" height="3.9" fill="#e0e0e8" opacity="0.8" transform="rotate(164 1108.4 314.9)"/><rect x="1017.4" y="424.6" width="10.5" height="2.8" fill="#ffffff" opacity="0.7" transform="rotate(112 1022.6 426)"/><rect x="1290.4" y="226.2" width="10.5" height="3.2" fill="#c8f0dc" opacity="0.8" transform="rotate(148 1295.6 227.8)"/><rect x="717.6" y="57.3" width="9.3" height="4.4" fill="#ffffff" opacity="0.6" transform="rotate(35 722.2 59.4)"/><rect x="1011.9" y="179.9" width="11.9" height="2.9" fill="#ffffff" opacity="0.9" transform="rotate(35 1017.9 181.3)"/><rect x="875.7" y="115.4" width="10" height="3.7" fill="#2a2a40" opacity="0.7" transform="rotate(36 880.7 117.3)"/><rect x="1000" y="445.8" width="11.1" height="3.1" fill="#2a2a40" opacity="0.6" transform="rotate(2 1005.5 447.4)"/><rect x="1162.4" y="418.4" width="11.8" height="3.2" fill="#ffffff" opacity="0.8" transform="rotate(31 1168.3 420)"/><rect x="1108.3" y="308" width="8.6" height="3.7" fill="#f0c0d8" opacity="0.9" transform="rotate(73 1112.6 309.8)"/><rect x="902.9" y="179.2" width="10.1" height="2.7" fill="#f0e0c8" opacity="0.6" transform="rotate(0 908 180.5)"/><rect x="1009.2" y="299.5" width="7.8" height="3.3" fill="#f0c0d8" opacity="0.7" transform="rotate(77 1013.1 301.1)"/><rect x="747.9" y="339" width="6.8" height="3.5" fill="#e0e0e8" opacity="0.8" transform="rotate(2 751.3 340.8)"/><rect x="1027.2" y="58.5" width="11.3" height="4.3" fill="#e09090" opacity="0.7" transform="rotate(141 1032.9 60.6)"/><rect x="765.6" y="344.9" width="10.2" height="3.6" fill="#e09090" opacity="0.8" transform="rotate(105 770.8 346.7)"/><rect x="1103.1" y="564.7" width="6.3" height="4.5" fill="#1a2a3a" opacity="0.7" transform="rotate(58 1106.2 567)"/><rect x="1116.3" y="427.6" width="11.3" height="4.3" fill="#f0c0d8" opacity="0.7" transform="rotate(56 1122 429.7)"/><rect x="633.4" y="514.3" width="7.8" height="4.5" fill="#f0c0d8" opacity="0.8" transform="rotate(119 637.3 516.5)"/><rect x="740.7" y="448" width="10.4" height="3.2" fill="#f0d0d8" opacity="0.9" transform="rotate(64 745.9 449.6)"/><rect x="979" y="143.5" width="6.9" height="2.9" fill="#2a2a40" opacity="0.9" transform="rotate(94 982.4 145)"/><rect x="864.6" y="183.7" width="8.4" height="3.4" fill="#2a2a40" opacity="0.8" transform="rotate(170 868.8 185.4)"/><rect x="681.4" y="147.9" width="7.9" height="3.1" fill="#f8e8c0" opacity="0.8" transform="rotate(82 685.3 149.4)"/><rect x="1218.7" y="346.9" width="7.4" height="2.9" fill="#1a2a3a" opacity="0.8" transform="rotate(153 1222.4 348.4)"/><rect x="1282.6" y="121.4" width="10.4" height="3.1" fill="#6a2a38" opacity="0.9" transform="rotate(11 1287.8 122.9)"/><rect x="791" y="311.2" width="6.9" height="2.6" fill="#1a2a3a" opacity="0.6" transform="rotate(131 794.5 312.5)"/><rect x="1014.7" y="283.4" width="7.9" height="3.6" fill="#e0e0e8" opacity="0.8" transform="rotate(169 1018.7 285.2)"/><rect x="827.7" y="75.6" width="9.4" height="3.7" fill="#2a2a40" opacity="0.6" transform="rotate(142 832.4 77.4)"/><rect x="1075.5" y="393.1" width="7.4" height="3.2" fill="#f0c0d8" opacity="0.7" transform="rotate(129 1079.1 394.6)"/><rect x="999.4" y="306" width="7.5" height="4.3" fill="#2a2a40" opacity="0.9" transform="rotate(10 1003.2 308.2)"/><rect x="897.9" y="529.9" width="6.7" height="3.7" fill="#ffffff" opacity="0.7" transform="rotate(127 901.3 531.8)"/><rect x="985.1" y="80.9" width="8.6" height="2.6" fill="#e09090" opacity="0.8" transform="rotate(168 989.4 82.2)"/><rect x="811.8" y="578" width="11.5" height="4.1" fill="#6a2a38" opacity="0.9" transform="rotate(120 817.5 580)"/><rect x="1079.3" y="163.3" width="12" height="3.4" fill="#ffffff" opacity="0.6" transform="rotate(97 1085.2 165)"/><rect x="814.1" y="433.1" width="9.7" height="2.7" fill="#c8f0dc" opacity="0.8" transform="rotate(55 818.9 434.4)"/><rect x="481.2" y="659.4" width="7.6" height="4.4" fill="#f0d0d8" opacity="0.6" transform="rotate(96 485 661.6)"/><rect x="1025.2" y="720.5" width="6.5" height="4.3" fill="#f0e0c8" opacity="0.8" transform="rotate(3 1028.4 722.7)"/><rect x="1374.4" y="379.2" width="8.2" height="4" fill="#1a2a3a" opacity="0.6" transform="rotate(83 1378.5 381.2)"/><rect x="1002.9" y="405.5" width="9.2" height="2.7" fill="#2a2a40" opacity="0.6" transform="rotate(54 1007.5 406.9)"/><rect x="983.2" y="473.7" width="6.2" height="2.8" fill="#f8e8c0" opacity="0.7" transform="rotate(179 986.3 475)"/><rect x="543.5" y="513.5" width="10.2" height="2.6" fill="#c8f0dc" opacity="0.8" transform="rotate(24 548.6 514.8)"/><rect x="1101.3" y="113.3" width="6.3" height="4.1" fill="#2a2a40" opacity="0.8" transform="rotate(144 1104.4 115.4)"/><rect x="651.4" y="628.1" width="11.1" height="3" fill="#6a2a38" opacity="0.9" transform="rotate(53 657 629.6)"/><rect x="1038.7" y="176.4" width="7.8" height="3.7" fill="#6a2a38" opacity="0.6" transform="rotate(45 1042.6 178.2)"/><rect x="968.3" y="440.9" width="7.8" height="3.6" fill="#1a2a3a" opacity="0.7" transform="rotate(76 972.2 442.6)"/><rect x="896.1" y="631.4" width="10.9" height="3.3" fill="#ffffff" opacity="0.8" transform="rotate(13 901.5 633.1)"/><rect x="931.1" y="565.3" width="9.3" height="4" fill="#1a2a3a" opacity="0.9" transform="rotate(105 935.8 567.3)"/><rect x="883.1" y="271.5" width="9.1" height="3.9" fill="#2a2a40" opacity="0.8" transform="rotate(118 887.7 273.4)"/><rect x="833.2" y="490.8" width="6.8" height="4.3" fill="#e0e0e8" opacity="0.7" transform="rotate(88 836.5 492.9)"/><rect x="986.8" y="188.1" width="8.5" height="3.2" fill="#e0e0e8" opacity="0.8" transform="rotate(41 991 189.7)"/><rect x="884.4" y="214.2" width="7.5" height="2.8" fill="#f0e0c8" opacity="0.9" transform="rotate(175 888.2 215.6)"/><rect x="887.9" y="207.8" width="7.1" height="3" fill="#e0e0e8" opacity="0.6" transform="rotate(135 891.5 209.3)"/><rect x="737.4" y="431.5" width="7.3" height="4.3" fill="#ffffff" opacity="0.8" transform="rotate(60 741 433.7)"/><rect x="1105.8" y="234.5" width="6.1" height="2.6" fill="#f0e0c8" opacity="0.6" transform="rotate(149 1108.9 235.8)"/><rect x="986.6" y="375.1" width="10.2" height="2.9" fill="#ffffff" opacity="0.9" transform="rotate(133 991.7 376.6)"/><rect x="654.5" y="350.2" width="8.8" height="3.5" fill="#e0e0e8" opacity="0.9" transform="rotate(157 658.8 352)"/><rect x="1150.1" y="295.5" width="7.2" height="3.1" fill="#e09090" opacity="0.8" transform="rotate(61 1153.7 297.1)"/><rect x="721.5" y="496.6" width="10.9" height="3.8" fill="#ffffff" opacity="0.8" transform="rotate(59 727 498.6)"/><rect x="798.4" y="399.8" width="11.4" height="4" fill="#2a2a40" opacity="0.9" transform="rotate(92 804.1 401.8)"/><rect x="594.9" y="400.5" width="11.8" height="3" fill="#f0e0c8" opacity="0.8" transform="rotate(144 600.8 402)"/><rect x="979.2" y="159.4" width="11.5" height="4.1" fill="#f0d0d8" opacity="0.7" transform="rotate(53 984.9 161.4)"/><rect x="1052.1" y="640.8" width="7.9" height="3.1" fill="#1a2a3a" opacity="0.6" transform="rotate(94 1056.1 642.4)"/><rect x="1164.1" y="25.3" width="7.3" height="4" fill="#ffffff" opacity="0.6" transform="rotate(130 1167.8 27.3)"/><rect x="968" y="413.9" width="6.7" height="3" fill="#ffffff" opacity="0.9" transform="rotate(169 971.4 415.4)"/><rect x="1122.5" y="191.9" width="9" height="3.2" fill="#f0d0d8" opacity="0.8" transform="rotate(77 1127 193.5)"/><rect x="915.8" y="344.3" width="8.4" height="2.6" fill="#b8dcf8" opacity="0.8" transform="rotate(127 919.9 345.6)"/><rect x="991.1" y="295.7" width="10.4" height="3.9" fill="#f0c0d8" opacity="0.6" transform="rotate(18 996.4 297.6)"/><rect x="804" y="656.9" width="10.8" height="3.4" fill="#6a2a38" opacity="0.8" transform="rotate(121 809.3 658.6)"/><rect x="907.8" y="538.9" width="8.8" height="4.4" fill="#f0e0c8" opacity="0.6" transform="rotate(3 912.2 541)"/><rect x="1144.1" y="474.1" width="9.3" height="2.8" fill="#ffffff" opacity="0.9" transform="rotate(86 1148.8 475.5)"/><rect x="1068.4" y="399.1" width="7.4" height="4.5" fill="#ffffff" opacity="0.7" transform="rotate(102 1072.1 401.3)"/><rect x="929" y="30.2" width="8.1" height="3.5" fill="#b8dcf8" opacity="0.9" transform="rotate(60 933.1 31.9)"/><rect x="1267.6" y="577.1" width="11.6" height="2.8" fill="#e0e0e8" opacity="0.9" transform="rotate(40 1273.4 578.5)"/><rect x="1177" y="412.6" width="8.5" height="4.1" fill="#ffffff" opacity="0.7" transform="rotate(30 1181.2 414.6)"/><rect x="1420.6" y="655" width="8.4" height="4.4" fill="#f0d0d8" opacity="0.7" transform="rotate(92 1424.8 657.2)"/><rect x="962.6" y="163.1" width="10.7" height="3.1" fill="#1a2a3a" opacity="0.7" transform="rotate(128 967.9 164.6)"/><rect x="944.5" y="400.5" width="11.8" height="3.6" fill="#e0e0e8" opacity="0.9" transform="rotate(98 950.4 402.3)"/><rect x="1100" y="214.6" width="6.1" height="3.7" fill="#e09090" opacity="0.7" transform="rotate(59 1103.1 216.5)"/><rect x="761.5" y="249.9" width="10.6" height="3.8" fill="#f0e0c8" opacity="0.8" transform="rotate(171 766.8 251.8)"/><rect x="1010.6" y="396.1" width="11.8" height="3.4" fill="#6a2a38" opacity="0.8" transform="rotate(36 1016.5 397.8)"/><rect x="918" y="138" width="7.6" height="3.2" fill="#f0d0d8" opacity="0.7" transform="rotate(87 921.8 139.6)"/><rect x="997.9" y="489" width="10.5" height="3.5" fill="#e09090" opacity="0.6" transform="rotate(29 1003.1 490.8)"/><rect x="958.7" y="222.8" width="11.6" height="3.7" fill="#f8e8c0" opacity="0.9" transform="rotate(98 964.5 224.6)"/><rect x="842.3" y="177.2" width="8.9" height="3.6" fill="#c8f0dc" opacity="0.6" transform="rotate(3 846.7 179)"/><rect x="1057" y="167.1" width="8.7" height="3.8" fill="#2a2a40" opacity="0.8" transform="rotate(44 1061.4 169)"/><rect x="1008.1" y="645.5" width="7.1" height="3.4" fill="#ffffff" opacity="0.7" transform="rotate(129 1011.7 647.2)"/><rect x="491.3" y="548.2" width="7.3" height="3.9" fill="#c8f0dc" opacity="0.6" transform="rotate(34 495 550.2)"/><rect x="1063.5" y="71.1" width="9.5" height="3.8" fill="#e0e0e8" opacity="0.6" transform="rotate(0 1068.3 73)"/><rect x="1115" y="335.9" width="9.3" height="2.7" fill="#2a2a40" opacity="0.7" transform="rotate(120 1119.6 337.3)"/><rect x="793.3" y="641.8" width="6.1" height="3.7" fill="#ffffff" opacity="0.6" transform="rotate(88 796.4 643.6)"/><rect x="1391.2" y="422.4" width="9.5" height="3.1" fill="#ffffff" opacity="0.9" transform="rotate(121 1396 423.9)"/><rect x="704.3" y="383" width="7.2" height="3.6" fill="#f0e0c8" opacity="0.6" transform="rotate(164 707.9 384.8)"/><rect x="1246" y="299.5" width="11.6" height="4.3" fill="#f0e0c8" opacity="0.7" transform="rotate(4 1251.9 301.6)"/><rect x="713.2" y="284.2" width="7.8" height="3.1" fill="#b8dcf8" opacity="0.8" transform="rotate(12 717.1 285.8)"/><rect x="1064.6" y="499.4" width="9.9" height="3.1" fill="#1a2a3a" opacity="0.8" transform="rotate(39 1069.5 501)"/><rect x="1109.5" y="347.3" width="9.5" height="2.6" fill="#f0c0d8" opacity="0.8" transform="rotate(74 1114.3 348.6)"/><rect x="1073.3" y="250.8" width="8.8" height="3.3" fill="#ffffff" opacity="0.6" transform="rotate(147 1077.7 252.4)"/><rect x="607.4" y="612.4" width="11.5" height="3.5" fill="#b8dcf8" opacity="0.9" transform="rotate(71 613.1 614.2)"/><rect x="716.5" y="223.9" width="10.8" height="3.6" fill="#ffffff" opacity="0.6" transform="rotate(131 721.9 225.6)"/><rect x="783.4" y="349.1" width="9.6" height="4.5" fill="#f0c0d8" opacity="0.6" transform="rotate(92 788.2 351.4)"/><rect x="984.9" y="500.4" width="7" height="3.1" fill="#ffffff" opacity="0.6" transform="rotate(124 988.4 502)"/><rect x="974.7" y="197.4" width="11.7" height="2.8" fill="#e09090" opacity="0.6" transform="rotate(61 980.5 198.8)"/><rect x="1354.8" y="501.5" width="9.9" height="4.4" fill="#1a2a3a" opacity="0.8" transform="rotate(45 1359.7 503.7)"/><rect x="1342.4" y="386.4" width="6.1" height="3" fill="#ffffff" opacity="0.8" transform="rotate(110 1345.5 387.9)"/><rect x="930" y="642.5" width="8.4" height="3.7" fill="#f0d0d8" opacity="0.6" transform="rotate(54 934.3 644.4)"/><rect x="968.5" y="66.9" width="6.8" height="4.4" fill="#ffffff" opacity="0.7" transform="rotate(104 971.9 69)"/><rect x="775.3" y="403.6" width="6.7" height="3.5" fill="#f0d0d8" opacity="0.9" transform="rotate(152 778.7 405.3)"/><rect x="748.7" y="658.8" width="11.4" height="2.9" fill="#ffffff" opacity="0.6" transform="rotate(65 754.3 660.2)"/><rect x="1263.4" y="129.9" width="6.3" height="3.8" fill="#c8f0dc" opacity="0.9" transform="rotate(35 1266.6 131.8)"/><rect x="1283.3" y="590.2" width="8.3" height="3.9" fill="#f0e0c8" opacity="0.6" transform="rotate(2 1287.4 592.2)"/><rect x="1111.3" y="7.9" width="9.9" height="3.5" fill="#2a2a40" opacity="0.9" transform="rotate(70 1116.3 9.7)"/><rect x="1094.5" y="276.4" width="8.4" height="4.2" fill="#f8e8c0" opacity="0.9" transform="rotate(97 1098.7 278.5)"/><rect x="855.7" y="520" width="10" height="3.4" fill="#2a2a40" opacity="0.7" transform="rotate(118 860.7 521.7)"/><rect x="718" y="428" width="11.5" height="3.9" fill="#c8f0dc" opacity="0.9" transform="rotate(65 723.8 430)"/><rect x="829.3" y="111.6" width="10.6" height="2.6" fill="#2a2a40" opacity="0.9" transform="rotate(137 834.7 112.9)"/><rect x="1103.8" y="493.6" width="11.4" height="3.5" fill="#f8e8c0" opacity="0.9" transform="rotate(67 1109.5 495.3)"/><rect x="1055.7" y="656.6" width="10.3" height="3.6" fill="#e0e0e8" opacity="0.8" transform="rotate(171 1060.9 658.4)"/><rect x="1274.4" y="719.3" width="6.2" height="3.3" fill="#f0d0d8" opacity="0.6" transform="rotate(42 1277.5 721)"/><rect x="1210.8" y="241.8" width="8.3" height="2.8" fill="#ffffff" opacity="0.8" transform="rotate(135 1214.9 243.2)"/><rect x="838.6" y="303.2" width="6.6" height="3.7" fill="#ffffff" opacity="0.8" transform="rotate(159 841.9 305.1)"/><rect x="1074.2" y="140.6" width="6.1" height="3.4" fill="#ffffff" opacity="0.7" transform="rotate(149 1077.3 142.3)"/><rect x="551" y="542.5" width="11.4" height="3.4" fill="#f0e0c8" opacity="0.6" transform="rotate(32 556.8 544.2)"/><rect x="1021.1" y="208.2" width="9.9" height="3.1" fill="#f0d0d8" opacity="0.7" transform="rotate(61 1026.1 209.8)"/><rect x="845.7" y="195.9" width="9.6" height="3.1" fill="#e0e0e8" opacity="0.6" transform="rotate(57 850.5 197.4)"/><rect x="739.5" y="331.5" width="11.6" height="3" fill="#b8dcf8" opacity="0.8" transform="rotate(153 745.2 333)"/><rect x="1029.1" y="108.7" width="7.6" height="3" fill="#1a2a3a" opacity="0.9" transform="rotate(135 1032.9 110.2)"/><rect x="1311.4" y="638.5" width="10.7" height="3.4" fill="#b8dcf8" opacity="0.9" transform="rotate(79 1316.8 640.2)"/><rect x="801.9" y="65.1" width="9" height="3.2" fill="#ffffff" opacity="0.7" transform="rotate(179 806.4 66.7)"/><rect x="1238" y="207.6" width="7.1" height="4.5" fill="#f0c0d8" opacity="0.7" transform="rotate(173 1241.6 209.8)"/><rect x="1088.4" y="416.2" width="7.6" height="4.3" fill="#f8e8c0" opacity="0.8" transform="rotate(149 1092.2 418.3)"/><rect x="865.9" y="504.3" width="9.5" height="2.6" fill="#ffffff" opacity="0.9" transform="rotate(70 870.7 505.6)"/><rect x="692.7" y="362.3" width="8.2" height="2.9" fill="#e09090" opacity="0.8" transform="rotate(52 696.8 363.7)"/><rect x="718.3" y="726.6" width="6.8" height="2.8" fill="#b8dcf8" opacity="0.9" transform="rotate(85 721.7 728)"/><rect x="985.9" y="96.1" width="6.8" height="3.1" fill="#c8f0dc" opacity="0.6" transform="rotate(96 989.3 97.6)"/><rect x="1107.5" y="233.6" width="6.3" height="2.8" fill="#2a2a40" opacity="0.9" transform="rotate(147 1110.6 235)"/><rect x="698.1" y="508.3" width="11.1" height="3.4" fill="#f0c0d8" opacity="0.9" transform="rotate(130 703.6 510)"/><rect x="1094.5" y="487.1" width="10.1" height="2.8" fill="#c8f0dc" opacity="0.6" transform="rotate(82 1099.6 488.4)"/><rect x="1161.2" y="595.5" width="9.6" height="3.5" fill="#6a2a38" opacity="0.6" transform="rotate(140 1165.9 597.2)"/><rect x="897.4" y="369.4" width="9.6" height="3" fill="#e0e0e8" opacity="0.9" transform="rotate(158 902.2 371)"/><rect x="1074" y="221.3" width="6.7" height="2.9" fill="#f0d0d8" opacity="0.6" transform="rotate(25 1077.4 222.7)"/><rect x="874.9" y="28.2" width="6.4" height="3.2" fill="#f0c0d8" opacity="0.8" transform="rotate(40 878.1 29.8)"/><rect x="1135.3" y="413.7" width="6.4" height="4.3" fill="#e09090" opacity="0.6" transform="rotate(12 1138.5 415.9)"/><rect x="1077.2" y="532.1" width="8" height="3" fill="#e09090" opacity="0.8" transform="rotate(95 1081.2 533.6)"/><rect x="815.1" y="504" width="7.5" height="3.3" fill="#f0e0c8" opacity="0.7" transform="rotate(11 818.9 505.7)"/><rect x="803.5" y="553.4" width="7.8" height="2.6" fill="#6a2a38" opacity="0.6" transform="rotate(0 807.4 554.7)"/><rect x="921.8" y="486.4" width="9.6" height="3.7" fill="#f0c0d8" opacity="0.8" transform="rotate(37 926.6 488.3)"/><rect x="1045.7" y="301.3" width="9" height="2.7" fill="#f0c0d8" opacity="0.9" transform="rotate(176 1050.2 302.6)"/><rect x="710.1" y="122" width="8.4" height="3.2" fill="#e09090" opacity="0.6" transform="rotate(126 714.3 123.6)"/><rect x="690.3" y="436.1" width="9.6" height="2.9" fill="#e0e0e8" opacity="0.7" transform="rotate(139 695.1 437.6)"/><rect x="921.2" y="107.3" width="8.4" height="4.3" fill="#f0d0d8" opacity="0.6" transform="rotate(108 925.4 109.4)"/><rect x="1420.4" y="702.6" width="9.3" height="3.9" fill="#2a2a40" opacity="0.8" transform="rotate(22 1425 704.6)"/><rect x="993.1" y="393.4" width="10.6" height="2.7" fill="#e09090" opacity="0.6" transform="rotate(25 998.4 394.8)"/><rect x="1047.8" y="390.9" width="7.1" height="3.5" fill="#e0e0e8" opacity="0.7" transform="rotate(80 1051.3 392.6)"/><rect x="868.3" y="531.5" width="11.1" height="4.3" fill="#f0e0c8" opacity="0.7" transform="rotate(30 873.8 533.6)"/><rect x="1073.5" y="161.4" width="10.9" height="3.8" fill="#2a2a40" opacity="0.9" transform="rotate(179 1078.9 163.3)"/><rect x="986.7" y="459.5" width="6.5" height="3.4" fill="#f0c0d8" opacity="0.9" transform="rotate(112 989.9 461.2)"/><rect x="1020.7" y="294.5" width="7.2" height="3.6" fill="#e0e0e8" opacity="0.6" transform="rotate(146 1024.3 296.3)"/><rect x="781" y="146.7" width="6.6" height="3.5" fill="#2a2a40" opacity="0.7" transform="rotate(103 784.3 148.4)"/><rect x="946.8" y="187.7" width="9.9" height="2.7" fill="#f0e0c8" opacity="0.8" transform="rotate(156 951.8 189.1)"/><rect x="1130.4" y="276.3" width="8.6" height="3.3" fill="#1a2a3a" opacity="0.9" transform="rotate(68 1134.8 278)"/><rect x="1003.4" y="26.4" width="10.5" height="3.9" fill="#f0e0c8" opacity="0.6" transform="rotate(84 1008.6 28.3)"/><rect x="835.9" y="162.2" width="10.7" height="4.4" fill="#f8e8c0" opacity="0.9" transform="rotate(14 841.2 164.4)"/><rect x="762.3" y="526.1" width="6.5" height="3.3" fill="#e09090" opacity="0.9" transform="rotate(103 765.6 527.8)"/><rect x="731.5" y="268.9" width="8.5" height="2.5" fill="#1a2a3a" opacity="0.9" transform="rotate(168 735.7 270.2)"/><rect x="896.8" y="55.8" width="9.1" height="4.2" fill="#f0c0d8" opacity="0.9" transform="rotate(124 901.4 57.9)"/><rect x="571.6" y="506.3" width="12" height="3.5" fill="#e09090" opacity="0.9" transform="rotate(37 577.6 508)"/><rect x="719.9" y="516.6" width="11.4" height="4.4" fill="#ffffff" opacity="0.6" transform="rotate(40 725.5 518.8)"/><rect x="1413.2" y="518.6" width="9.4" height="2.8" fill="#6a2a38" opacity="0.9" transform="rotate(42 1417.9 520)"/><rect x="878.2" y="158.2" width="7.3" height="4.2" fill="#2a2a40" opacity="0.7" transform="rotate(20 881.9 160.4)"/><rect x="514" y="557.2" width="7.6" height="4" fill="#f0d0d8" opacity="0.8" transform="rotate(53 517.8 559.2)"/><rect x="1201.3" y="188.4" width="9.4" height="3.4" fill="#f0c0d8" opacity="0.8" transform="rotate(132 1206 190.1)"/><rect x="561.4" y="400.8" width="9.6" height="3.9" fill="#f8e8c0" opacity="0.6" transform="rotate(18 566.2 402.8)"/><rect x="736.6" y="310.8" width="8.8" height="3.4" fill="#f8e8c0" opacity="0.9" transform="rotate(139 740.9 312.5)"/><rect x="1194.2" y="56" width="11.4" height="3.3" fill="#c8f0dc" opacity="0.9" transform="rotate(30 1199.9 57.7)"/><rect x="923.5" y="157.7" width="8.2" height="2.6" fill="#b8dcf8" opacity="0.7" transform="rotate(3 927.6 159)"/><rect x="877.5" y="169.2" width="7.7" height="2.8" fill="#2a2a40" opacity="0.9" transform="rotate(4 881.4 170.6)"/><rect x="1010.9" y="602.8" width="9.2" height="2.9" fill="#6a2a38" opacity="0.7" transform="rotate(80 1015.5 604.3)"/><rect x="928.1" y="104.6" width="9.1" height="3.7" fill="#1a2a3a" opacity="0.6" transform="rotate(117 932.6 106.4)"/><rect x="824.6" y="199.9" width="7.7" height="4" fill="#ffffff" opacity="0.6" transform="rotate(45 828.4 201.9)"/><rect x="1075.2" y="358.1" width="6.6" height="2.8" fill="#ffffff" opacity="0.9" transform="rotate(87 1078.5 359.4)"/><rect x="807.2" y="182" width="11.9" height="2.9" fill="#e0e0e8" opacity="0.7" transform="rotate(140 813.2 183.5)"/><rect x="936.7" y="586.5" width="11.7" height="3.1" fill="#f0d0d8" opacity="0.8" transform="rotate(57 942.5 588)"/><rect x="941.5" y="256.7" width="11.8" height="4.4" fill="#e09090" opacity="0.7" transform="rotate(107 947.4 258.9)"/><rect x="1222.2" y="658.6" width="8" height="3.9" fill="#2a2a40" opacity="0.8" transform="rotate(130 1226.2 660.6)"/><rect x="965.6" y="652.3" width="7.2" height="3.7" fill="#e09090" opacity="0.6" transform="rotate(90 969.2 654.1)"/><rect x="848.7" y="339.9" width="11.1" height="4" fill="#b8dcf8" opacity="0.6" transform="rotate(40 854.2 341.9)"/><rect x="722.7" y="504" width="8.9" height="3" fill="#f8e8c0" opacity="0.9" transform="rotate(106 727.1 505.5)"/><rect x="741.6" y="175.6" width="7.5" height="3.7" fill="#f0c0d8" opacity="0.9" transform="rotate(150 745.3 177.5)"/><rect x="871.4" y="665.5" width="11.6" height="4.3" fill="#e09090" opacity="0.9" transform="rotate(59 877.2 667.6)"/><rect x="755.1" y="442.1" width="8.8" height="3.8" fill="#ffffff" opacity="0.9" transform="rotate(62 759.5 444)"/><rect x="975.8" y="552.2" width="11.6" height="4.1" fill="#f0d0d8" opacity="0.9" transform="rotate(133 981.7 554.3)"/><rect x="776.6" y="381.5" width="8.2" height="2.7" fill="#e0e0e8" opacity="0.7" transform="rotate(142 780.7 382.8)"/><rect x="1184.4" y="449.3" width="10.3" height="3.6" fill="#f0e0c8" opacity="0.7" transform="rotate(146 1189.6 451.1)"/><rect x="904.4" y="298.8" width="9.2" height="2.5" fill="#1a2a3a" opacity="0.7" transform="rotate(110 909 300.1)"/><rect x="933.4" y="268" width="9.1" height="3.8" fill="#f0d0d8" opacity="0.8" transform="rotate(142 937.9 269.9)"/><rect x="976.4" y="316.6" width="11" height="3.6" fill="#ffffff" opacity="0.9" transform="rotate(125 981.9 318.4)"/><rect x="971.3" y="416.6" width="8.6" height="3.4" fill="#6a2a38" opacity="0.7" transform="rotate(56 975.6 418.3)"/><rect x="1177" y="394.6" width="6.3" height="4.1" fill="#b8dcf8" opacity="0.7" transform="rotate(121 1180.1 396.6)"/><rect x="1096" y="122.1" width="8.6" height="2.8" fill="#6a2a38" opacity="0.8" transform="rotate(170 1100.2 123.5)"/><rect x="847.2" y="175.2" width="8.6" height="2.8" fill="#b8dcf8" opacity="0.9" transform="rotate(60 851.5 176.6)"/><rect x="772.3" y="431.7" width="9.3" height="3.2" fill="#e0e0e8" opacity="0.8" transform="rotate(103 777 433.3)"/><rect x="1244.4" y="257.1" width="6.1" height="3.7" fill="#6a2a38" opacity="0.9" transform="rotate(135 1247.5 258.9)"/><rect x="998" y="250.8" width="7.4" height="4" fill="#ffffff" opacity="0.6" transform="rotate(94 1001.7 252.8)"/></g>

<g filter="url(#blur1)">
 <path d="M586 590 Q624 570 662 590 L676 710 L578 710 Z" fill="#14122a"/>
 <path d="M600 600 L586 660 L596 664 L612 610 Z" fill="#8a7a80" opacity="0.6"/>
 <ellipse cx="626" cy="556" rx="12" ry="16" fill="#b0a0a0"/>
 <ellipse cx="622" cy="541" rx="15" ry="10" fill="#5a5050"/>
 <path d="M612 548 L640 548 L640 556 L612 556 Z" fill="#4a4244"/>
 <ellipse cx="650" cy="655" rx="24" ry="14" fill="#30283a"/>
 <path d="M640 655 L724 607" stroke="#d8d8e8" stroke-width="4.5" stroke-linecap="round"/>
 <ellipse cx="718" cy="610" rx="8" ry="4" fill="#e8e8f0" transform="rotate(-30 718 610)"/>
 <path d="M956 592 Q984 578 1012 592 L1018 660 L950 660 Z" fill="#2a2a48"/>
 <g fill="#d0d0e0" opacity="0.7"><circle cx="968" cy="610" r="3"/><circle cx="990" cy="622" r="3"/><circle cx="1002" cy="604" r="2.5"/><circle cx="975" cy="640" r="3"/><circle cx="1005" cy="645" r="2.5"/></g>
 <path d="M950 655 L1022 655 L1026 712 L946 712 Z" fill="#b05060" opacity="0.85"/>
 <path d="M958 548 Q984 522 1010 548 Q1016 580 1008 604 L960 604 Q950 580 958 548 Z" fill="#c8b890"/>
 <ellipse cx="986" cy="560" rx="11" ry="14" fill="#d8c0b0"/>
 <path d="M1004 588 Q1018 540 1034 496" fill="none" stroke="#c8b0a8" stroke-width="6" stroke-linecap="round"/>
 <path d="M1132 590 Q1162 574 1192 590 L1200 708 L1126 708 Z" fill="#3a3a5a"/>
 <ellipse cx="1163" cy="554" rx="12" ry="15" fill="#c0b0b0"/>
 <path d="M1150 542 Q1163 530 1177 542 L1177 548 L1150 548 Z" fill="#b8a890"/>
 <path d="M1160 660 L1258 562" stroke="#d0c098" stroke-width="4.5" stroke-linecap="round"/>
 <ellipse cx="1172" cy="652" rx="18" ry="12" fill="#2a2430"/>
 <path d="M1420 600 Q1452 585 1484 600 L1490 700 L1414 700 Z" fill="#2a2440" opacity="0.6"/>
 <ellipse cx="1452" cy="588" rx="11" ry="14" fill="#4a3a50" opacity="0.6"/>
</g>
<rect x="0" y="730" width="1996" height="401" fill="url(#lg1)"/>
<g filter="url(#blur1)"><path d="M560 790 Q566 735 600 672" fill="none" stroke="#0c0a1c" stroke-width="11" stroke-linecap="round"/><path d="M566 735 L600 672" fill="none" stroke="#0c0a1c" stroke-width="8" stroke-linecap="round"/><ellipse cx="600" cy="666" rx="7" ry="8" fill="#0c0a1c"/><path d="M600 664 L590.5 658.5" stroke="#0c0a1c" stroke-width="3.5" stroke-linecap="round"/><path d="M600 664 L594.8 651" stroke="#0c0a1c" stroke-width="3.5" stroke-linecap="round"/><path d="M600 664 L600 650" stroke="#0c0a1c" stroke-width="3.5" stroke-linecap="round"/><path d="M600 664 L604.1 653.8" stroke="#0c0a1c" stroke-width="3.5" stroke-linecap="round"/><path d="M600 664 L609.7 658.8" stroke="#0c0a1c" stroke-width="3.5" stroke-linecap="round"/><path d="M655 800 Q646.3 755 617 702" fill="none" stroke="#0c0a1c" stroke-width="11" stroke-linecap="round"/><path d="M646.3 755 L617 702" fill="none" stroke="#0c0a1c" stroke-width="8" stroke-linecap="round"/><ellipse cx="617" cy="696" rx="7" ry="8" fill="#0c0a1c"/><path d="M617 694 L607.5 688.5" stroke="#0c0a1c" stroke-width="3.5" stroke-linecap="round"/><path d="M617 694 L611.8 681" stroke="#0c0a1c" stroke-width="3.5" stroke-linecap="round"/><path d="M617 694 L617 680" stroke="#0c0a1c" stroke-width="3.5" stroke-linecap="round"/><path d="M617 694 L621.1 683.8" stroke="#0c0a1c" stroke-width="3.5" stroke-linecap="round"/><path d="M617 694 L626.7 688.8" stroke="#0c0a1c" stroke-width="3.5" stroke-linecap="round"/><path d="M748 795 Q761 715 776 627" fill="none" stroke="#0c0a1c" stroke-width="11" stroke-linecap="round"/><path d="M761 715 L776 627" fill="none" stroke="#0c0a1c" stroke-width="8" stroke-linecap="round"/><ellipse cx="776" cy="621" rx="7" ry="8" fill="#0c0a1c"/><path d="M776 619 L766.5 613.5" stroke="#0c0a1c" stroke-width="3.5" stroke-linecap="round"/><path d="M776 619 L770.8 606" stroke="#0c0a1c" stroke-width="3.5" stroke-linecap="round"/><path d="M776 619 L776 605" stroke="#0c0a1c" stroke-width="3.5" stroke-linecap="round"/><path d="M776 619 L780.1 608.8" stroke="#0c0a1c" stroke-width="3.5" stroke-linecap="round"/><path d="M776 619 L785.7 613.8" stroke="#0c0a1c" stroke-width="3.5" stroke-linecap="round"/><path d="M835 800 Q826.8 730 813 652" fill="none" stroke="#0c0a1c" stroke-width="11" stroke-linecap="round"/><path d="M826.8 730 L813 652" fill="none" stroke="#0c0a1c" stroke-width="8" stroke-linecap="round"/><ellipse cx="813" cy="646" rx="7" ry="8" fill="#0c0a1c"/><path d="M813 644 L803.5 638.5" stroke="#0c0a1c" stroke-width="3.5" stroke-linecap="round"/><path d="M813 644 L807.8 631" stroke="#0c0a1c" stroke-width="3.5" stroke-linecap="round"/><path d="M813 644 L813 630" stroke="#0c0a1c" stroke-width="3.5" stroke-linecap="round"/><path d="M813 644 L817.1 633.8" stroke="#0c0a1c" stroke-width="3.5" stroke-linecap="round"/><path d="M813 644 L822.7 638.8" stroke="#0c0a1c" stroke-width="3.5" stroke-linecap="round"/><path d="M912 805 Q915.7 710.5 942 608" fill="none" stroke="#0c0a1c" stroke-width="11" stroke-linecap="round"/><path d="M915.7 710.5 L942 608" fill="none" stroke="#0c0a1c" stroke-width="8" stroke-linecap="round"/><ellipse cx="942" cy="602" rx="7" ry="8" fill="#0c0a1c"/><path d="M942 600 L932.5 594.5" stroke="#0c0a1c" stroke-width="3.5" stroke-linecap="round"/><path d="M942 600 L936.8 587" stroke="#0c0a1c" stroke-width="3.5" stroke-linecap="round"/><path d="M942 600 L942 586" stroke="#0c0a1c" stroke-width="3.5" stroke-linecap="round"/><path d="M942 600 L946.1 589.8" stroke="#0c0a1c" stroke-width="3.5" stroke-linecap="round"/><path d="M942 600 L951.7 594.8" stroke="#0c0a1c" stroke-width="3.5" stroke-linecap="round"/><path d="M1000 800 Q996.5 735 970 662" fill="none" stroke="#0c0a1c" stroke-width="11" stroke-linecap="round"/><path d="M996.5 735 L970 662" fill="none" stroke="#0c0a1c" stroke-width="8" stroke-linecap="round"/><ellipse cx="970" cy="656" rx="7" ry="8" fill="#0c0a1c"/><path d="M970 654 L960.5 648.5" stroke="#0c0a1c" stroke-width="3.5" stroke-linecap="round"/><path d="M970 654 L964.8 641" stroke="#0c0a1c" stroke-width="3.5" stroke-linecap="round"/><path d="M970 654 L970 640" stroke="#0c0a1c" stroke-width="3.5" stroke-linecap="round"/><path d="M970 654 L974.1 643.8" stroke="#0c0a1c" stroke-width="3.5" stroke-linecap="round"/><path d="M970 654 L979.7 648.8" stroke="#0c0a1c" stroke-width="3.5" stroke-linecap="round"/><path d="M1092 795 Q1108.5 700 1118 597" fill="none" stroke="#0c0a1c" stroke-width="11" stroke-linecap="round"/><path d="M1108.5 700 L1118 597" fill="none" stroke="#0c0a1c" stroke-width="8" stroke-linecap="round"/><ellipse cx="1118" cy="591" rx="7" ry="8" fill="#0c0a1c"/><path d="M1118 589 L1108.5 583.5" stroke="#0c0a1c" stroke-width="3.5" stroke-linecap="round"/><path d="M1118 589 L1112.8 576" stroke="#0c0a1c" stroke-width="3.5" stroke-linecap="round"/><path d="M1118 589 L1118 575" stroke="#0c0a1c" stroke-width="3.5" stroke-linecap="round"/><path d="M1118 589 L1122.1 578.8" stroke="#0c0a1c" stroke-width="3.5" stroke-linecap="round"/><path d="M1118 589 L1127.7 583.8" stroke="#0c0a1c" stroke-width="3.5" stroke-linecap="round"/><path d="M1150 800 Q1137.7 706 1114 604" fill="none" stroke="#0c0a1c" stroke-width="11" stroke-linecap="round"/><path d="M1137.7 706 L1114 604" fill="none" stroke="#0c0a1c" stroke-width="8" stroke-linecap="round"/><ellipse cx="1114" cy="598" rx="7" ry="8" fill="#0c0a1c"/><path d="M1114 596 L1104.5 590.5" stroke="#0c0a1c" stroke-width="3.5" stroke-linecap="round"/><path d="M1114 596 L1108.8 583" stroke="#0c0a1c" stroke-width="3.5" stroke-linecap="round"/><path d="M1114 596 L1114 582" stroke="#0c0a1c" stroke-width="3.5" stroke-linecap="round"/><path d="M1114 596 L1118.1 585.8" stroke="#0c0a1c" stroke-width="3.5" stroke-linecap="round"/><path d="M1114 596 L1123.7 590.8" stroke="#0c0a1c" stroke-width="3.5" stroke-linecap="round"/><path d="M1252 805 Q1264 720 1286 627" fill="none" stroke="#0c0a1c" stroke-width="11" stroke-linecap="round"/><path d="M1264 720 L1286 627" fill="none" stroke="#0c0a1c" stroke-width="8" stroke-linecap="round"/><ellipse cx="1286" cy="621" rx="7" ry="8" fill="#0c0a1c"/><path d="M1286 619 L1276.5 613.5" stroke="#0c0a1c" stroke-width="3.5" stroke-linecap="round"/><path d="M1286 619 L1280.8 606" stroke="#0c0a1c" stroke-width="3.5" stroke-linecap="round"/><path d="M1286 619 L1286 605" stroke="#0c0a1c" stroke-width="3.5" stroke-linecap="round"/><path d="M1286 619 L1290.1 608.8" stroke="#0c0a1c" stroke-width="3.5" stroke-linecap="round"/><path d="M1286 619 L1295.7 613.8" stroke="#0c0a1c" stroke-width="3.5" stroke-linecap="round"/><path d="M1325 800 Q1313.8 730 1311 652" fill="none" stroke="#0c0a1c" stroke-width="11" stroke-linecap="round"/><path d="M1313.8 730 L1311 652" fill="none" stroke="#0c0a1c" stroke-width="8" stroke-linecap="round"/><ellipse cx="1311" cy="646" rx="7" ry="8" fill="#0c0a1c"/><path d="M1311 644 L1301.5 638.5" stroke="#0c0a1c" stroke-width="3.5" stroke-linecap="round"/><path d="M1311 644 L1305.8 631" stroke="#0c0a1c" stroke-width="3.5" stroke-linecap="round"/><path d="M1311 644 L1311 630" stroke="#0c0a1c" stroke-width="3.5" stroke-linecap="round"/><path d="M1311 644 L1315.1 633.8" stroke="#0c0a1c" stroke-width="3.5" stroke-linecap="round"/><path d="M1311 644 L1320.7 638.8" stroke="#0c0a1c" stroke-width="3.5" stroke-linecap="round"/><path d="M1400 810 Q1398.6 740 1430 662" fill="none" stroke="#0c0a1c" stroke-width="11" stroke-linecap="round"/><path d="M1398.6 740 L1430 662" fill="none" stroke="#0c0a1c" stroke-width="8" stroke-linecap="round"/><ellipse cx="1430" cy="656" rx="7" ry="8" fill="#0c0a1c"/><path d="M1430 654 L1420.5 648.5" stroke="#0c0a1c" stroke-width="3.5" stroke-linecap="round"/><path d="M1430 654 L1424.8 641" stroke="#0c0a1c" stroke-width="3.5" stroke-linecap="round"/><path d="M1430 654 L1430 640" stroke="#0c0a1c" stroke-width="3.5" stroke-linecap="round"/><path d="M1430 654 L1434.1 643.8" stroke="#0c0a1c" stroke-width="3.5" stroke-linecap="round"/><path d="M1430 654 L1439.7 648.8" stroke="#0c0a1c" stroke-width="3.5" stroke-linecap="round"/><path d="M700 810 Q693.4 765 690 712" fill="none" stroke="#0c0a1c" stroke-width="11" stroke-linecap="round"/><path d="M693.4 765 L690 712" fill="none" stroke="#0c0a1c" stroke-width="8" stroke-linecap="round"/><ellipse cx="690" cy="706" rx="7" ry="8" fill="#0c0a1c"/><path d="M690 704 L680.5 698.5" stroke="#0c0a1c" stroke-width="3.5" stroke-linecap="round"/><path d="M690 704 L684.8 691" stroke="#0c0a1c" stroke-width="3.5" stroke-linecap="round"/><path d="M690 704 L690 690" stroke="#0c0a1c" stroke-width="3.5" stroke-linecap="round"/><path d="M690 704 L694.1 693.8" stroke="#0c0a1c" stroke-width="3.5" stroke-linecap="round"/><path d="M690 704 L699.7 698.8" stroke="#0c0a1c" stroke-width="3.5" stroke-linecap="round"/><path d="M1190 812 Q1196.2 761 1202 702" fill="none" stroke="#0c0a1c" stroke-width="11" stroke-linecap="round"/><path d="M1196.2 761 L1202 702" fill="none" stroke="#0c0a1c" stroke-width="8" stroke-linecap="round"/><ellipse cx="1202" cy="696" rx="7" ry="8" fill="#0c0a1c"/><path d="M1202 694 L1192.5 688.5" stroke="#0c0a1c" stroke-width="3.5" stroke-linecap="round"/><path d="M1202 694 L1196.8 681" stroke="#0c0a1c" stroke-width="3.5" stroke-linecap="round"/><path d="M1202 694 L1202 680" stroke="#0c0a1c" stroke-width="3.5" stroke-linecap="round"/><path d="M1202 694 L1206.1 683.8" stroke="#0c0a1c" stroke-width="3.5" stroke-linecap="round"/><path d="M1202 694 L1211.7 688.8" stroke="#0c0a1c" stroke-width="3.5" stroke-linecap="round"/></g>
<g filter="url(#blur4)"><path d="M-40 1141 L-40 666.9 Q-12.5 638.9 15 682.2 Q42.5 645.5 70 673.5 Q97.5 645.5 125 685.2 Q152.5 657.2 180 686.3 Q207.5 630.3 235 658.3 Q262.5 627.7 290 655.7 Q317.5 627.7 345 731.9 Q372.5 675 400 703 Q427.5 673.7 455 701.7 Q482.5 673.7 510 779.8 Q537.5 725.5 565 753.5 Q592.5 725.5 620 771.8 Q647.5 725.8 675 753.8 Q702.5 725.8 730 762 Q757.5 709.5 785 737.5 Q812.5 709.5 840 761.7 Q867.5 733.7 895 773.4 Q922.5 728.2 950 756.2 Q977.5 728.2 1005 767.1 Q1032.5 735.6 1060 763.6 Q1087.5 705.2 1115 733.2 Q1142.5 705.2 1170 767.9 Q1197.5 731.6 1225 759.6 Q1252.5 717.1 1280 745.1 Q1307.5 703.6 1335 731.6 Q1362.5 703.6 1390 773.3 Q1417.5 725.6 1445 753.6 Q1472.5 697.9 1500 725.9 Q1527.5 697.9 1555 733.9 Q1582.5 697.7 1610 725.7 Q1637.5 697.7 1665 736.1 Q1692.5 646.7 1720 674.7 Q1747.5 646.7 1775 695 Q1802.5 649.2 1830 677.2 Q1857.5 649.2 1885 701.8 Q1912.5 670.9 1940 698.9 Q1967.5 631.9 1995 659.9 Q2022.5 631.9 2050 661.8 L2076 1141 Z" fill="url(#lgc)"/><ellipse cx="-43.1" cy="884.6" rx="66.7" ry="39.2" fill="#0d0c1a"/><ellipse cx="-43.1" cy="817.9" rx="31.4" ry="39.2" fill="#0d0c1a"/><path d="M-73.7 825.8 A31.4 39.2 0 0 1 -35.3 779.5" fill="none" stroke="#2a50c0" stroke-width="3.5" opacity="0.35"/><ellipse cx="113.6" cy="879.5" rx="69.5" ry="40.9" fill="#0d0c1a"/><ellipse cx="113.6" cy="810" rx="32.7" ry="40.9" fill="#0d0c1a"/><path d="M81.7 818.2 A32.7 40.9 0 0 1 121.8 769.9" fill="none" stroke="#2a50c0" stroke-width="3.5" opacity="0.35"/><ellipse cx="266" cy="886" rx="71.7" ry="42.2" fill="#0d0c1a"/><ellipse cx="266" cy="814.3" rx="33.7" ry="42.2" fill="#0d0c1a"/><path d="M298.9 822.7 A33.7 42.2 0 0 0 257.5 772.9" fill="none" stroke="#2a50c0" stroke-width="3.5" opacity="0.35"/><ellipse cx="430" cy="891" rx="71.5" ry="42.1" fill="#0d0c1a"/><ellipse cx="430" cy="819.5" rx="33.6" ry="42.1" fill="#0d0c1a"/><path d="M462.8 827.9 A33.6 42.1 0 0 0 421.6 778.2" fill="none" stroke="#2a50c0" stroke-width="3.5" opacity="0.35"/><ellipse cx="547.8" cy="848.4" rx="68.9" ry="40.5" fill="#0d0c1a"/><ellipse cx="547.8" cy="779.6" rx="32.4" ry="40.5" fill="#0d0c1a"/><path d="M579.4 787.7 A32.4 40.5 0 0 0 539.7 739.9" fill="none" stroke="#2a50c0" stroke-width="3.5" opacity="0.35"/><ellipse cx="684.2" cy="847.4" rx="74.8" ry="44" fill="#0d0c1a"/><ellipse cx="684.2" cy="772.7" rx="35.2" ry="44" fill="#0d0c1a"/><path d="M649.9 781.5 A35.2 44 0 0 1 693 729.6" fill="none" stroke="#2a50c0" stroke-width="3.5" opacity="0.35"/><ellipse cx="772.7" cy="839" rx="75.2" ry="44.2" fill="#0d0c1a"/><ellipse cx="772.7" cy="763.8" rx="35.4" ry="44.2" fill="#0d0c1a"/><path d="M738.2 772.7 A35.4 44.2 0 0 1 781.5 720.4" fill="none" stroke="#2a50c0" stroke-width="3.5" opacity="0.35"/><ellipse cx="886.3" cy="874.2" rx="66.2" ry="38.9" fill="#0d0c1a"/><ellipse cx="886.3" cy="808" rx="31.1" ry="38.9" fill="#0d0c1a"/><path d="M916.6 815.8 A31.1 38.9 0 0 0 878.5 769.9" fill="none" stroke="#2a50c0" stroke-width="3.5" opacity="0.35"/><ellipse cx="1013.6" cy="851.9" rx="66.3" ry="39" fill="#0d0c1a"/><ellipse cx="1013.6" cy="785.6" rx="31.2" ry="39" fill="#0d0c1a"/><path d="M1044.1 793.4 A31.2 39 0 0 0 1005.8 747.4" fill="none" stroke="#2a50c0" stroke-width="3.5" opacity="0.35"/><ellipse cx="1151" cy="855.6" rx="58.7" ry="34.5" fill="#0d0c1a"/><ellipse cx="1151" cy="796.9" rx="27.6" ry="34.5" fill="#0d0c1a"/><path d="M1124 803.8 A27.6 34.5 0 0 1 1157.9 763" fill="none" stroke="#2a50c0" stroke-width="3.5" opacity="0.35"/><ellipse cx="1340.4" cy="878.8" rx="63.5" ry="37.3" fill="#0d0c1a"/><ellipse cx="1340.4" cy="815.3" rx="29.9" ry="37.3" fill="#0d0c1a"/><path d="M1369.5 822.8 A29.9 37.3 0 0 0 1332.9 778.7" fill="none" stroke="#2a50c0" stroke-width="3.5" opacity="0.35"/><ellipse cx="1523.4" cy="838" rx="59.4" ry="34.9" fill="#0d0c1a"/><ellipse cx="1523.4" cy="778.6" rx="27.9" ry="34.9" fill="#0d0c1a"/><path d="M1550.6 785.6 A27.9 34.9 0 0 0 1516.4 744.4" fill="none" stroke="#2a50c0" stroke-width="3.5" opacity="0.35"/><ellipse cx="1652.8" cy="882" rx="63.7" ry="37.5" fill="#0d0c1a"/><ellipse cx="1652.8" cy="818.3" rx="30" ry="37.5" fill="#0d0c1a"/><path d="M1623.5 825.8 A30 37.5 0 0 1 1660.3 781.5" fill="none" stroke="#2a50c0" stroke-width="3.5" opacity="0.35"/><ellipse cx="1702.1" cy="838" rx="75.5" ry="44.4" fill="#0d0c1a"/><ellipse cx="1702.1" cy="762.5" rx="35.5" ry="44.4" fill="#0d0c1a"/><path d="M1667.4 771.4 A35.5 44.4 0 0 1 1710.9 719" fill="none" stroke="#2a50c0" stroke-width="3.5" opacity="0.35"/><ellipse cx="1858.8" cy="843.7" rx="75.4" ry="44.3" fill="#0d0c1a"/><ellipse cx="1858.8" cy="768.3" rx="35.5" ry="44.3" fill="#0d0c1a"/><path d="M1824.2 777.2 A35.5 44.3 0 0 1 1867.7 724.8" fill="none" stroke="#2a50c0" stroke-width="3.5" opacity="0.35"/><ellipse cx="2004.4" cy="862.1" rx="70.9" ry="41.7" fill="#0d0c1a"/><ellipse cx="2004.4" cy="791.2" rx="33.4" ry="41.7" fill="#0d0c1a"/><path d="M2036.9 799.5 A33.4 41.7 0 0 0 1996 750.3" fill="none" stroke="#2a50c0" stroke-width="3.5" opacity="0.35"/><ellipse cx="27.1" cy="1005.2" rx="98.8" ry="58.1" fill="#0d0c1a"/><ellipse cx="27.1" cy="906.4" rx="46.5" ry="58.1" fill="#0d0c1a"/><path d="M-18.2 918.1 A46.5 58.1 0 0 1 38.7 849.5" fill="none" stroke="#2a50c0" stroke-width="3.5" opacity="0.35"/><ellipse cx="208.8" cy="1004.4" rx="111.5" ry="65.6" fill="#0d0c1a"/><ellipse cx="208.8" cy="892.9" rx="52.5" ry="65.6" fill="#0d0c1a"/><path d="M157.6 906.1 A52.5 65.6 0 0 1 221.9 828.7" fill="none" stroke="#2a50c0" stroke-width="3.5" opacity="0.35"/><ellipse cx="437.8" cy="981.3" rx="100" ry="58.8" fill="#0d0c1a"/><ellipse cx="437.8" cy="881.3" rx="47.1" ry="58.8" fill="#0d0c1a"/><path d="M483.7 893 A47.1 58.8 0 0 0 426.1 823.6" fill="none" stroke="#2a50c0" stroke-width="3.5" opacity="0.35"/><ellipse cx="590.3" cy="1002.4" rx="93.1" ry="54.8" fill="#0d0c1a"/><ellipse cx="590.3" cy="909.2" rx="43.8" ry="54.8" fill="#0d0c1a"/><path d="M547.6 920.2 A43.8 54.8 0 0 1 601.2 855.6" fill="none" stroke="#2a50c0" stroke-width="3.5" opacity="0.35"/><ellipse cx="745.1" cy="973.5" rx="85.6" ry="50.3" fill="#0d0c1a"/><ellipse cx="745.1" cy="887.9" rx="40.3" ry="50.3" fill="#0d0c1a"/><path d="M705.9 898 A40.3 50.3 0 0 1 755.2 838.6" fill="none" stroke="#2a50c0" stroke-width="3.5" opacity="0.35"/><ellipse cx="903.3" cy="985" rx="94.2" ry="55.4" fill="#0d0c1a"/><ellipse cx="903.3" cy="890.8" rx="44.3" ry="55.4" fill="#0d0c1a"/><path d="M860.1 901.8 A44.3 55.4 0 0 1 914.4 836.4" fill="none" stroke="#2a50c0" stroke-width="3.5" opacity="0.35"/><ellipse cx="1122" cy="936.9" rx="85.6" ry="50.4" fill="#0d0c1a"/><ellipse cx="1122" cy="851.3" rx="40.3" ry="50.4" fill="#0d0c1a"/><path d="M1161.3 861.4 A40.3 50.4 0 0 0 1112 802" fill="none" stroke="#2a50c0" stroke-width="3.5" opacity="0.35"/><ellipse cx="1334.1" cy="962.4" rx="97.3" ry="57.2" fill="#0d0c1a"/><ellipse cx="1334.1" cy="865.1" rx="45.8" ry="57.2" fill="#0d0c1a"/><path d="M1289.4 876.5 A45.8 57.2 0 0 1 1345.5 809" fill="none" stroke="#2a50c0" stroke-width="3.5" opacity="0.35"/><ellipse cx="1400.8" cy="967.3" rx="106.2" ry="62.5" fill="#0d0c1a"/><ellipse cx="1400.8" cy="861.1" rx="50" ry="62.5" fill="#0d0c1a"/><path d="M1352.1 873.6 A50 62.5 0 0 1 1413.3 799.9" fill="none" stroke="#2a50c0" stroke-width="3.5" opacity="0.35"/><ellipse cx="1598.1" cy="979.3" rx="106.7" ry="62.7" fill="#0d0c1a"/><ellipse cx="1598.1" cy="872.6" rx="50.2" ry="62.7" fill="#0d0c1a"/><path d="M1647.1 885.2 A50.2 62.7 0 0 0 1585.6 811.1" fill="none" stroke="#2a50c0" stroke-width="3.5" opacity="0.35"/><ellipse cx="1874.3" cy="978.7" rx="87.7" ry="51.6" fill="#0d0c1a"/><ellipse cx="1874.3" cy="891" rx="41.3" ry="51.6" fill="#0d0c1a"/><path d="M1914.5 901.3 A41.3 51.6 0 0 0 1863.9 840.5" fill="none" stroke="#2a50c0" stroke-width="3.5" opacity="0.35"/><ellipse cx="2008.3" cy="959.7" rx="93.5" ry="55" fill="#0d0c1a"/><ellipse cx="2008.3" cy="866.2" rx="44" ry="55" fill="#0d0c1a"/><path d="M1965.4 877.2 A44 55 0 0 1 2019.3 812.3" fill="none" stroke="#2a50c0" stroke-width="3.5" opacity="0.35"/><ellipse cx="68.4" cy="1105.9" rx="140.1" ry="82.4" fill="#0d0c1a"/><ellipse cx="68.4" cy="965.8" rx="65.9" ry="82.4" fill="#0d0c1a"/><path d="M4.2 982.3 A65.9 82.4 0 0 1 84.9 885.1" fill="none" stroke="#2a50c0" stroke-width="3.5" opacity="0.35"/><ellipse cx="312.9" cy="1122.1" rx="148.6" ry="87.4" fill="#0d0c1a"/><ellipse cx="312.9" cy="973.5" rx="69.9" ry="87.4" fill="#0d0c1a"/><path d="M381.1 991 A69.9 87.4 0 0 0 295.4 887.8" fill="none" stroke="#2a50c0" stroke-width="3.5" opacity="0.35"/><ellipse cx="438.4" cy="1129" rx="124.5" ry="73.2" fill="#0d0c1a"/><ellipse cx="438.4" cy="1004.5" rx="58.6" ry="73.2" fill="#0d0c1a"/><path d="M381.3 1019.2 A58.6 73.2 0 0 1 453 932.8" fill="none" stroke="#2a50c0" stroke-width="3.5" opacity="0.35"/><ellipse cx="714.5" cy="1124.2" rx="117" ry="68.8" fill="#0d0c1a"/><ellipse cx="714.5" cy="1007.2" rx="55.1" ry="68.8" fill="#0d0c1a"/><path d="M768.2 1021 A55.1 68.8 0 0 0 700.7 939.8" fill="none" stroke="#2a50c0" stroke-width="3.5" opacity="0.35"/><ellipse cx="962.6" cy="1149.2" rx="139.1" ry="81.8" fill="#0d0c1a"/><ellipse cx="962.6" cy="1010.2" rx="65.4" ry="81.8" fill="#0d0c1a"/><path d="M898.8 1026.5 A65.4 81.8 0 0 1 978.9 930" fill="none" stroke="#2a50c0" stroke-width="3.5" opacity="0.35"/><ellipse cx="1206.9" cy="1128.8" rx="119.1" ry="70.1" fill="#0d0c1a"/><ellipse cx="1206.9" cy="1009.7" rx="56" ry="70.1" fill="#0d0c1a"/><path d="M1152.3 1023.7 A56 70.1 0 0 1 1220.9 941" fill="none" stroke="#2a50c0" stroke-width="3.5" opacity="0.35"/><ellipse cx="1494.3" cy="1122" rx="136.8" ry="80.4" fill="#0d0c1a"/><ellipse cx="1494.3" cy="985.3" rx="64.4" ry="80.4" fill="#0d0c1a"/><path d="M1431.5 1001.4 A64.4 80.4 0 0 1 1510.3 906.4" fill="none" stroke="#2a50c0" stroke-width="3.5" opacity="0.35"/><ellipse cx="1709.9" cy="1125.5" rx="127.4" ry="75" fill="#0d0c1a"/><ellipse cx="1709.9" cy="998.1" rx="60" ry="75" fill="#0d0c1a"/><path d="M1651.4 1013 A60 75 0 0 1 1724.9 924.6" fill="none" stroke="#2a50c0" stroke-width="3.5" opacity="0.35"/><ellipse cx="1867.2" cy="1108.5" rx="123.7" ry="72.8" fill="#0d0c1a"/><ellipse cx="1867.2" cy="984.8" rx="58.2" ry="72.8" fill="#0d0c1a"/><path d="M1810.4 999.4 A58.2 72.8 0 0 1 1881.8 913.5" fill="none" stroke="#2a50c0" stroke-width="3.5" opacity="0.35"/><ellipse cx="183.2" cy="1337.4" rx="204.6" ry="120.3" fill="#0d0c1a"/><ellipse cx="183.2" cy="1132.8" rx="96.3" ry="120.3" fill="#0d0c1a"/><path d="M89.4 1156.9 A96.3 120.3 0 0 1 207.3 1014.9" fill="none" stroke="#2a50c0" stroke-width="3.5" opacity="0.35"/><ellipse cx="396.5" cy="1329.3" rx="190.1" ry="111.8" fill="#0d0c1a"/><ellipse cx="396.5" cy="1139.1" rx="89.5" ry="111.8" fill="#0d0c1a"/><path d="M483.7 1161.5 A89.5 111.8 0 0 0 374.1 1029.5" fill="none" stroke="#2a50c0" stroke-width="3.5" opacity="0.35"/><ellipse cx="750.5" cy="1317.4" rx="187.2" ry="110.1" fill="#0d0c1a"/><ellipse cx="750.5" cy="1130.2" rx="88.1" ry="110.1" fill="#0d0c1a"/><path d="M664.6 1152.2 A88.1 110.1 0 0 1 772.5 1022.3" fill="none" stroke="#2a50c0" stroke-width="3.5" opacity="0.35"/><ellipse cx="1008.8" cy="1331.2" rx="197.9" ry="116.4" fill="#0d0c1a"/><ellipse cx="1008.8" cy="1133.4" rx="93.1" ry="116.4" fill="#0d0c1a"/><path d="M918 1156.7 A93.1 116.4 0 0 1 1032.1 1019.3" fill="none" stroke="#2a50c0" stroke-width="3.5" opacity="0.35"/><ellipse cx="1212.4" cy="1248.3" rx="153.6" ry="90.4" fill="#0d0c1a"/><ellipse cx="1212.4" cy="1094.7" rx="72.3" ry="90.4" fill="#0d0c1a"/><path d="M1282.8 1112.7 A72.3 90.4 0 0 0 1194.3 1006.1" fill="none" stroke="#2a50c0" stroke-width="3.5" opacity="0.35"/><ellipse cx="1711.7" cy="1316.6" rx="182.6" ry="107.4" fill="#0d0c1a"/><ellipse cx="1711.7" cy="1134" rx="85.9" ry="107.4" fill="#0d0c1a"/><path d="M1795.5 1155.5 A85.9 107.4 0 0 0 1690.2 1028.7" fill="none" stroke="#2a50c0" stroke-width="3.5" opacity="0.35"/><ellipse cx="1917.3" cy="1265.9" rx="178.7" ry="105.1" fill="#0d0c1a"/><ellipse cx="1917.3" cy="1087.2" rx="84.1" ry="105.1" fill="#0d0c1a"/><path d="M1999.3 1108.3 A84.1 105.1 0 0 0 1896.3 984.3" fill="none" stroke="#2a50c0" stroke-width="3.5" opacity="0.35"/><g opacity="0.45"></g></g>
</g><rect width="1996" height="1131" fill="#121218" opacity="0.34"/></svg>
<div class="a" style="left:37px;top:962px;width:921.5px;height:121px;border-radius:61px;background:#202226;"></div>
<svg class="a" style="left:103px;top:1000px" width="56" height="46" viewBox="0 0 56 46"><path d="M2.5 14 V6 A3.5 3.5 0 0 1 6 2.5 H50 A3.5 3.5 0 0 1 53.5 6 V40 A3.5 3.5 0 0 1 50 43.5 H30" fill="none" stroke="#f2f2f2" stroke-width="5"/><path d="M2.5 22 A21 21 0 0 1 23.5 43 M2.5 31 A12 12 0 0 1 14.5 43" fill="none" stroke="#f2f2f2" stroke-width="5"/><circle cx="5" cy="40.5" r="3" fill="#f2f2f2"/></svg>
<div class="t" style="left:191px;top:1005.6px;font-size:36.3px;color:#f4f4f4;">Reproduciendo en el TV de la sala de estar</div>
</div>

  <!-- title -->
  <div class="t" style="left:123px;top:1514px;font-size:40.5px;color:#2c2d2f;">Concierto en vivo: Palm Springs</div>

  <div class="a" style="left:2151.5px;top:600px;width:288px;height:166px;border-radius:14px;background:#86878a;"></div>
<div class="a" style="left:2151.5px;top:783px;width:288px;height:166px;border-radius:14px;background:#86878a;"></div>
<div class="a" style="left:2447px;top:786.5px;width:287px;height:32px;border-radius:16.0px;background:#898a8c;"></div>
<div class="a" style="left:2447px;top:824px;width:343px;height:33px;border-radius:16.5px;background:#898a8c;"></div>
<div class="a" style="left:2447px;top:861.5px;width:152px;height:26px;border-radius:13.0px;background:#898a8c;"></div>
<div class="a" style="left:2447px;top:892.5px;width:228px;height:26px;border-radius:13.0px;background:#898a8c;"></div>
<div class="a" style="left:2151.5px;top:963px;width:288px;height:166px;border-radius:14px;background:#86878a;"></div>
<div class="a" style="left:2447px;top:963px;width:287px;height:32px;border-radius:16.0px;background:#898a8c;"></div>
<div class="a" style="left:2447px;top:1000px;width:343px;height:32px;border-radius:16.0px;background:#898a8c;"></div>
<div class="a" style="left:2447px;top:1041px;width:152px;height:26px;border-radius:13.0px;background:#898a8c;"></div>
<div class="a" style="left:2447px;top:1075px;width:251px;height:26px;border-radius:13.0px;background:#898a8c;"></div>
<div class="a" style="left:2151.5px;top:1142px;width:288px;height:166px;border-radius:14px;background:#86878a;"></div>
<div class="a" style="left:2447px;top:1152px;width:287px;height:32px;border-radius:16.0px;background:#898a8c;"></div>
<div class="a" style="left:2447px;top:1189px;width:209px;height:26px;border-radius:13.0px;background:#898a8c;"></div>
<div class="a" style="left:2151.5px;top:1320px;width:288px;height:166px;border-radius:14px;background:#86878a;"></div>
<div class="a" style="left:2447px;top:1326px;width:356px;height:32px;border-radius:16.0px;background:#898a8c;"></div>
<div class="a" style="left:2447px;top:1363px;width:308px;height:33px;border-radius:16.5px;background:#898a8c;"></div>
<div class="a" style="left:2447px;top:1401.5px;width:152px;height:26px;border-radius:13.0px;background:#898a8c;"></div>
<div class="a" style="left:2447px;top:1433px;width:335px;height:26px;border-radius:13.0px;background:#898a8c;"></div>
<div class="a" style="left:2151.5px;top:1497px;width:288px;height:166px;border-radius:14px;background:#86878a;"></div>
<div class="a" style="left:2447px;top:1497px;width:335px;height:32px;border-radius:16.0px;background:#898a8c;"></div>
<div class="a" style="left:2447px;top:1534px;width:308px;height:33px;border-radius:16.5px;background:#898a8c;"></div>
<div class="a" style="left:2447px;top:1574px;width:152px;height:26px;border-radius:13.0px;background:#898a8c;"></div>
</div>

<div class="a" style="left:3116px;top:399px;width:114px;height:114px;border-radius:50%;background:#e7e8ed;box-shadow:0 3px 14px rgba(0,0,0,0.28);"></div>
<svg class="a" style="left:3144px;top:438px" width="58" height="46" viewBox="0 0 58 46"><path d="M2 6.2 H36 M2 17.5 H36 M2 28.5 H25" stroke="#000" stroke-width="5.2"/><path d="M45 33 V5.7 H56" fill="none" stroke="#000" stroke-width="5.5"/><circle cx="39" cy="33" r="9" fill="#000"/></svg>
<div class="a" style="left:2508px;top:557px;width:801px;height:471.5px;border-radius:16px;overflow:hidden;background:#fff;box-shadow:0 6px 28px rgba(0,0,0,0.35);">
 <div class="a" style="left:0;top:0;width:801px;height:264.5px;background:#060912;"></div>
 <svg class="a" style="left:435px;top:0" width="366" height="265" viewBox="351.8 71 1281 926" preserveAspectRatio="none"><use href="#scene"/></svg>
 <div class="a" style="left:435px;top:0;width:60px;height:265px;background:linear-gradient(to right,#060912,rgba(6,9,18,0));"></div>
 <div class="a" style="left:41px;top:38.5px;width:57px;height:16px;border-radius:8px;background:#ccd2f8;"></div>
 <div class="a" style="left:41px;top:88px;width:257px;height:16px;border-radius:8px;background:#ccd2f8;"></div>
 <div class="a" style="left:41px;top:115px;width:134px;height:18px;border-radius:9px;background:#ccd2f8;"></div>
 <svg class="a" style="left:2548px;top:0" width="1" height="1"></svg>
 <svg class="a" style="left:47px;top:190px" width="42" height="28" viewBox="0 0 42 28"><path d="M3.4 13.3 L17.6 3.8 L17.6 23.2 Z M23.5 13.3 L38.3 3.8 L38.3 23.2 Z" fill="#ccd2f8" stroke="#ccd2f8" stroke-width="3" stroke-linejoin="round"/></svg>
 <svg class="a" style="left:135px;top:188px" width="30" height="32" viewBox="0 0 30 32"><path d="M4.4 3.6 L25.2 15.5 L4.4 27.4 Z" fill="#ccd2f8" stroke="#ccd2f8" stroke-width="3.5" stroke-linejoin="round"/></svg>
 <svg class="a" style="left:205px;top:190px" width="42" height="28" viewBox="0 0 42 28"><path d="M4.1 3.8 L18.2 13.3 L4.1 23.2 Z M24.5 3.8 L38.7 13.3 L24.5 23.2 Z" fill="#ccd2f8" stroke="#ccd2f8" stroke-width="3" stroke-linejoin="round"/></svg>
 <div class="a" style="left:276.5px;top:178.5px;width:3.5px;height:51px;border-radius:2px;background:#ccd2f8;"></div>
 <svg class="a" style="left:306px;top:181px" width="50" height="40" viewBox="0 0 50 40"><path d="M2 2 L15 15" fill="none" stroke="#ccd2f8" stroke-width="3.6"/><path d="M15.8 1.8 V16.6 H1.9" fill="none" stroke="#ccd2f8" stroke-width="3.6"/><path d="M4.3 21.5 V34.9 H23.6" fill="none" stroke="#ccd2f8" stroke-width="3.6"/><path d="M21.7 4.9 H43 V21.6" fill="none" stroke="#ccd2f8" stroke-width="3.6"/><rect x="27.6" y="24.9" width="19.4" height="12.3" rx="1" fill="#ccd2f8"/></svg>
 <div class="a" style="left:0;top:369px;width:801px;height:1.6px;background:#94a3c8;"></div>
 <svg class="a" style="left:45px;top:297px" width="48" height="40" viewBox="0 0 48 40"><rect x="4.3" y="3.9" width="40.8" height="32.3" rx="2.5" fill="none" stroke="#000" stroke-width="3"/><path d="M11.3 18.9 H14.8 M18.2 18.9 H38.1 M11.3 25.1 H31.3 M35 25.1 H38.1" stroke="#000" stroke-width="3.2"/></svg>
 <div class="t" style="left:124.5px;top:299.5px;font-size:35px;color:#1d1d1f;">Subtitulado instantáneo</div>
 <svg class="a" style="left:704px;top:302px" width="56" height="32" viewBox="0 0 56 32"><rect x="5.05" y="4.25" width="44.5" height="22.5" rx="11.25" fill="none" stroke="#000" stroke-width="4.5"/><circle cx="15.9" cy="15.4" r="6.6" fill="#000"/></svg>
 <svg class="a" style="left:45px;top:396px" width="50" height="50" viewBox="0 0 50 50"><path d="M30.2 10.0 L29.3 4.2 L20.7 4.2 L19.8 10.0 L15.2 12.7 L9.7 10.5 L5.4 17.9 L10.0 21.7 L10.0 26.9 L5.4 30.7 L9.7 38.1 L15.2 35.9 L19.8 38.6 L20.7 44.4 L29.3 44.4 L30.2 38.6 L34.8 35.9 L40.3 38.1 L44.6 30.7 L40.0 26.9 L40.0 21.7 L44.6 17.9 L40.3 10.5 L34.8 12.7 Z" fill="none" stroke="#000" stroke-width="3.2" stroke-linejoin="round"/><circle cx="25" cy="24.3" r="7" fill="#000"/></svg>
 <div class="t" style="left:124.5px;top:403px;font-size:35px;color:#1d1d1f;">Configuración de subtítulos</div>
 <svg class="a" style="left:724px;top:398px" width="46" height="46" viewBox="0 0 46 46"><path d="M21 4.5 H6 Q3.9 4.5 3.9 6.6 V38.9 Q3.9 41 6 41 H38.8 Q40.9 41 40.9 38.9 V24.4" fill="none" stroke="#000" stroke-width="3.4"/><path d="M24.4 4.5 H40.9 V20.4" fill="none" stroke="#000" stroke-width="3.4"/><path d="M16.4 29 L40 5.4" fill="none" stroke="#000" stroke-width="3.4"/></svg>
</div>
</body></html>
